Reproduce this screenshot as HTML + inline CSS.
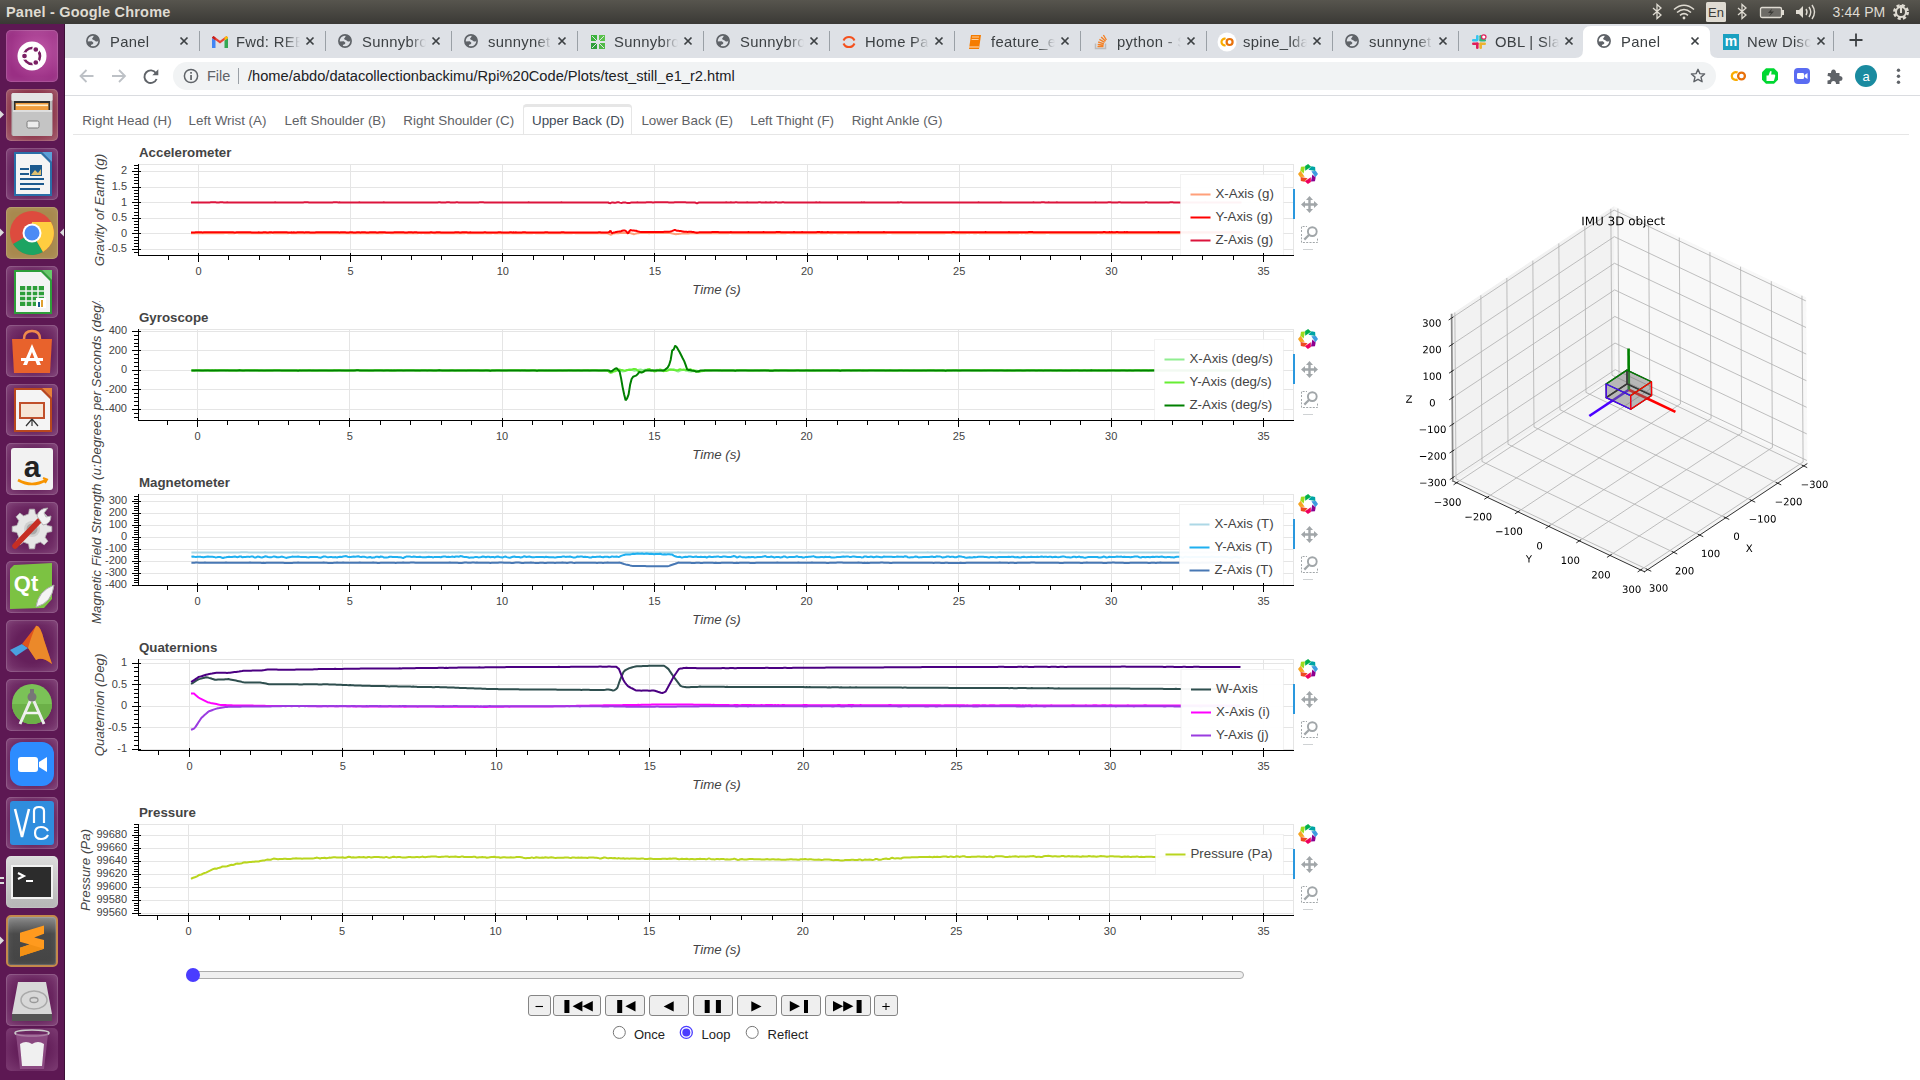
<!DOCTYPE html>
<html><head><meta charset="utf-8"><title>Panel</title>
<style>
html,body{margin:0;padding:0;width:1920px;height:1080px;overflow:hidden;background:#fff;font-family:"Liberation Sans",sans-serif}
svg text{font-family:"Liberation Sans",sans-serif}
</style></head><body>
<div style="position:absolute;left:65px;top:96px;width:1855px;height:984px;background:#fff"></div>
<div style="position:absolute;left:0;top:0;width:1920px;height:24px;background:linear-gradient(#57554e,#3a3935)"></div>
<div style="position:absolute;left:6px;top:3px;font:bold 14.5px/18px 'Liberation Sans',sans-serif;color:#dfdbd2;letter-spacing:0.2px">Panel - Google Chrome</div>
<svg style="position:absolute;left:1648px;top:0" width="272" height="24" viewBox="1648 0 272 24">
<g stroke="#dfdbd2" stroke-width="1.3" fill="none">
<path d="M1653 8 L1661 15 L1657 18.5 L1657 4.5 L1661 8 L1653 15"/>
<path d="M1738 8 L1746 15 L1742 18.5 L1742 4.5 L1746 8 L1738 15"/>
</g>
<path d="M1674 9.5 Q1684 1 1694 9.5" stroke="#dfdbd2" stroke-width="1.6" fill="none"/>
<path d="M1677 12.5 Q1684 6.5 1691 12.5" stroke="#dfdbd2" stroke-width="1.6" fill="none"/>
<path d="M1680 15.3 Q1684 12 1688 15.3" stroke="#dfdbd2" stroke-width="1.6" fill="none"/>
<circle cx="1684" cy="18" r="1.4" fill="#dfdbd2"/>
<rect x="1706" y="2" width="20" height="20" rx="1.5" fill="#dfdbd2"/>
<text x="1716" y="17" text-anchor="middle" font-family="Liberation Sans" font-size="13" fill="#3c3b37">En</text>
<rect x="1760.5" y="7.5" width="21" height="10" rx="1.5" stroke="#dfdbd2" stroke-width="1.3" fill="#6d6b66"/>
<rect x="1782" y="10" width="2" height="5" fill="#dfdbd2"/>
<path d="M1772 8.5 L1768 13 L1771 13 L1769 16.5 L1774 11.5 L1771 11.5Z" fill="#3c3b37"/>
<path d="M1796 10 L1799 10 L1803 6 L1803 18 L1799 14 L1796 14Z" fill="#dfdbd2"/>
<path d="M1806 9 Q1808 12 1806 15 M1809 7 Q1812.5 12 1809 17 M1812 5 Q1817 12 1812 19" stroke="#dfdbd2" stroke-width="1.4" fill="none"/>
<text x="1832.5" y="17" font-family="Liberation Sans" font-size="14" fill="#dfdbd2" letter-spacing="0.1">3:44 PM</text>
<g transform="translate(1901,12)"><circle r="6.5" stroke="#dfdbd2" stroke-width="3" fill="none" stroke-dasharray="3 2.1"/><circle r="5" stroke="#dfdbd2" stroke-width="2" fill="none"/><path d="M0 -7 L0 1" stroke="#dfdbd2" stroke-width="2"/></g>
</svg>
<div style="position:absolute;left:0;top:24px;width:64px;height:1056px;background:#5d1853"></div>
<div style="position:absolute;left:64px;top:24px;width:1px;height:1056px;background:#3c1036"></div>
<div style="position:absolute;left:6px;top:30px;width:52px;height:52px;border-radius:5px;box-shadow:inset 0 0 0 1px rgba(255,255,255,0.13),inset 0 0 7px rgba(255,255,255,0.12);background:radial-gradient(circle at 60% 40%,#c05aa8,#9a2f84 70%);overflow:hidden"><svg width="52" height="52" viewBox="0 0 52 52"><circle cx="26" cy="26" r="14.5" fill="#fff"/>
<circle cx="26" cy="26" r="8" stroke="#7a1f63" stroke-width="2.6" fill="none"/>
<circle cx="18.5" cy="26" r="3" fill="#7a1f63" stroke="#fff" stroke-width="1.3"/><circle cx="29.8" cy="19.5" r="3" fill="#7a1f63" stroke="#fff" stroke-width="1.3"/><circle cx="29.8" cy="32.5" r="3" fill="#7a1f63" stroke="#fff" stroke-width="1.3"/></svg></div>
<div style="position:absolute;left:6px;top:89px;width:52px;height:52px;border-radius:5px;box-shadow:inset 0 0 0 1px rgba(255,255,255,0.13),inset 0 0 7px rgba(255,255,255,0.12);background:radial-gradient(ellipse at 50% 45%,#8a3348 50%,#a2596a 100%);overflow:hidden"><svg width="52" height="52" viewBox="0 0 52 52"><rect x="5.5" y="4" width="41" height="43" rx="2" fill="#b8b8b8"/><rect x="5.5" y="4" width="41" height="8" rx="1.5" fill="#e4e4e4"/>
<rect x="8" y="12" width="36" height="9" fill="#2e2e2e"/><rect x="9.5" y="14" width="33" height="7" fill="#ef9d3e"/><rect x="10" y="15.5" width="32" height="1.6" fill="#fff0d0"/>
<rect x="7" y="21" width="39" height="26" fill="#c4c4c4"/><rect x="7" y="21" width="39" height="2" fill="#dedede"/><rect x="21" y="32" width="12" height="7" rx="1.5" fill="#ececec" stroke="#7a7a7a" stroke-width="1"/></svg></div>
<div style="position:absolute;left:6px;top:148px;width:52px;height:52px;border-radius:5px;box-shadow:inset 0 0 0 1px rgba(255,255,255,0.13),inset 0 0 7px rgba(255,255,255,0.12);background:radial-gradient(ellipse at 50% 50%,#65205b 45%,#7d3c73 100%);overflow:hidden"><svg width="52" height="52" viewBox="0 0 52 52"><path d="M8 4 L36 4 L46 14 L46 48 L8 48Z" fill="#2a6fa8"/><path d="M10 6 L35 6 L44 15 L44 46 L10 46Z" fill="#f4f4f4"/><path d="M36 4 L46 4 L46 14Z" fill="#5aa0d8"/>
<rect x="14" y="20" width="9" height="2" fill="#1d5a8e"/><rect x="14" y="25" width="9" height="2" fill="#1d5a8e"/><rect x="24" y="17" width="12" height="11" fill="#1d5a8e"/><path d="M25 27 L29 22 L32 25 L35 21 L35 27Z" fill="#e0c070"/>
<rect x="14" y="30" width="24" height="2" fill="#1d5a8e"/><rect x="14" y="35" width="24" height="2" fill="#1d5a8e"/><rect x="14" y="40" width="20" height="2" fill="#1d5a8e"/></svg></div>
<div style="position:absolute;left:6px;top:207px;width:52px;height:52px;border-radius:5px;box-shadow:inset 0 0 0 1px rgba(255,255,255,0.13),inset 0 0 7px rgba(255,255,255,0.12);background:#a8894e;overflow:hidden"><svg width="52" height="52" viewBox="0 0 52 52"><circle cx="26" cy="26" r="22" fill="#dd4b3e"/>
<path d="M26 26 L7 37 A22 22 0 0 0 37 45Z" fill="#1da462"/><path d="M26 26 L37 45 A22 22 0 0 0 45 15 L26 15Z" fill="#ffcd40"/>
<circle cx="26" cy="26" r="9.5" fill="#fff"/><circle cx="26" cy="26" r="7.5" fill="#4c8bf5"/></svg></div>
<div style="position:absolute;left:6px;top:266px;width:52px;height:52px;border-radius:5px;box-shadow:inset 0 0 0 1px rgba(255,255,255,0.13),inset 0 0 7px rgba(255,255,255,0.12);background:radial-gradient(ellipse at 50% 50%,#65205b 45%,#7d3c73 100%);overflow:hidden"><svg width="52" height="52" viewBox="0 0 52 52"><path d="M8 4 L36 4 L46 14 L46 48 L8 48Z" fill="#2e9e3a"/><path d="M10 6 L35 6 L44 15 L44 46 L10 46Z" fill="#f4f4f4"/><path d="M36 4 L46 4 L46 14Z" fill="#66c96a"/>
<g fill="#2e9e3a"><rect x="14" y="20" width="24" height="20"/></g><g stroke="#f4f4f4" stroke-width="1.5"><path d="M14 25 H38 M14 30 H38 M14 35 H38 M20 20 V40 M26 20 V40 M32 20 V40"/></g><rect x="30" y="32" width="10" height="10" fill="#fff"/><rect x="32" y="36" width="2" height="5" fill="#1d5a8e"/><rect x="35" y="34" width="2" height="7" fill="#e0a030"/></svg></div>
<div style="position:absolute;left:6px;top:325px;width:52px;height:52px;border-radius:5px;box-shadow:inset 0 0 0 1px rgba(255,255,255,0.13),inset 0 0 7px rgba(255,255,255,0.12);background:radial-gradient(ellipse at 50% 50%,#65205b 45%,#7d3c73 100%);overflow:hidden"><svg width="52" height="52" viewBox="0 0 52 52"><path d="M18 14 Q18 6 26 6 Q34 6 34 14" stroke="#f08a4b" stroke-width="2.5" fill="none"/><path d="M6 14 L46 14 L44 48 L8 48Z" fill="#e8622c"/>
<path d="M26 19 L35 40 L31 40 L26 27 L21 40 L17 40Z" fill="#fff"/><rect x="15" y="33" width="22" height="3" fill="#fff"/></svg></div>
<div style="position:absolute;left:6px;top:384px;width:52px;height:52px;border-radius:5px;box-shadow:inset 0 0 0 1px rgba(255,255,255,0.13),inset 0 0 7px rgba(255,255,255,0.12);background:radial-gradient(ellipse at 50% 50%,#65205b 45%,#7d3c73 100%);overflow:hidden"><svg width="52" height="52" viewBox="0 0 52 52"><path d="M8 4 L36 4 L46 14 L46 48 L8 48Z" fill="#b8471e"/><path d="M10 6 L35 6 L44 15 L44 46 L10 46Z" fill="#f4f4f4"/><path d="M36 4 L46 4 L46 14Z" fill="#e6803a"/>
<rect x="13" y="18" width="26" height="17" fill="#c0502a"/><rect x="15" y="20" width="22" height="13" fill="#f6e6d6"/><path d="M26 35 L20 42 M26 35 L32 42 M26 35 L26 42" stroke="#333" stroke-width="1.2"/></svg></div>
<div style="position:absolute;left:6px;top:443px;width:52px;height:52px;border-radius:5px;box-shadow:inset 0 0 0 1px rgba(255,255,255,0.13),inset 0 0 7px rgba(255,255,255,0.12);background:radial-gradient(ellipse at 50% 50%,#65205b 45%,#7d3c73 100%);overflow:hidden"><svg width="52" height="52" viewBox="0 0 52 52"><rect x="5" y="5" width="42" height="42" rx="3" fill="#f2f2f2"/>
<text x="26" y="34" text-anchor="middle" font-family="Liberation Sans" font-weight="bold" font-size="30" fill="#222">a</text><path d="M12 37 Q26 45 40 37" stroke="#f79400" stroke-width="2.6" fill="none"/><path d="M37 35 L41 36.5 L39 40" stroke="#f79400" stroke-width="2" fill="none"/></svg></div>
<div style="position:absolute;left:6px;top:502px;width:52px;height:52px;border-radius:5px;box-shadow:inset 0 0 0 1px rgba(255,255,255,0.13),inset 0 0 7px rgba(255,255,255,0.12);background:radial-gradient(ellipse at 50% 50%,#65205b 45%,#7d3c73 100%);overflow:hidden"><svg width="52" height="52" viewBox="0 0 52 52"><path d="M41.1 23.6 L45.8 24.4 L45.8 29.6 L41.1 30.4 L39.1 35.3 L41.9 39.2 L38.2 42.9 L34.3 40.1 L29.4 42.1 L28.6 46.8 L23.4 46.8 L22.6 42.1 L17.7 40.1 L13.8 42.9 L10.1 39.2 L12.9 35.3 L10.9 30.4 L6.2 29.6 L6.2 24.4 L10.9 23.6 L12.9 18.7 L10.1 14.8 L13.8 11.1 L17.7 13.9 L22.6 11.9 L23.4 7.2 L28.6 7.2 L29.4 11.9 L34.3 13.9 L38.2 11.1 L41.9 14.8 L39.1 18.7Z" fill="#e6e6e6" stroke="#b8b8b8" stroke-width="0.8"/><circle cx="26" cy="27" r="8" fill="#cfcfcf"/><circle cx="26" cy="27" r="5.5" fill="#a8a8a8"/><path d="M9 44 L33 19" stroke="#c62e24" stroke-width="5.5" stroke-linecap="round"/><path d="M31 14 Q33 6 42 6 L38 11 L40 15 L45 14 Q45 22 37 23 Z" fill="#f2f2f2" stroke="#aaa" stroke-width="0.8"/></svg></div>
<div style="position:absolute;left:6px;top:561px;width:52px;height:52px;border-radius:5px;box-shadow:inset 0 0 0 1px rgba(255,255,255,0.13),inset 0 0 7px rgba(255,255,255,0.12);background:radial-gradient(ellipse at 50% 50%,#65205b 45%,#7d3c73 100%);overflow:hidden"><svg width="52" height="52" viewBox="0 0 52 52"><path d="M8 4 L46 2 L46 38 L38 47 L4 48 L4 8Z" fill="#7cc242"/>
<text x="20" y="30" text-anchor="middle" font-family="Liberation Sans" font-weight="bold" font-size="22" fill="#fff">Qt</text><path d="M30 46 Q32 30 48 24 Q46 42 30 46Z" fill="#f4f4f4" stroke="#aaa" stroke-width="1"/></svg></div>
<div style="position:absolute;left:6px;top:620px;width:52px;height:52px;border-radius:5px;box-shadow:inset 0 0 0 1px rgba(255,255,255,0.13),inset 0 0 7px rgba(255,255,255,0.12);background:radial-gradient(ellipse at 50% 50%,#65205b 45%,#7d3c73 100%);overflow:hidden"><svg width="52" height="52" viewBox="0 0 52 52"><path d="M4 30 L16 24 L22 28 L10 36Z" fill="#4aa0e0"/><path d="M16 24 L30 6 Q34 4 38 20 L46 44 Q36 36 30 40 L22 28Z" fill="#e0541c"/><path d="M30 6 Q26 14 22 28 L30 40 Q36 36 46 44 L38 20Q34 4 30 6Z" fill="#f0a030" opacity="0.7"/></svg></div>
<div style="position:absolute;left:6px;top:679px;width:52px;height:52px;border-radius:5px;box-shadow:inset 0 0 0 1px rgba(255,255,255,0.13),inset 0 0 7px rgba(255,255,255,0.12);background:radial-gradient(ellipse at 50% 50%,#65205b 45%,#7d3c73 100%);overflow:hidden"><svg width="52" height="52" viewBox="0 0 52 52"><circle cx="26" cy="25" r="20" fill="#7bc257"/><path d="M6 25 A20 20 0 0 0 46 25Z" fill="#6cb048"/>
<path d="M14 45 L26 18 L38 45" stroke="#ececec" stroke-width="3" fill="none"/><circle cx="26" cy="18" r="4.5" fill="#777"/><rect x="24" y="10" width="4" height="4" fill="#777"/><path d="M18 34 H34" stroke="#f4f4f4" stroke-width="2.5"/></svg></div>
<div style="position:absolute;left:6px;top:738px;width:52px;height:52px;border-radius:5px;box-shadow:inset 0 0 0 1px rgba(255,255,255,0.13),inset 0 0 7px rgba(255,255,255,0.12);background:radial-gradient(ellipse at 50% 50%,#65205b 45%,#7d3c73 100%);overflow:hidden"><svg width="52" height="52" viewBox="0 0 52 52"><rect x="4" y="4" width="44" height="44" rx="12" fill="#2d8cff"/><rect x="12" y="19" width="20" height="15" rx="3" fill="#fff"/><path d="M33 24 L41 19 L41 34 L33 29Z" fill="#fff"/></svg></div>
<div style="position:absolute;left:6px;top:797px;width:52px;height:52px;border-radius:5px;box-shadow:inset 0 0 0 1px rgba(255,255,255,0.13),inset 0 0 7px rgba(255,255,255,0.12);background:radial-gradient(ellipse at 50% 50%,#65205b 45%,#7d3c73 100%);overflow:hidden"><svg width="52" height="52" viewBox="0 0 52 52"><rect x="4" y="4" width="44" height="44" rx="3" fill="#2f8dde"/><path d="M9 12 L16 40 L23 12" stroke="#fff" stroke-width="2.5" fill="none"/><path d="M28 26 L28 14 Q28 10 33 10 Q38 10 38 14 L38 26" stroke="#fff" stroke-width="2.2" fill="none"/><path d="M42 34 Q40 30 35 30 Q29 30 29 36 Q29 42 35 42 Q40 42 42 38" stroke="#fff" stroke-width="2.2" fill="none"/></svg></div>
<div style="position:absolute;left:6px;top:856px;width:52px;height:52px;border-radius:5px;box-shadow:inset 0 0 0 1px rgba(255,255,255,0.13),inset 0 0 7px rgba(255,255,255,0.12);background:linear-gradient(#dcdcdc,#b5b5b5);overflow:hidden"><svg width="52" height="52" viewBox="0 0 52 52"><rect x="5" y="9" width="42" height="34" fill="#f2f2f2"/><rect x="7" y="11" width="38" height="30" fill="#2c2c2c"/><path d="M12 17 L18 20 L12 23" stroke="#fff" stroke-width="2" fill="none"/><rect x="20" y="24" width="7" height="2" fill="#fff"/></svg></div>
<div style="position:absolute;left:6px;top:915px;width:52px;height:52px;border-radius:5px;box-shadow:inset 0 0 0 1px rgba(255,255,255,0.13),inset 0 0 7px rgba(255,255,255,0.12);background:linear-gradient(#8a8a8a,#4a4a4a 35%,#444 100%);border:2px solid #c4894c;box-sizing:border-box;overflow:hidden"><svg width="48" height="48" viewBox="2 2 48 48"><path d="M14 17.8 L38 10.4 L38 18.8 L28.2 22.4 L38 25 L38 33.7 L14 41.4 L14 32.7 L23.6 29.4 L14 26.7Z" fill="#ff9a1e"/><path d="M23.6 29.4 L38 33.7 L14 41.4 L14 32.7Z" fill="#f39014"/></svg></div>
<div style="position:absolute;left:6px;top:974px;width:52px;height:52px;border-radius:5px;box-shadow:inset 0 0 0 1px rgba(255,255,255,0.13),inset 0 0 7px rgba(255,255,255,0.12);background:radial-gradient(ellipse at 50% 50%,#65205b 45%,#7d3c73 100%);overflow:hidden"><svg width="52" height="52" viewBox="0 0 52 52"><path d="M12 8 L40 8 L46 40 L6 40Z" fill="#d8d8d8"/><rect x="6" y="40" width="40" height="7" fill="#555"/><ellipse cx="28" cy="26" rx="13" ry="9" fill="none" stroke="#aaa" stroke-width="1.5"/><ellipse cx="28" cy="26" rx="4" ry="2.5" fill="none" stroke="#999" stroke-width="1.3"/></svg></div>
<div style="position:absolute;left:6px;top:1028px;width:52px;height:43px;border-radius:5px;background:radial-gradient(ellipse at 50% 50%,#65205b 45%,#7d3c73 100%);overflow:hidden"><svg width="52" height="43" viewBox="0 0 52 43"><ellipse cx="26" cy="5" rx="17" ry="3" fill="none" stroke="#ccc" stroke-width="1.5"/><path d="M10 6 L14 41 L38 41 L42 6Z" fill="#9a5a90" opacity="0.7"/><path d="M14 16 Q20 12 26 16 Q32 12 38 16 L36 38 L16 38Z" fill="#f0f0f0"/></svg></div>
<svg style="position:absolute;left:0;top:24px" width="65" height="1056" viewBox="0 24 65 1056">
<path d="M0 110.5 L4 114.5 L0 118.5Z" fill="#dcdcdc"/>
<path d="M0 228.5 L4 232.5 L0 236.5Z" fill="#dcdcdc"/><path d="M64 228.5 L60 232.5 L64 236.5Z" fill="#dcdcdc"/>
<path d="M0 877 L4 877 L4 879 L0 879Z M0 882 L4 882 L4 884 L0 884Z" fill="#dcdcdc"/>
<path d="M0 936.5 L4 940.5 L0 944.5Z" fill="#dcdcdc"/>
</svg>
<div style="position:absolute;left:65px;top:24px;width:1855px;height:34px;background:#dee1e6"></div>
<svg style="position:absolute;left:86px;top:34px" width="16" height="16" viewBox="0 0 16 16">
<circle cx="7" cy="7" r="6.1" stroke="#5f6368" stroke-width="1.7" fill="none"/>
<path d="M6 4.8 L7.4 2.7 L8 0.9 L11.5 2.1 L13.3 5.6 L11.5 7.4 L9.9 7.4 L8.2 6.2 L6.6 5.4Z" fill="#5f6368"/>
<path d="M1.1 7.4 L5.8 7.2 L7.4 8.7 L7 10.1 L5.2 10.7 L4.6 12.3 L2.1 10.7Z" fill="#5f6368"/>
</svg>
<div style="position:absolute;left:110px;top:32px;width:64px;height:20px;overflow:hidden;white-space:nowrap;font:14.8px/20px 'Liberation Sans',sans-serif;letter-spacing:0.3px;color:#3c4043;-webkit-mask-image:linear-gradient(90deg,#000 48px,transparent 64px)">Panel</div>
<svg style="position:absolute;left:179px;top:36px" width="10" height="10" viewBox="0 0 10 10"><path d="M1.5 1.5L8.5 8.5M8.5 1.5L1.5 8.5" stroke="#3c4043" stroke-width="1.7"/></svg>
<div style="position:absolute;left:199px;top:31px;width:1px;height:20px;background:#9aa0a6"></div>
<svg style="position:absolute;left:212px;top:36px" width="16" height="12" viewBox="0 0 16 12">
<path d="M0 2 L0 12 L3.5 12 L3.5 4.5 Z" fill="#4285f4"/><path d="M12.5 4.5 L12.5 12 L16 12 L16 2 Z" fill="#34a853"/>
<path d="M0 1.5 L8 7.5 L16 1.5 L14.5 0 L8 4.8 L1.5 0Z" fill="#ea4335"/><path d="M12.5 4.5 L16 2 L16 1.5 L14.5 0 L12.5 1.5Z" fill="#fbbc04"/><path d="M0 1.5 L1.5 0 L3.5 1.5 L3.5 4.5 L0 2Z" fill="#c5221f"/></svg>
<div style="position:absolute;left:236px;top:32px;width:64px;height:20px;overflow:hidden;white-space:nowrap;font:14.8px/20px 'Liberation Sans',sans-serif;letter-spacing:0.3px;color:#3c4043;-webkit-mask-image:linear-gradient(90deg,#000 48px,transparent 64px)">Fwd: REBO</div>
<svg style="position:absolute;left:305px;top:36px" width="10" height="10" viewBox="0 0 10 10"><path d="M1.5 1.5L8.5 8.5M8.5 1.5L1.5 8.5" stroke="#3c4043" stroke-width="1.7"/></svg>
<div style="position:absolute;left:325px;top:31px;width:1px;height:20px;background:#9aa0a6"></div>
<svg style="position:absolute;left:338px;top:34px" width="16" height="16" viewBox="0 0 16 16">
<circle cx="7" cy="7" r="6.1" stroke="#5f6368" stroke-width="1.7" fill="none"/>
<path d="M6 4.8 L7.4 2.7 L8 0.9 L11.5 2.1 L13.3 5.6 L11.5 7.4 L9.9 7.4 L8.2 6.2 L6.6 5.4Z" fill="#5f6368"/>
<path d="M1.1 7.4 L5.8 7.2 L7.4 8.7 L7 10.1 L5.2 10.7 L4.6 12.3 L2.1 10.7Z" fill="#5f6368"/>
</svg>
<div style="position:absolute;left:362px;top:32px;width:64px;height:20px;overflow:hidden;white-space:nowrap;font:14.8px/20px 'Liberation Sans',sans-serif;letter-spacing:0.3px;color:#3c4043;-webkit-mask-image:linear-gradient(90deg,#000 48px,transparent 64px)">Sunnybrook</div>
<svg style="position:absolute;left:431px;top:36px" width="10" height="10" viewBox="0 0 10 10"><path d="M1.5 1.5L8.5 8.5M8.5 1.5L1.5 8.5" stroke="#3c4043" stroke-width="1.7"/></svg>
<div style="position:absolute;left:451px;top:31px;width:1px;height:20px;background:#9aa0a6"></div>
<svg style="position:absolute;left:464px;top:34px" width="16" height="16" viewBox="0 0 16 16">
<circle cx="7" cy="7" r="6.1" stroke="#5f6368" stroke-width="1.7" fill="none"/>
<path d="M6 4.8 L7.4 2.7 L8 0.9 L11.5 2.1 L13.3 5.6 L11.5 7.4 L9.9 7.4 L8.2 6.2 L6.6 5.4Z" fill="#5f6368"/>
<path d="M1.1 7.4 L5.8 7.2 L7.4 8.7 L7 10.1 L5.2 10.7 L4.6 12.3 L2.1 10.7Z" fill="#5f6368"/>
</svg>
<div style="position:absolute;left:488px;top:32px;width:64px;height:20px;overflow:hidden;white-space:nowrap;font:14.8px/20px 'Liberation Sans',sans-serif;letter-spacing:0.3px;color:#3c4043;-webkit-mask-image:linear-gradient(90deg,#000 48px,transparent 64px)">sunnynet</div>
<svg style="position:absolute;left:557px;top:36px" width="10" height="10" viewBox="0 0 10 10"><path d="M1.5 1.5L8.5 8.5M8.5 1.5L1.5 8.5" stroke="#3c4043" stroke-width="1.7"/></svg>
<div style="position:absolute;left:577px;top:31px;width:1px;height:20px;background:#9aa0a6"></div>
<svg style="position:absolute;left:590px;top:34px" width="16" height="16" viewBox="0 0 16 16">
<path d="M1 1 L7 1 L7 7 Z M1 1 L1 7 L7 7Z" fill="#3cb33c"/><path d="M15 1 L9 1 L9 7Z M15 1 L15 7 L9 7Z" fill="#59c24a"/>
<path d="M1 15 L7 15 L7 9Z M1 15 L1 9 L7 9Z" fill="#2e9e3a"/><path d="M15 15 L9 15 L9 9Z M15 15 L15 9 L9 9Z" fill="#4fba45"/>
<path d="M2 2 L7 7 M14 2 L9 7 M2 14 L7 9 M14 14 L9 9" stroke="#dee1e6" stroke-width="1"/></svg>
<div style="position:absolute;left:614px;top:32px;width:64px;height:20px;overflow:hidden;white-space:nowrap;font:14.8px/20px 'Liberation Sans',sans-serif;letter-spacing:0.3px;color:#3c4043;-webkit-mask-image:linear-gradient(90deg,#000 48px,transparent 64px)">Sunnybrook</div>
<svg style="position:absolute;left:683px;top:36px" width="10" height="10" viewBox="0 0 10 10"><path d="M1.5 1.5L8.5 8.5M8.5 1.5L1.5 8.5" stroke="#3c4043" stroke-width="1.7"/></svg>
<div style="position:absolute;left:703px;top:31px;width:1px;height:20px;background:#9aa0a6"></div>
<svg style="position:absolute;left:716px;top:34px" width="16" height="16" viewBox="0 0 16 16">
<circle cx="7" cy="7" r="6.1" stroke="#5f6368" stroke-width="1.7" fill="none"/>
<path d="M6 4.8 L7.4 2.7 L8 0.9 L11.5 2.1 L13.3 5.6 L11.5 7.4 L9.9 7.4 L8.2 6.2 L6.6 5.4Z" fill="#5f6368"/>
<path d="M1.1 7.4 L5.8 7.2 L7.4 8.7 L7 10.1 L5.2 10.7 L4.6 12.3 L2.1 10.7Z" fill="#5f6368"/>
</svg>
<div style="position:absolute;left:740px;top:32px;width:64px;height:20px;overflow:hidden;white-space:nowrap;font:14.8px/20px 'Liberation Sans',sans-serif;letter-spacing:0.3px;color:#3c4043;-webkit-mask-image:linear-gradient(90deg,#000 48px,transparent 64px)">Sunnybrook</div>
<svg style="position:absolute;left:809px;top:36px" width="10" height="10" viewBox="0 0 10 10"><path d="M1.5 1.5L8.5 8.5M8.5 1.5L1.5 8.5" stroke="#3c4043" stroke-width="1.7"/></svg>
<div style="position:absolute;left:829px;top:31px;width:1px;height:20px;background:#9aa0a6"></div>
<svg style="position:absolute;left:841px;top:34px" width="16" height="16" viewBox="0 0 16 16">
<path d="M2.5 6.5 A6 6 0 0 1 13.5 6.5" stroke="#f4511e" stroke-width="2" fill="none"/><path d="M2.5 9.5 A6 6 0 0 0 13.5 9.5" stroke="#f4511e" stroke-width="2" fill="none"/></svg>
<div style="position:absolute;left:865px;top:32px;width:64px;height:20px;overflow:hidden;white-space:nowrap;font:14.8px/20px 'Liberation Sans',sans-serif;letter-spacing:0.3px;color:#3c4043;-webkit-mask-image:linear-gradient(90deg,#000 48px,transparent 64px)">Home Page</div>
<svg style="position:absolute;left:934px;top:36px" width="10" height="10" viewBox="0 0 10 10"><path d="M1.5 1.5L8.5 8.5M8.5 1.5L1.5 8.5" stroke="#3c4043" stroke-width="1.7"/></svg>
<div style="position:absolute;left:954px;top:31px;width:1px;height:20px;background:#9aa0a6"></div>
<svg style="position:absolute;left:967px;top:34px" width="16" height="16" viewBox="0 0 16 16">
<path d="M4 1 L14 1 L12 15 L2 15 Z" fill="#f57c00"/><path d="M5 3 L12 3 M4.6 5.5 L11.6 5.5" stroke="#ffd0a0" stroke-width="1"/><path d="M2 13 L12 13" stroke="#ffe0c0" stroke-width="1"/></svg>
<div style="position:absolute;left:991px;top:32px;width:64px;height:20px;overflow:hidden;white-space:nowrap;font:14.8px/20px 'Liberation Sans',sans-serif;letter-spacing:0.3px;color:#3c4043;-webkit-mask-image:linear-gradient(90deg,#000 48px,transparent 64px)">feature_e</div>
<svg style="position:absolute;left:1060px;top:36px" width="10" height="10" viewBox="0 0 10 10"><path d="M1.5 1.5L8.5 8.5M8.5 1.5L1.5 8.5" stroke="#3c4043" stroke-width="1.7"/></svg>
<div style="position:absolute;left:1080px;top:31px;width:1px;height:20px;background:#9aa0a6"></div>
<svg style="position:absolute;left:1093px;top:34px" width="16" height="16" viewBox="0 0 16 16">
<path d="M2.5 9.5 L2.5 14.5 L12.5 14.5 L12.5 9.5" stroke="#bcbbbb" stroke-width="1.5" fill="none"/>
<path d="M4.5 12.5 L10.5 12.5 M4.7 10.4 L10.6 11.2 M5.2 8 L10.9 9.8 M6.4 5.4 L11.6 8.4 M8.2 3 L12.6 7.2 M10.4 1 L13.4 6" stroke="#f48024" stroke-width="1.4"/></svg>
<div style="position:absolute;left:1117px;top:32px;width:64px;height:20px;overflow:hidden;white-space:nowrap;font:14.8px/20px 'Liberation Sans',sans-serif;letter-spacing:0.3px;color:#3c4043;-webkit-mask-image:linear-gradient(90deg,#000 48px,transparent 64px)">python - S</div>
<svg style="position:absolute;left:1186px;top:36px" width="10" height="10" viewBox="0 0 10 10"><path d="M1.5 1.5L8.5 8.5M8.5 1.5L1.5 8.5" stroke="#3c4043" stroke-width="1.7"/></svg>
<div style="position:absolute;left:1206px;top:31px;width:1px;height:20px;background:#9aa0a6"></div>
<svg style="position:absolute;left:1217px;top:32px" width="20" height="20" viewBox="0 0 20 20">
<circle cx="10" cy="10" r="9.5" fill="#fff"/>
<path d="M8.6 6.8 A3.3 3.3 0 1 0 8.6 13.2" stroke="#f9ab00" stroke-width="2.2" fill="none"/>
<circle cx="12.6" cy="10" r="3" stroke="#e8710a" stroke-width="2.2" fill="none"/></svg>
<div style="position:absolute;left:1243px;top:32px;width:64px;height:20px;overflow:hidden;white-space:nowrap;font:14.8px/20px 'Liberation Sans',sans-serif;letter-spacing:0.3px;color:#3c4043;-webkit-mask-image:linear-gradient(90deg,#000 48px,transparent 64px)">spine_lda</div>
<svg style="position:absolute;left:1312px;top:36px" width="10" height="10" viewBox="0 0 10 10"><path d="M1.5 1.5L8.5 8.5M8.5 1.5L1.5 8.5" stroke="#3c4043" stroke-width="1.7"/></svg>
<div style="position:absolute;left:1332px;top:31px;width:1px;height:20px;background:#9aa0a6"></div>
<svg style="position:absolute;left:1345px;top:34px" width="16" height="16" viewBox="0 0 16 16">
<circle cx="7" cy="7" r="6.1" stroke="#5f6368" stroke-width="1.7" fill="none"/>
<path d="M6 4.8 L7.4 2.7 L8 0.9 L11.5 2.1 L13.3 5.6 L11.5 7.4 L9.9 7.4 L8.2 6.2 L6.6 5.4Z" fill="#5f6368"/>
<path d="M1.1 7.4 L5.8 7.2 L7.4 8.7 L7 10.1 L5.2 10.7 L4.6 12.3 L2.1 10.7Z" fill="#5f6368"/>
</svg>
<div style="position:absolute;left:1369px;top:32px;width:64px;height:20px;overflow:hidden;white-space:nowrap;font:14.8px/20px 'Liberation Sans',sans-serif;letter-spacing:0.3px;color:#3c4043;-webkit-mask-image:linear-gradient(90deg,#000 48px,transparent 64px)">sunnynet</div>
<svg style="position:absolute;left:1438px;top:36px" width="10" height="10" viewBox="0 0 10 10"><path d="M1.5 1.5L8.5 8.5M8.5 1.5L1.5 8.5" stroke="#3c4043" stroke-width="1.7"/></svg>
<div style="position:absolute;left:1458px;top:31px;width:1px;height:20px;background:#9aa0a6"></div>
<svg style="position:absolute;left:1471px;top:34px" width="16" height="16" viewBox="0 0 16 16">
<rect x="5" y="1" width="2.6" height="6" rx="1.3" fill="#36c5f0"/><rect x="1" y="5" width="6" height="2.6" rx="1.3" fill="#36c5f0"/>
<rect x="8.4" y="5" width="6.6" height="2.6" rx="1.3" fill="#2eb67d"/><rect x="8.4" y="1" width="2.6" height="6" rx="1.3" fill="#2eb67d"/>
<rect x="8.4" y="8.4" width="2.6" height="6.6" rx="1.3" fill="#ecb22e"/><rect x="8.4" y="8.4" width="6.6" height="2.6" rx="1.3" fill="#ecb22e"/>
<rect x="1" y="8.4" width="6.6" height="2.6" rx="1.3" fill="#e01e5a"/><rect x="5" y="8.4" width="2.6" height="6.6" rx="1.3" fill="#e01e5a"/>
<circle cx="12.8" cy="3" r="2.2" fill="#fff" stroke="#e01e5a" stroke-width="1.2"/></svg>
<div style="position:absolute;left:1495px;top:32px;width:64px;height:20px;overflow:hidden;white-space:nowrap;font:14.8px/20px 'Liberation Sans',sans-serif;letter-spacing:0.3px;color:#3c4043;-webkit-mask-image:linear-gradient(90deg,#000 48px,transparent 64px)">OBL | Slack</div>
<svg style="position:absolute;left:1564px;top:36px" width="10" height="10" viewBox="0 0 10 10"><path d="M1.5 1.5L8.5 8.5M8.5 1.5L1.5 8.5" stroke="#3c4043" stroke-width="1.7"/></svg>
<svg style="position:absolute;left:1575px;top:26px" width="143" height="32" viewBox="0 0 143 32">
<path d="M0 32 Q8 32 8 24 L8 8 Q8 0 16 0 L127 0 Q135 0 135 8 L135 24 Q135 32 143 32Z" fill="#ffffff"/></svg>
<svg style="position:absolute;left:1597px;top:34px" width="16" height="16" viewBox="0 0 16 16">
<circle cx="7" cy="7" r="6.1" stroke="#5f6368" stroke-width="1.7" fill="none"/>
<path d="M6 4.8 L7.4 2.7 L8 0.9 L11.5 2.1 L13.3 5.6 L11.5 7.4 L9.9 7.4 L8.2 6.2 L6.6 5.4Z" fill="#5f6368"/>
<path d="M1.1 7.4 L5.8 7.2 L7.4 8.7 L7 10.1 L5.2 10.7 L4.6 12.3 L2.1 10.7Z" fill="#5f6368"/>
</svg>
<div style="position:absolute;left:1621px;top:32px;width:64px;height:20px;overflow:hidden;white-space:nowrap;font:14.8px/20px 'Liberation Sans',sans-serif;letter-spacing:0.3px;color:#3c4043;-webkit-mask-image:linear-gradient(90deg,#000 48px,transparent 64px)">Panel</div>
<svg style="position:absolute;left:1690px;top:36px" width="10" height="10" viewBox="0 0 10 10"><path d="M1.5 1.5L8.5 8.5M8.5 1.5L1.5 8.5" stroke="#3c4043" stroke-width="1.7"/></svg>
<div style="position:absolute;left:1723px;top:34px;width:16px;height:16px;background:#1aa0c0;color:#fff;font:bold 14px/15px 'Liberation Sans',sans-serif;text-align:center">m</div>
<div style="position:absolute;left:1747px;top:32px;width:64px;height:20px;overflow:hidden;white-space:nowrap;font:14.8px/20px 'Liberation Sans',sans-serif;letter-spacing:0.3px;color:#3c4043;-webkit-mask-image:linear-gradient(90deg,#000 48px,transparent 64px)">New Discussion</div>
<svg style="position:absolute;left:1816px;top:36px" width="10" height="10" viewBox="0 0 10 10"><path d="M1.5 1.5L8.5 8.5M8.5 1.5L1.5 8.5" stroke="#3c4043" stroke-width="1.7"/></svg>
<div style="position:absolute;left:1833px;top:31px;width:1px;height:20px;background:#9aa0a6"></div>
<svg style="position:absolute;left:1849px;top:33px" width="14" height="14" viewBox="0 0 14 14"><path d="M7 0.5V13.5M0.5 7H13.5" stroke="#3c4043" stroke-width="1.8"/></svg>
<div style="position:absolute;left:65px;top:58px;width:1855px;height:37px;background:#ffffff"></div>
<div style="position:absolute;left:65px;top:95px;width:1855px;height:1px;background:#dadce0"></div>
<svg style="position:absolute;left:65px;top:58px" width="130" height="37" viewBox="65 58 130 37">
<path d="M93.5 76 L80.5 76 M86.5 70 L80.5 76 L86.5 82" stroke="#bdc1c6" stroke-width="1.8" fill="none"/>
<path d="M112 76 L125 76 M119 70 L125 76 L119 82" stroke="#bdc1c6" stroke-width="1.8" fill="none"/>
<path d="M156 73.2 A6.3 6.3 0 1 0 156.6 79" stroke="#5f6368" stroke-width="1.9" fill="none"/>
<path d="M158.3 69.2 L158.3 75.2 L152.3 75.2Z" fill="#5f6368"/>
</svg>
<div style="position:absolute;left:173px;top:62px;width:1543px;height:28px;border-radius:14px;background:#f1f3f4"></div>
<svg style="position:absolute;left:183px;top:68px" width="16" height="16" viewBox="0 0 16 16"><circle cx="8" cy="8" r="6.6" stroke="#5f6368" stroke-width="1.5" fill="none"/><rect x="7.2" y="7" width="1.7" height="5" fill="#5f6368"/><rect x="7.2" y="4" width="1.7" height="1.7" fill="#5f6368"/></svg>
<div style="position:absolute;left:207px;top:66px;font:14.5px/20px 'Liberation Sans',sans-serif;color:#5f6368">File</div>
<div style="position:absolute;left:238px;top:68px;width:1px;height:16px;background:#9aa0a6"></div>
<div id="url" style="position:absolute;left:248px;top:66px;font:14.65px/20px 'Liberation Sans',sans-serif;color:#202124;white-space:nowrap">/home/abdo/datacollectionbackimu/Rpi%20Code/Plots/test_still_e1_r2.html</div>
<svg style="position:absolute;left:1690px;top:68px" width="16" height="16" viewBox="0 0 16 16"><path d="M8 1.3 L9.9 5.6 L14.6 6 L11 9.1 L12.1 13.7 L8 11.3 L3.9 13.7 L5 9.1 L1.4 6 L6.1 5.6Z" stroke="#5f6368" stroke-width="1.4" fill="none" stroke-linejoin="round"/></svg>
<svg style="position:absolute;left:1725px;top:62px" width="195" height="30" viewBox="1725 62 195 30">
<path d="M1737.6 72.6 A3.9 3.9 0 1 0 1737.6 79.4" stroke="#f9ab00" stroke-width="2.3" fill="none"/>
<circle cx="1741.5" cy="76" r="3.4" stroke="#e8710a" stroke-width="2.3" fill="none"/>
<path d="M1766 68.2 L1774 68.2 L1778 72.2 L1778 79.8 L1774 83.8 L1766 83.8 L1762 79.8 L1762 72.2Z" fill="#00d731"/>
<path d="M1766.5 75.5 L1768.5 75.5 L1770 71.5 Q1771 70.3 1771.6 71.6 L1771.2 74.5 L1774.5 74.5 Q1775.6 75 1775.2 76.2 L1774 80.4 Q1773.6 81 1772.8 81 L1766.5 81Z" fill="#fff"/>
<rect x="1794" y="68" width="16" height="16" rx="4" fill="#5a6cf2"/>
<rect x="1797" y="73" width="7" height="6" rx="1.2" fill="#fff"/><path d="M1804.5 75 L1807.5 73 L1807.5 79 L1804.5 77Z" fill="#fff"/>
<path d="M1828 73 L1831 73 Q1831 69.5 1833.5 69.5 Q1836 69.5 1836 73 L1839.5 73 L1839.5 76 Q1842.5 76 1842.5 78.5 Q1842.5 81 1839.5 81 L1839.5 84 L1836 84 Q1836 81 1833.5 81 Q1831 81 1831 84 L1827.5 84 L1827.5 80.5 Q1830.5 80.5 1830.5 78.3 Q1830.5 76 1827.5 76Z" fill="#5f6368"/>
<circle cx="1866" cy="76" r="11" fill="#1a8ba0"/>
<text x="1866" y="80.5" text-anchor="middle" font-family="Liberation Sans" font-size="13" fill="#fff">a</text>
<circle cx="1898.5" cy="70.3" r="1.7" fill="#5f6368"/><circle cx="1898.5" cy="76.3" r="1.7" fill="#5f6368"/><circle cx="1898.5" cy="82.3" r="1.7" fill="#5f6368"/>
</svg>
<div style="position:absolute;left:73px;top:134px;width:1836px;height:1px;background:#e6e6e6"></div>
<div style="position:absolute;left:82.3px;top:112px;font:13.4px/18px 'Liberation Sans', sans-serif;color:#606266;white-space:nowrap">Right Head (H)</div>
<div style="position:absolute;left:188.6px;top:112px;font:13.4px/18px 'Liberation Sans', sans-serif;color:#606266;white-space:nowrap">Left Wrist (A)</div>
<div style="position:absolute;left:284.5px;top:112px;font:13.4px/18px 'Liberation Sans', sans-serif;color:#606266;white-space:nowrap">Left Shoulder (B)</div>
<div style="position:absolute;left:403.3px;top:112px;font:13.4px/18px 'Liberation Sans', sans-serif;color:#606266;white-space:nowrap">Right Shoulder (C)</div>
<div style="position:absolute;left:523px;top:104px;width:109px;height:30px;border:1px solid #e6e6e6;border-top:3px solid #e6e6e6;border-bottom:none;border-radius:4px 4px 0 0;background:#fff;box-sizing:border-box"></div>
<div style="position:absolute;left:532px;top:112px;font:13.4px/18px 'Liberation Sans', sans-serif;color:#3f4b57;white-space:nowrap">Upper Back (D)</div>
<div style="position:absolute;left:641.4px;top:112px;font:13.4px/18px 'Liberation Sans', sans-serif;color:#606266;white-space:nowrap">Lower Back (E)</div>
<div style="position:absolute;left:750.2px;top:112px;font:13.4px/18px 'Liberation Sans', sans-serif;color:#606266;white-space:nowrap">Left Thight (F)</div>
<div style="position:absolute;left:851.7px;top:112px;font:13.4px/18px 'Liberation Sans', sans-serif;color:#606266;white-space:nowrap">Right Ankle (G)</div>
<svg style="position:absolute;left:0;top:0" width="1920" height="1080" viewBox="0 0 1920 1080">
<clipPath id="clip0"><rect x="138.5" y="164.5" width="1155.0" height="91.0"/></clipPath>
<path d="M198.5 164.5V255.5M350.5 164.5V255.5M502.5 164.5V255.5M654.5 164.5V255.5M807.5 164.5V255.5M959.5 164.5V255.5M1111.5 164.5V255.5M1263.5 164.5V255.5M138.5 171.5H1293.5M138.5 187.5H1293.5M138.5 202.5H1293.5M138.5 218.5H1293.5M138.5 233.5H1293.5M138.5 249.5H1293.5" stroke="#e5e5e5" stroke-width="1" fill="none"/>
<rect x="138.5" y="164.5" width="1155.0" height="91.0" fill="none" stroke="#e5e5e5" stroke-width="1"/>
<g clip-path="url(#clip0)">
<path d="M191.0 233.2 L192.2 233.2 L193.3 233.2 L194.5 233.2 L195.7 233.2 L196.8 233.2 L198.0 233.2 L199.2 233.2 L200.3 233.3 L201.5 233.2 L202.7 233.2 L203.9 233.2 L205.0 233.2 L206.2 233.2 L207.4 233.2 L208.5 233.3 L209.7 233.3 L210.9 233.3 L212.0 233.2 L213.2 233.2 L214.4 233.2 L215.5 233.2 L216.7 233.2 L217.9 233.2 L219.0 233.2 L220.2 233.2 L221.4 233.2 L222.6 233.2 L223.7 233.2 L224.9 233.1 L226.1 233.1 L227.2 233.1 L228.4 233.2 L229.6 233.2 L230.7 233.2 L231.9 233.2 L233.1 233.2 L234.2 233.2 L235.4 233.1 L236.6 233.1 L237.7 233.1 L238.9 233.2 L240.1 233.2 L241.2 233.2 L242.4 233.3 L243.6 233.3 L244.8 233.3 L245.9 233.2 L247.1 233.2 L248.3 233.2 L249.4 233.3 L250.6 233.2 L251.8 233.3 L252.9 233.3 L254.1 233.3 L255.3 233.3 L256.4 233.2 L257.6 233.2 L258.8 233.2 L259.9 233.2 L261.1 233.2 L262.3 233.3 L263.4 233.2 L264.6 233.3 L265.8 233.2 L267.0 233.2 L268.1 233.2 L269.3 233.2 L270.5 233.2 L271.6 233.1 L272.8 233.1 L274.0 233.2 L275.1 233.3 L276.3 233.3 L277.5 233.2 L278.6 233.2 L279.8 233.2 L281.0 233.3 L282.1 233.2 L283.3 233.2 L284.5 233.2 L285.7 233.2 L286.8 233.2 L288.0 233.2 L289.2 233.1 L290.3 233.1 L291.5 233.2 L292.7 233.2 L293.8 233.2 L295.0 233.2 L296.2 233.2 L297.3 233.3 L298.5 233.3 L299.7 233.3 L300.8 233.2 L302.0 233.2 L303.2 233.2 L304.3 233.2 L305.5 233.2 L306.7 233.2 L307.9 233.2 L309.0 233.2 L310.2 233.2 L311.4 233.2 L312.5 233.2 L313.7 233.2 L314.9 233.2 L316.0 233.2 L317.2 233.2 L318.4 233.2 L319.5 233.2 L320.7 233.3 L321.9 233.3 L323.0 233.2 L324.2 233.3 L325.4 233.3 L326.5 233.3 L327.7 233.2 L328.9 233.2 L330.1 233.3 L331.2 233.2 L332.4 233.3 L333.6 233.2 L334.7 233.3 L335.9 233.2 L337.1 233.2 L338.2 233.2 L339.4 233.2 L340.6 233.2 L341.7 233.3 L342.9 233.2 L344.1 233.2 L345.2 233.1 L346.4 233.2 L347.6 233.2 L348.8 233.2 L349.9 233.2 L351.1 233.2 L352.3 233.2 L353.4 233.2 L354.6 233.2 L355.8 233.2 L356.9 233.2 L358.1 233.1 L359.3 233.2 L360.4 233.2 L361.6 233.2 L362.8 233.1 L363.9 233.2 L365.1 233.2 L366.3 233.2 L367.4 233.2 L368.6 233.2 L369.8 233.2 L371.0 233.2 L372.1 233.2 L373.3 233.2 L374.5 233.2 L375.6 233.3 L376.8 233.2 L378.0 233.2 L379.1 233.2 L380.3 233.3 L381.5 233.3 L382.6 233.2 L383.8 233.1 L385.0 233.1 L386.1 233.1 L387.3 233.1 L388.5 233.1 L389.6 233.1 L390.8 233.2 L392.0 233.2 L393.2 233.2 L394.3 233.2 L395.5 233.2 L396.7 233.2 L397.8 233.2 L399.0 233.2 L400.2 233.2 L401.3 233.2 L402.5 233.2 L403.7 233.2 L404.8 233.2 L406.0 233.2 L407.2 233.3 L408.3 233.3 L409.5 233.3 L410.7 233.2 L411.9 233.1 L413.0 233.2 L414.2 233.2 L415.4 233.3 L416.5 233.3 L417.7 233.2 L418.9 233.1 L420.0 233.1 L421.2 233.2 L422.4 233.1 L423.5 233.1 L424.7 233.2 L425.9 233.2 L427.0 233.2 L428.2 233.2 L429.4 233.2 L430.5 233.2 L431.7 233.1 L432.9 233.1 L434.1 233.2 L435.2 233.2 L436.4 233.2 L437.6 233.2 L438.7 233.2 L439.9 233.2 L441.1 233.2 L442.2 233.2 L443.4 233.2 L444.6 233.3 L445.7 233.2 L446.9 233.1 L448.1 233.2 L449.2 233.2 L450.4 233.3 L451.6 233.3 L452.7 233.2 L453.9 233.2 L455.1 233.2 L456.3 233.2 L457.4 233.2 L458.6 233.2 L459.8 233.2 L460.9 233.2 L462.1 233.2 L463.3 233.1 L464.4 233.2 L465.6 233.1 L466.8 233.1 L467.9 233.2 L469.1 233.2 L470.3 233.2 L471.4 233.2 L472.6 233.2 L473.8 233.2 L475.0 233.2 L476.1 233.2 L477.3 233.2 L478.5 233.2 L479.6 233.2 L480.8 233.2 L482.0 233.3 L483.1 233.3 L484.3 233.3 L485.5 233.2 L486.6 233.3 L487.8 233.3 L489.0 233.3 L490.1 233.2 L491.3 233.2 L492.5 233.1 L493.6 233.1 L494.8 233.2 L496.0 233.2 L497.2 233.2 L498.3 233.2 L499.5 233.2 L500.7 233.2 L501.8 233.1 L503.0 233.2 L504.2 233.1 L505.3 233.2 L506.5 233.2 L507.7 233.2 L508.8 233.2 L510.0 233.1 L511.2 233.2 L512.3 233.2 L513.5 233.3 L514.7 233.2 L515.8 233.2 L517.0 233.2 L518.2 233.2 L519.4 233.2 L520.5 233.2 L521.7 233.2 L522.9 233.2 L524.0 233.2 L525.2 233.3 L526.4 233.2 L527.5 233.3 L528.7 233.2 L529.9 233.2 L531.0 233.2 L532.2 233.2 L533.4 233.1 L534.5 233.1 L535.7 233.2 L536.9 233.2 L538.1 233.2 L539.2 233.2 L540.4 233.3 L541.6 233.3 L542.7 233.3 L543.9 233.2 L545.1 233.2 L546.2 233.2 L547.4 233.2 L548.6 233.2 L549.7 233.2 L550.9 233.2 L552.1 233.2 L553.2 233.2 L554.4 233.3 L555.6 233.2 L556.7 233.2 L557.9 233.2 L559.1 233.2 L560.3 233.2 L561.4 233.3 L562.6 233.2 L563.8 233.2 L564.9 233.1 L566.1 233.2 L567.3 233.2 L568.4 233.2 L569.6 233.2 L570.8 233.2 L571.9 233.2 L573.1 233.1 L574.3 233.1 L575.4 233.2 L576.6 233.3 L577.8 233.3 L578.9 233.3 L580.1 233.2 L581.3 233.2 L582.5 233.2 L583.6 233.3 L584.8 233.2 L586.0 233.2 L587.1 233.2 L588.3 233.2 L589.5 233.2 L590.6 233.3 L591.8 233.2 L593.0 233.2 L594.1 233.1 L595.3 233.2 L596.5 233.2 L597.6 233.2 L598.8 233.2 L600.0 233.2 L601.2 233.2 L602.3 233.2 L603.5 233.3 L604.7 233.3 L605.8 233.3 L607.0 233.3 L608.2 233.4 L609.3 234.0 L610.5 234.7 L611.7 234.5 L612.8 233.6 L614.0 233.4 L615.2 233.3 L616.3 233.2 L617.5 233.2 L618.7 233.2 L619.8 233.1 L621.0 233.1 L622.2 233.0 L623.4 233.0 L624.5 233.0 L625.7 233.0 L626.9 232.9 L628.0 232.9 L629.2 233.0 L630.4 233.1 L631.5 233.5 L632.7 233.8 L633.9 234.2 L635.0 233.9 L636.2 233.5 L637.4 233.3 L638.5 233.2 L639.7 233.1 L640.9 233.1 L642.0 233.0 L643.2 233.1 L644.4 233.1 L645.6 233.1 L646.7 233.1 L647.9 233.1 L649.1 233.2 L650.2 233.1 L651.4 233.1 L652.6 233.1 L653.7 233.1 L654.9 233.1 L656.1 233.1 L657.2 233.0 L658.4 233.0 L659.6 233.0 L660.7 233.1 L661.9 233.1 L663.1 233.1 L664.3 233.0 L665.4 233.0 L666.6 233.0 L667.8 233.0 L668.9 233.0 L670.1 233.0 L671.3 233.2 L672.4 233.5 L673.6 233.7 L674.8 234.0 L675.9 234.3 L677.1 234.1 L678.3 234.0 L679.4 233.8 L680.6 233.7 L681.8 233.6 L682.9 233.5 L684.1 233.5 L685.3 233.6 L686.5 233.6 L687.6 233.4 L688.8 233.4 L690.0 233.3 L691.1 233.3 L692.3 233.3 L693.5 233.3 L694.6 233.3 L695.8 233.2 L697.0 233.2 L698.1 233.2 L699.3 233.2 L700.5 233.2 L701.6 233.2 L702.8 233.2 L704.0 233.2 L705.1 233.1 L706.3 233.2 L707.5 233.3 L708.7 233.3 L709.8 233.2 L711.0 233.2 L712.2 233.2 L713.3 233.2 L714.5 233.2 L715.7 233.3 L716.8 233.3 L718.0 233.3 L719.2 233.2 L720.3 233.3 L721.5 233.2 L722.7 233.2 L723.8 233.2 L725.0 233.2 L726.2 233.2 L727.4 233.2 L728.5 233.2 L729.7 233.1 L730.9 233.1 L732.0 233.2 L733.2 233.3 L734.4 233.3 L735.5 233.3 L736.7 233.2 L737.9 233.2 L739.0 233.2 L740.2 233.2 L741.4 233.2 L742.5 233.1 L743.7 233.2 L744.9 233.2 L746.0 233.2 L747.2 233.2 L748.4 233.2 L749.6 233.2 L750.7 233.2 L751.9 233.2 L753.1 233.2 L754.2 233.2 L755.4 233.2 L756.6 233.2 L757.7 233.2 L758.9 233.3 L760.1 233.2 L761.2 233.2 L762.4 233.1 L763.6 233.2 L764.7 233.2 L765.9 233.2 L767.1 233.2 L768.2 233.2 L769.4 233.2 L770.6 233.2 L771.8 233.2 L772.9 233.2 L774.1 233.2 L775.3 233.2 L776.4 233.2 L777.6 233.2 L778.8 233.2 L779.9 233.2 L781.1 233.1 L782.3 233.2 L783.4 233.2 L784.6 233.2 L785.8 233.2 L786.9 233.1 L788.1 233.1 L789.3 233.1 L790.5 233.2 L791.6 233.2 L792.8 233.2 L794.0 233.2 L795.1 233.2 L796.3 233.2 L797.5 233.2 L798.6 233.2 L799.8 233.1 L801.0 233.2 L802.1 233.2 L803.3 233.3 L804.5 233.2 L805.6 233.2 L806.8 233.2 L808.0 233.2 L809.1 233.2 L810.3 233.2 L811.5 233.2 L812.7 233.2 L813.8 233.2 L815.0 233.2 L816.2 233.2 L817.3 233.2 L818.5 233.3 L819.7 233.3 L820.8 233.2 L822.0 233.3 L823.2 233.3 L824.3 233.3 L825.5 233.2 L826.7 233.2 L827.8 233.1 L829.0 233.1 L830.2 233.2 L831.3 233.2 L832.5 233.2 L833.7 233.1 L834.9 233.1 L836.0 233.1 L837.2 233.2 L838.4 233.2 L839.5 233.3 L840.7 233.3 L841.9 233.3 L843.0 233.2 L844.2 233.1 L845.4 233.1 L846.5 233.1 L847.7 233.2 L848.9 233.2 L850.0 233.3 L851.2 233.2 L852.4 233.2 L853.6 233.3 L854.7 233.2 L855.9 233.2 L857.1 233.1 L858.2 233.2 L859.4 233.2 L860.6 233.3 L861.7 233.2 L862.9 233.2 L864.1 233.2 L865.2 233.2 L866.4 233.2 L867.6 233.2 L868.7 233.2 L869.9 233.2 L871.1 233.2 L872.2 233.2 L873.4 233.2 L874.6 233.2 L875.8 233.2 L876.9 233.2 L878.1 233.2 L879.3 233.2 L880.4 233.2 L881.6 233.2 L882.8 233.2 L883.9 233.2 L885.1 233.2 L886.3 233.2 L887.4 233.1 L888.6 233.1 L889.8 233.1 L890.9 233.1 L892.1 233.2 L893.3 233.2 L894.4 233.2 L895.6 233.2 L896.8 233.2 L898.0 233.2 L899.1 233.2 L900.3 233.2 L901.5 233.2 L902.6 233.2 L903.8 233.2 L905.0 233.2 L906.1 233.2 L907.3 233.2 L908.5 233.2 L909.6 233.2 L910.8 233.3 L912.0 233.3 L913.1 233.3 L914.3 233.2 L915.5 233.2 L916.7 233.1 L917.8 233.1 L919.0 233.2 L920.2 233.2 L921.3 233.2 L922.5 233.2 L923.7 233.2 L924.8 233.2 L926.0 233.2 L927.2 233.1 L928.3 233.2 L929.5 233.2 L930.7 233.3 L931.8 233.3 L933.0 233.3 L934.2 233.3 L935.3 233.3 L936.5 233.3 L937.7 233.3 L938.9 233.3 L940.0 233.2 L941.2 233.2 L942.4 233.2 L943.5 233.2 L944.7 233.2 L945.9 233.1 L947.0 233.1 L948.2 233.1 L949.4 233.1 L950.5 233.1 L951.7 233.2 L952.9 233.2 L954.0 233.2 L955.2 233.2 L956.4 233.3 L957.5 233.3 L958.7 233.3 L959.9 233.2 L961.1 233.2 L962.2 233.3 L963.4 233.2 L964.6 233.2 L965.7 233.2 L966.9 233.1 L968.1 233.1 L969.2 233.2 L970.4 233.1 L971.6 233.1 L972.7 233.1 L973.9 233.2 L975.1 233.2 L976.2 233.2 L977.4 233.1 L978.6 233.1 L979.8 233.2 L980.9 233.2 L982.1 233.2 L983.3 233.2 L984.4 233.2 L985.6 233.2 L986.8 233.2 L987.9 233.2 L989.1 233.2 L990.3 233.2 L991.4 233.2 L992.6 233.2 L993.8 233.2 L994.9 233.2 L996.1 233.3 L997.3 233.3 L998.4 233.3 L999.6 233.2 L1000.8 233.3 L1002.0 233.2 L1003.1 233.2 L1004.3 233.2 L1005.5 233.2 L1006.6 233.2 L1007.8 233.2 L1009.0 233.1 L1010.1 233.2 L1011.3 233.2 L1012.5 233.2 L1013.6 233.2 L1014.8 233.2 L1016.0 233.3 L1017.1 233.2 L1018.3 233.2 L1019.5 233.1 L1020.6 233.1 L1021.8 233.2 L1023.0 233.1 L1024.2 233.1 L1025.3 233.2 L1026.5 233.2 L1027.7 233.2 L1028.8 233.2 L1030.0 233.3 L1031.2 233.3 L1032.3 233.3 L1033.5 233.2 L1034.7 233.2 L1035.8 233.2 L1037.0 233.2 L1038.2 233.2 L1039.3 233.2 L1040.5 233.2 L1041.7 233.2 L1042.9 233.2 L1044.0 233.2 L1045.2 233.2 L1046.4 233.1 L1047.5 233.1 L1048.7 233.1 L1049.9 233.2 L1051.0 233.2 L1052.2 233.2 L1053.4 233.2 L1054.5 233.2 L1055.7 233.2 L1056.9 233.2 L1058.0 233.2 L1059.2 233.2 L1060.4 233.2 L1061.5 233.2 L1062.7 233.2 L1063.9 233.2 L1065.1 233.1 L1066.2 233.2 L1067.4 233.2 L1068.6 233.2 L1069.7 233.2 L1070.9 233.2 L1072.1 233.2 L1073.2 233.2 L1074.4 233.2 L1075.6 233.2 L1076.7 233.2 L1077.9 233.2 L1079.1 233.2 L1080.2 233.2 L1081.4 233.2 L1082.6 233.3 L1083.7 233.3 L1084.9 233.3 L1086.1 233.2 L1087.3 233.3 L1088.4 233.2 L1089.6 233.2 L1090.8 233.3 L1091.9 233.3 L1093.1 233.2 L1094.3 233.2 L1095.4 233.2 L1096.6 233.2 L1097.8 233.1 L1098.9 233.1 L1100.1 233.2 L1101.3 233.3 L1102.4 233.3 L1103.6 233.3 L1104.8 233.3 L1106.0 233.3 L1107.1 233.2 L1108.3 233.2 L1109.5 233.2 L1110.6 233.2 L1111.8 233.2 L1113.0 233.2 L1114.1 233.2 L1115.3 233.2 L1116.5 233.2 L1117.6 233.2 L1118.8 233.2 L1120.0 233.1 L1121.1 233.2 L1122.3 233.2 L1123.5 233.2 L1124.6 233.2 L1125.8 233.2 L1127.0 233.2 L1128.2 233.2 L1129.3 233.2 L1130.5 233.2 L1131.7 233.2 L1132.8 233.2 L1134.0 233.2 L1135.2 233.2 L1136.3 233.3 L1137.5 233.2 L1138.7 233.2 L1139.8 233.2 L1141.0 233.2 L1142.2 233.2 L1143.3 233.2 L1144.5 233.2 L1145.7 233.2 L1146.8 233.2 L1148.0 233.2 L1149.2 233.2 L1150.4 233.2 L1151.5 233.2 L1152.7 233.2 L1153.9 233.2 L1155.0 233.2 L1156.2 233.2 L1157.4 233.2 L1158.5 233.2 L1159.7 233.1 L1160.9 233.2 L1162.0 233.3 L1163.2 233.3 L1164.4 233.2 L1165.5 233.2 L1166.7 233.2 L1167.9 233.2 L1169.1 233.2 L1170.2 233.2 L1171.4 233.3 L1172.6 233.2 L1173.7 233.3 L1174.9 233.3 L1176.1 233.3 L1177.2 233.2 L1178.4 233.2 L1179.6 233.2 L1180.7 233.2 L1181.9 233.3 L1183.1 233.3 L1184.2 233.2 L1185.4 233.2 L1186.6 233.2 L1187.7 233.2 L1188.9 233.3 L1190.1 233.2 L1191.3 233.3 L1192.4 233.3 L1193.6 233.3 L1194.8 233.2 L1195.9 233.2 L1197.1 233.2 L1198.3 233.3 L1199.4 233.2 L1200.6 233.2 L1201.8 233.2 L1202.9 233.3 L1204.1 233.2 L1205.3 233.2 L1206.4 233.1 L1207.6 233.2 L1208.8 233.2 L1209.9 233.2 L1211.1 233.2 L1212.3 233.3 L1213.5 233.3 L1214.6 233.3 L1215.8 233.2 L1217.0 233.2 L1218.1 233.1 L1219.3 233.1 L1220.5 233.1 L1221.6 233.1 L1222.8 233.1 L1224.0 233.2 L1225.1 233.1 L1226.3 233.1 L1227.5 233.1 L1228.6 233.2 L1229.8 233.2 L1231.0 233.3 L1232.2 233.2 L1233.3 233.2 L1234.5 233.2 L1235.7 233.2 L1236.8 233.3 L1238.0 233.3 L1239.2 233.2 L1240.3 233.2 L1241.5 233.2" stroke="#ffa07a" stroke-width="2" fill="none" stroke-linejoin="bevel"/>
<path d="M191.0 232.4 L192.2 232.4 L193.3 232.4 L194.5 232.4 L195.7 232.3 L196.8 232.3 L198.0 232.3 L199.2 232.3 L200.3 232.3 L201.5 232.3 L202.7 232.4 L203.9 232.3 L205.0 232.3 L206.2 232.3 L207.4 232.3 L208.5 232.3 L209.7 232.3 L210.9 232.3 L212.0 232.3 L213.2 232.3 L214.4 232.3 L215.5 232.3 L216.7 232.3 L217.9 232.3 L219.0 232.3 L220.2 232.3 L221.4 232.3 L222.6 232.3 L223.7 232.3 L224.9 232.3 L226.1 232.3 L227.2 232.3 L228.4 232.3 L229.6 232.3 L230.7 232.3 L231.9 232.3 L233.1 232.3 L234.2 232.4 L235.4 232.4 L236.6 232.3 L237.7 232.3 L238.9 232.3 L240.1 232.3 L241.2 232.3 L242.4 232.3 L243.6 232.3 L244.8 232.3 L245.9 232.3 L247.1 232.3 L248.3 232.3 L249.4 232.3 L250.6 232.3 L251.8 232.4 L252.9 232.4 L254.1 232.4 L255.3 232.4 L256.4 232.4 L257.6 232.4 L258.8 232.3 L259.9 232.4 L261.1 232.4 L262.3 232.4 L263.4 232.3 L264.6 232.3 L265.8 232.3 L267.0 232.4 L268.1 232.4 L269.3 232.3 L270.5 232.3 L271.6 232.3 L272.8 232.4 L274.0 232.3 L275.1 232.3 L276.3 232.3 L277.5 232.3 L278.6 232.3 L279.8 232.3 L281.0 232.3 L282.1 232.3 L283.3 232.3 L284.5 232.3 L285.7 232.3 L286.8 232.3 L288.0 232.4 L289.2 232.4 L290.3 232.4 L291.5 232.3 L292.7 232.4 L293.8 232.3 L295.0 232.4 L296.2 232.4 L297.3 232.3 L298.5 232.3 L299.7 232.3 L300.8 232.3 L302.0 232.3 L303.2 232.3 L304.3 232.4 L305.5 232.3 L306.7 232.3 L307.9 232.3 L309.0 232.3 L310.2 232.4 L311.4 232.4 L312.5 232.4 L313.7 232.4 L314.9 232.4 L316.0 232.3 L317.2 232.3 L318.4 232.3 L319.5 232.3 L320.7 232.3 L321.9 232.3 L323.0 232.3 L324.2 232.3 L325.4 232.3 L326.5 232.3 L327.7 232.3 L328.9 232.3 L330.1 232.3 L331.2 232.3 L332.4 232.3 L333.6 232.3 L334.7 232.2 L335.9 232.3 L337.1 232.3 L338.2 232.3 L339.4 232.4 L340.6 232.3 L341.7 232.3 L342.9 232.3 L344.1 232.3 L345.2 232.3 L346.4 232.4 L347.6 232.4 L348.8 232.4 L349.9 232.3 L351.1 232.3 L352.3 232.3 L353.4 232.4 L354.6 232.4 L355.8 232.4 L356.9 232.3 L358.1 232.3 L359.3 232.3 L360.4 232.4 L361.6 232.3 L362.8 232.3 L363.9 232.3 L365.1 232.3 L366.3 232.4 L367.4 232.4 L368.6 232.4 L369.8 232.3 L371.0 232.3 L372.1 232.3 L373.3 232.3 L374.5 232.3 L375.6 232.3 L376.8 232.4 L378.0 232.4 L379.1 232.3 L380.3 232.3 L381.5 232.3 L382.6 232.3 L383.8 232.3 L385.0 232.3 L386.1 232.4 L387.3 232.4 L388.5 232.4 L389.6 232.4 L390.8 232.4 L392.0 232.4 L393.2 232.4 L394.3 232.3 L395.5 232.3 L396.7 232.3 L397.8 232.3 L399.0 232.3 L400.2 232.3 L401.3 232.3 L402.5 232.3 L403.7 232.3 L404.8 232.4 L406.0 232.4 L407.2 232.4 L408.3 232.3 L409.5 232.3 L410.7 232.3 L411.9 232.3 L413.0 232.4 L414.2 232.3 L415.4 232.3 L416.5 232.3 L417.7 232.4 L418.9 232.4 L420.0 232.4 L421.2 232.4 L422.4 232.4 L423.5 232.4 L424.7 232.4 L425.9 232.4 L427.0 232.4 L428.2 232.4 L429.4 232.4 L430.5 232.3 L431.7 232.3 L432.9 232.4 L434.1 232.4 L435.2 232.4 L436.4 232.3 L437.6 232.3 L438.7 232.3 L439.9 232.3 L441.1 232.4 L442.2 232.4 L443.4 232.4 L444.6 232.4 L445.7 232.4 L446.9 232.4 L448.1 232.4 L449.2 232.4 L450.4 232.4 L451.6 232.4 L452.7 232.4 L453.9 232.4 L455.1 232.3 L456.3 232.3 L457.4 232.3 L458.6 232.3 L459.8 232.4 L460.9 232.4 L462.1 232.3 L463.3 232.3 L464.4 232.3 L465.6 232.3 L466.8 232.3 L467.9 232.4 L469.1 232.4 L470.3 232.3 L471.4 232.4 L472.6 232.4 L473.8 232.4 L475.0 232.4 L476.1 232.4 L477.3 232.5 L478.5 232.4 L479.6 232.4 L480.8 232.4 L482.0 232.4 L483.1 232.4 L484.3 232.3 L485.5 232.3 L486.6 232.4 L487.8 232.4 L489.0 232.4 L490.1 232.4 L491.3 232.4 L492.5 232.4 L493.6 232.4 L494.8 232.4 L496.0 232.4 L497.2 232.4 L498.3 232.3 L499.5 232.3 L500.7 232.3 L501.8 232.4 L503.0 232.4 L504.2 232.4 L505.3 232.4 L506.5 232.4 L507.7 232.4 L508.8 232.4 L510.0 232.3 L511.2 232.3 L512.3 232.4 L513.5 232.3 L514.7 232.4 L515.8 232.3 L517.0 232.4 L518.2 232.4 L519.4 232.4 L520.5 232.4 L521.7 232.4 L522.9 232.3 L524.0 232.3 L525.2 232.3 L526.4 232.4 L527.5 232.4 L528.7 232.4 L529.9 232.4 L531.0 232.4 L532.2 232.4 L533.4 232.4 L534.5 232.4 L535.7 232.5 L536.9 232.4 L538.1 232.4 L539.2 232.4 L540.4 232.4 L541.6 232.4 L542.7 232.4 L543.9 232.4 L545.1 232.3 L546.2 232.3 L547.4 232.3 L548.6 232.4 L549.7 232.4 L550.9 232.4 L552.1 232.4 L553.2 232.4 L554.4 232.4 L555.6 232.4 L556.7 232.4 L557.9 232.4 L559.1 232.4 L560.3 232.4 L561.4 232.3 L562.6 232.3 L563.8 232.3 L564.9 232.4 L566.1 232.4 L567.3 232.4 L568.4 232.4 L569.6 232.4 L570.8 232.4 L571.9 232.4 L573.1 232.4 L574.3 232.4 L575.4 232.4 L576.6 232.4 L577.8 232.5 L578.9 232.5 L580.1 232.5 L581.3 232.5 L582.5 232.4 L583.6 232.4 L584.8 232.4 L586.0 232.4 L587.1 232.4 L588.3 232.4 L589.5 232.4 L590.6 232.4 L591.8 232.4 L593.0 232.4 L594.1 232.4 L595.3 232.4 L596.5 232.4 L597.6 232.4 L598.8 232.3 L600.0 232.3 L601.2 232.4 L602.3 232.4 L603.5 232.4 L604.7 232.4 L605.8 232.4 L607.0 232.4 L608.2 232.4 L609.3 232.0 L610.5 230.6 L611.7 233.1 L612.8 232.9 L614.0 232.4 L615.2 232.2 L616.3 231.9 L617.5 231.7 L618.7 231.6 L619.8 231.5 L621.0 231.2 L622.2 230.8 L623.4 230.5 L624.5 230.4 L625.7 230.9 L626.9 232.1 L628.0 233.6 L629.2 231.5 L630.4 230.1 L631.5 230.3 L632.7 230.5 L633.9 230.6 L635.0 230.7 L636.2 230.8 L637.4 231.2 L638.5 231.5 L639.7 231.8 L640.9 231.9 L642.0 231.9 L643.2 231.9 L644.4 231.9 L645.6 231.9 L646.7 231.9 L647.9 231.9 L649.1 232.0 L650.2 232.0 L651.4 232.0 L652.6 232.0 L653.7 232.0 L654.9 232.0 L656.1 231.9 L657.2 231.9 L658.4 231.9 L659.6 231.9 L660.7 231.9 L661.9 231.9 L663.1 231.9 L664.3 231.8 L665.4 231.8 L666.6 231.8 L667.8 231.8 L668.9 231.7 L670.1 231.5 L671.3 231.2 L672.4 230.9 L673.6 230.4 L674.8 229.9 L675.9 230.3 L677.1 230.8 L678.3 230.8 L679.4 230.9 L680.6 231.0 L681.8 231.2 L682.9 231.6 L684.1 231.8 L685.3 231.8 L686.5 231.8 L687.6 231.9 L688.8 231.8 L690.0 231.8 L691.1 231.8 L692.3 232.0 L693.5 232.1 L694.6 232.3 L695.8 232.5 L697.0 232.8 L698.1 232.6 L699.3 232.3 L700.5 232.2 L701.6 232.2 L702.8 232.2 L704.0 232.2 L705.1 232.2 L706.3 232.2 L707.5 232.2 L708.7 232.2 L709.8 232.2 L711.0 232.2 L712.2 232.1 L713.3 232.1 L714.5 232.1 L715.7 232.1 L716.8 232.1 L718.0 232.1 L719.2 232.2 L720.3 232.3 L721.5 232.2 L722.7 232.2 L723.8 232.2 L725.0 232.2 L726.2 232.2 L727.4 232.2 L728.5 232.2 L729.7 232.2 L730.9 232.1 L732.0 232.2 L733.2 232.2 L734.4 232.2 L735.5 232.2 L736.7 232.2 L737.9 232.2 L739.0 232.2 L740.2 232.2 L741.4 232.2 L742.5 232.2 L743.7 232.2 L744.9 232.2 L746.0 232.2 L747.2 232.2 L748.4 232.1 L749.6 232.2 L750.7 232.2 L751.9 232.2 L753.1 232.2 L754.2 232.2 L755.4 232.2 L756.6 232.2 L757.7 232.3 L758.9 232.2 L760.1 232.2 L761.2 232.2 L762.4 232.2 L763.6 232.1 L764.7 232.2 L765.9 232.2 L767.1 232.3 L768.2 232.2 L769.4 232.2 L770.6 232.2 L771.8 232.3 L772.9 232.3 L774.1 232.2 L775.3 232.2 L776.4 232.1 L777.6 232.1 L778.8 232.1 L779.9 232.1 L781.1 232.2 L782.3 232.2 L783.4 232.2 L784.6 232.3 L785.8 232.3 L786.9 232.2 L788.1 232.2 L789.3 232.2 L790.5 232.2 L791.6 232.2 L792.8 232.2 L794.0 232.1 L795.1 232.2 L796.3 232.2 L797.5 232.2 L798.6 232.2 L799.8 232.2 L801.0 232.2 L802.1 232.1 L803.3 232.2 L804.5 232.3 L805.6 232.3 L806.8 232.2 L808.0 232.2 L809.1 232.2 L810.3 232.2 L811.5 232.2 L812.7 232.2 L813.8 232.2 L815.0 232.2 L816.2 232.2 L817.3 232.1 L818.5 232.1 L819.7 232.1 L820.8 232.2 L822.0 232.1 L823.2 232.2 L824.3 232.2 L825.5 232.2 L826.7 232.2 L827.8 232.1 L829.0 232.2 L830.2 232.2 L831.3 232.3 L832.5 232.2 L833.7 232.2 L834.9 232.2 L836.0 232.2 L837.2 232.2 L838.4 232.2 L839.5 232.2 L840.7 232.2 L841.9 232.3 L843.0 232.2 L844.2 232.2 L845.4 232.2 L846.5 232.2 L847.7 232.2 L848.9 232.2 L850.0 232.2 L851.2 232.2 L852.4 232.2 L853.6 232.3 L854.7 232.2 L855.9 232.2 L857.1 232.2 L858.2 232.1 L859.4 232.2 L860.6 232.2 L861.7 232.2 L862.9 232.2 L864.1 232.2 L865.2 232.2 L866.4 232.2 L867.6 232.2 L868.7 232.2 L869.9 232.2 L871.1 232.2 L872.2 232.2 L873.4 232.2 L874.6 232.2 L875.8 232.2 L876.9 232.3 L878.1 232.3 L879.3 232.3 L880.4 232.2 L881.6 232.2 L882.8 232.2 L883.9 232.1 L885.1 232.2 L886.3 232.2 L887.4 232.2 L888.6 232.2 L889.8 232.2 L890.9 232.2 L892.1 232.2 L893.3 232.2 L894.4 232.3 L895.6 232.3 L896.8 232.3 L898.0 232.2 L899.1 232.2 L900.3 232.3 L901.5 232.2 L902.6 232.3 L903.8 232.2 L905.0 232.3 L906.1 232.3 L907.3 232.2 L908.5 232.2 L909.6 232.2 L910.8 232.2 L912.0 232.2 L913.1 232.2 L914.3 232.2 L915.5 232.2 L916.7 232.2 L917.8 232.2 L919.0 232.2 L920.2 232.2 L921.3 232.3 L922.5 232.2 L923.7 232.2 L924.8 232.2 L926.0 232.2 L927.2 232.2 L928.3 232.2 L929.5 232.2 L930.7 232.2 L931.8 232.2 L933.0 232.2 L934.2 232.2 L935.3 232.2 L936.5 232.2 L937.7 232.2 L938.9 232.2 L940.0 232.2 L941.2 232.2 L942.4 232.2 L943.5 232.2 L944.7 232.2 L945.9 232.2 L947.0 232.2 L948.2 232.2 L949.4 232.2 L950.5 232.2 L951.7 232.2 L952.9 232.1 L954.0 232.1 L955.2 232.2 L956.4 232.2 L957.5 232.2 L958.7 232.2 L959.9 232.2 L961.1 232.2 L962.2 232.3 L963.4 232.2 L964.6 232.2 L965.7 232.2 L966.9 232.2 L968.1 232.2 L969.2 232.2 L970.4 232.2 L971.6 232.2 L972.7 232.2 L973.9 232.2 L975.1 232.2 L976.2 232.2 L977.4 232.2 L978.6 232.2 L979.8 232.2 L980.9 232.2 L982.1 232.2 L983.3 232.2 L984.4 232.2 L985.6 232.1 L986.8 232.2 L987.9 232.2 L989.1 232.2 L990.3 232.2 L991.4 232.2 L992.6 232.2 L993.8 232.3 L994.9 232.3 L996.1 232.3 L997.3 232.2 L998.4 232.2 L999.6 232.2 L1000.8 232.2 L1002.0 232.2 L1003.1 232.2 L1004.3 232.2 L1005.5 232.2 L1006.6 232.2 L1007.8 232.2 L1009.0 232.1 L1010.1 232.2 L1011.3 232.2 L1012.5 232.2 L1013.6 232.2 L1014.8 232.2 L1016.0 232.2 L1017.1 232.2 L1018.3 232.2 L1019.5 232.2 L1020.6 232.2 L1021.8 232.2 L1023.0 232.2 L1024.2 232.2 L1025.3 232.2 L1026.5 232.2 L1027.7 232.2 L1028.8 232.1 L1030.0 232.1 L1031.2 232.1 L1032.3 232.1 L1033.5 232.2 L1034.7 232.2 L1035.8 232.2 L1037.0 232.2 L1038.2 232.2 L1039.3 232.2 L1040.5 232.2 L1041.7 232.2 L1042.9 232.2 L1044.0 232.2 L1045.2 232.2 L1046.4 232.2 L1047.5 232.2 L1048.7 232.2 L1049.9 232.2 L1051.0 232.2 L1052.2 232.2 L1053.4 232.2 L1054.5 232.2 L1055.7 232.2 L1056.9 232.2 L1058.0 232.2 L1059.2 232.2 L1060.4 232.2 L1061.5 232.2 L1062.7 232.2 L1063.9 232.2 L1065.1 232.2 L1066.2 232.3 L1067.4 232.2 L1068.6 232.3 L1069.7 232.2 L1070.9 232.2 L1072.1 232.2 L1073.2 232.2 L1074.4 232.2 L1075.6 232.2 L1076.7 232.2 L1077.9 232.2 L1079.1 232.2 L1080.2 232.2 L1081.4 232.2 L1082.6 232.2 L1083.7 232.2 L1084.9 232.2 L1086.1 232.2 L1087.3 232.2 L1088.4 232.2 L1089.6 232.2 L1090.8 232.2 L1091.9 232.2 L1093.1 232.2 L1094.3 232.2 L1095.4 232.2 L1096.6 232.2 L1097.8 232.2 L1098.9 232.2 L1100.1 232.2 L1101.3 232.2 L1102.4 232.2 L1103.6 232.1 L1104.8 232.1 L1106.0 232.2 L1107.1 232.2 L1108.3 232.2 L1109.5 232.1 L1110.6 232.2 L1111.8 232.1 L1113.0 232.2 L1114.1 232.2 L1115.3 232.2 L1116.5 232.1 L1117.6 232.1 L1118.8 232.2 L1120.0 232.2 L1121.1 232.2 L1122.3 232.2 L1123.5 232.2 L1124.6 232.1 L1125.8 232.2 L1127.0 232.1 L1128.2 232.2 L1129.3 232.2 L1130.5 232.2 L1131.7 232.2 L1132.8 232.2 L1134.0 232.2 L1135.2 232.2 L1136.3 232.2 L1137.5 232.2 L1138.7 232.3 L1139.8 232.2 L1141.0 232.3 L1142.2 232.2 L1143.3 232.2 L1144.5 232.2 L1145.7 232.2 L1146.8 232.2 L1148.0 232.2 L1149.2 232.2 L1150.4 232.2 L1151.5 232.2 L1152.7 232.2 L1153.9 232.2 L1155.0 232.2 L1156.2 232.2 L1157.4 232.2 L1158.5 232.1 L1159.7 232.2 L1160.9 232.2 L1162.0 232.2 L1163.2 232.2 L1164.4 232.2 L1165.5 232.2 L1166.7 232.2 L1167.9 232.2 L1169.1 232.2 L1170.2 232.2 L1171.4 232.2 L1172.6 232.2 L1173.7 232.2 L1174.9 232.2 L1176.1 232.2 L1177.2 232.2 L1178.4 232.2 L1179.6 232.2 L1180.7 232.2 L1181.9 232.2 L1183.1 232.3 L1184.2 232.3 L1185.4 232.2 L1186.6 232.2 L1187.7 232.2 L1188.9 232.1 L1190.1 232.2 L1191.3 232.2 L1192.4 232.3 L1193.6 232.2 L1194.8 232.2 L1195.9 232.2 L1197.1 232.2 L1198.3 232.3 L1199.4 232.2 L1200.6 232.2 L1201.8 232.2 L1202.9 232.2 L1204.1 232.2 L1205.3 232.2 L1206.4 232.2 L1207.6 232.2 L1208.8 232.2 L1209.9 232.2 L1211.1 232.2 L1212.3 232.2 L1213.5 232.2 L1214.6 232.2 L1215.8 232.2 L1217.0 232.2 L1218.1 232.2 L1219.3 232.2 L1220.5 232.2 L1221.6 232.2 L1222.8 232.2 L1224.0 232.2 L1225.1 232.2 L1226.3 232.2 L1227.5 232.2 L1228.6 232.2 L1229.8 232.2 L1231.0 232.2 L1232.2 232.1 L1233.3 232.1 L1234.5 232.1 L1235.7 232.2 L1236.8 232.2 L1238.0 232.2 L1239.2 232.1 L1240.3 232.2 L1241.5 232.2" stroke="#ff0000" stroke-width="2" fill="none" stroke-linejoin="bevel"/>
<path d="M191.0 202.4 L192.2 202.4 L193.3 202.4 L194.5 202.4 L195.7 202.4 L196.8 202.4 L198.0 202.4 L199.2 202.4 L200.3 202.4 L201.5 202.4 L202.7 202.4 L203.9 202.4 L205.0 202.4 L206.2 202.4 L207.4 202.4 L208.5 202.4 L209.7 202.4 L210.9 202.3 L212.0 202.3 L213.2 202.3 L214.4 202.3 L215.5 202.3 L216.7 202.4 L217.9 202.4 L219.0 202.4 L220.2 202.3 L221.4 202.3 L222.6 202.3 L223.7 202.4 L224.9 202.4 L226.1 202.4 L227.2 202.3 L228.4 202.4 L229.6 202.4 L230.7 202.4 L231.9 202.4 L233.1 202.4 L234.2 202.4 L235.4 202.4 L236.6 202.4 L237.7 202.4 L238.9 202.4 L240.1 202.4 L241.2 202.4 L242.4 202.4 L243.6 202.4 L244.8 202.4 L245.9 202.4 L247.1 202.4 L248.3 202.4 L249.4 202.4 L250.6 202.4 L251.8 202.4 L252.9 202.4 L254.1 202.4 L255.3 202.4 L256.4 202.4 L257.6 202.4 L258.8 202.4 L259.9 202.4 L261.1 202.4 L262.3 202.4 L263.4 202.4 L264.6 202.4 L265.8 202.4 L267.0 202.4 L268.1 202.4 L269.3 202.4 L270.5 202.4 L271.6 202.4 L272.8 202.4 L274.0 202.4 L275.1 202.3 L276.3 202.4 L277.5 202.4 L278.6 202.4 L279.8 202.4 L281.0 202.4 L282.1 202.4 L283.3 202.4 L284.5 202.4 L285.7 202.4 L286.8 202.4 L288.0 202.4 L289.2 202.4 L290.3 202.4 L291.5 202.4 L292.7 202.4 L293.8 202.4 L295.0 202.4 L296.2 202.4 L297.3 202.4 L298.5 202.4 L299.7 202.4 L300.8 202.4 L302.0 202.4 L303.2 202.4 L304.3 202.3 L305.5 202.3 L306.7 202.3 L307.9 202.3 L309.0 202.4 L310.2 202.4 L311.4 202.4 L312.5 202.4 L313.7 202.4 L314.9 202.4 L316.0 202.4 L317.2 202.4 L318.4 202.4 L319.5 202.4 L320.7 202.4 L321.9 202.4 L323.0 202.4 L324.2 202.4 L325.4 202.4 L326.5 202.4 L327.7 202.4 L328.9 202.4 L330.1 202.4 L331.2 202.4 L332.4 202.4 L333.6 202.3 L334.7 202.3 L335.9 202.3 L337.1 202.3 L338.2 202.4 L339.4 202.3 L340.6 202.4 L341.7 202.4 L342.9 202.4 L344.1 202.4 L345.2 202.4 L346.4 202.4 L347.6 202.4 L348.8 202.5 L349.9 202.4 L351.1 202.4 L352.3 202.4 L353.4 202.4 L354.6 202.4 L355.8 202.4 L356.9 202.4 L358.1 202.4 L359.3 202.3 L360.4 202.4 L361.6 202.4 L362.8 202.4 L363.9 202.4 L365.1 202.4 L366.3 202.4 L367.4 202.4 L368.6 202.4 L369.8 202.4 L371.0 202.4 L372.1 202.4 L373.3 202.4 L374.5 202.4 L375.6 202.4 L376.8 202.4 L378.0 202.4 L379.1 202.4 L380.3 202.4 L381.5 202.4 L382.6 202.4 L383.8 202.3 L385.0 202.4 L386.1 202.4 L387.3 202.4 L388.5 202.4 L389.6 202.4 L390.8 202.4 L392.0 202.4 L393.2 202.4 L394.3 202.4 L395.5 202.4 L396.7 202.4 L397.8 202.4 L399.0 202.4 L400.2 202.4 L401.3 202.4 L402.5 202.4 L403.7 202.4 L404.8 202.4 L406.0 202.4 L407.2 202.4 L408.3 202.4 L409.5 202.4 L410.7 202.4 L411.9 202.4 L413.0 202.4 L414.2 202.4 L415.4 202.4 L416.5 202.4 L417.7 202.4 L418.9 202.4 L420.0 202.5 L421.2 202.4 L422.4 202.4 L423.5 202.4 L424.7 202.4 L425.9 202.4 L427.0 202.4 L428.2 202.5 L429.4 202.5 L430.5 202.4 L431.7 202.4 L432.9 202.4 L434.1 202.4 L435.2 202.4 L436.4 202.4 L437.6 202.4 L438.7 202.3 L439.9 202.3 L441.1 202.4 L442.2 202.4 L443.4 202.4 L444.6 202.4 L445.7 202.4 L446.9 202.3 L448.1 202.3 L449.2 202.3 L450.4 202.4 L451.6 202.4 L452.7 202.4 L453.9 202.4 L455.1 202.4 L456.3 202.3 L457.4 202.3 L458.6 202.4 L459.8 202.4 L460.9 202.4 L462.1 202.4 L463.3 202.5 L464.4 202.4 L465.6 202.4 L466.8 202.4 L467.9 202.4 L469.1 202.4 L470.3 202.4 L471.4 202.4 L472.6 202.4 L473.8 202.4 L475.0 202.4 L476.1 202.4 L477.3 202.4 L478.5 202.4 L479.6 202.3 L480.8 202.3 L482.0 202.3 L483.1 202.3 L484.3 202.4 L485.5 202.4 L486.6 202.4 L487.8 202.4 L489.0 202.4 L490.1 202.4 L491.3 202.4 L492.5 202.4 L493.6 202.4 L494.8 202.4 L496.0 202.4 L497.2 202.4 L498.3 202.4 L499.5 202.4 L500.7 202.4 L501.8 202.4 L503.0 202.4 L504.2 202.4 L505.3 202.4 L506.5 202.4 L507.7 202.4 L508.8 202.4 L510.0 202.5 L511.2 202.4 L512.3 202.4 L513.5 202.4 L514.7 202.4 L515.8 202.4 L517.0 202.4 L518.2 202.4 L519.4 202.4 L520.5 202.4 L521.7 202.4 L522.9 202.4 L524.0 202.4 L525.2 202.4 L526.4 202.4 L527.5 202.4 L528.7 202.3 L529.9 202.4 L531.0 202.4 L532.2 202.5 L533.4 202.5 L534.5 202.4 L535.7 202.4 L536.9 202.4 L538.1 202.4 L539.2 202.4 L540.4 202.4 L541.6 202.4 L542.7 202.4 L543.9 202.4 L545.1 202.4 L546.2 202.4 L547.4 202.4 L548.6 202.4 L549.7 202.4 L550.9 202.4 L552.1 202.4 L553.2 202.4 L554.4 202.4 L555.6 202.4 L556.7 202.4 L557.9 202.4 L559.1 202.4 L560.3 202.4 L561.4 202.3 L562.6 202.4 L563.8 202.4 L564.9 202.4 L566.1 202.4 L567.3 202.4 L568.4 202.4 L569.6 202.4 L570.8 202.4 L571.9 202.4 L573.1 202.4 L574.3 202.4 L575.4 202.4 L576.6 202.4 L577.8 202.4 L578.9 202.4 L580.1 202.4 L581.3 202.4 L582.5 202.4 L583.6 202.4 L584.8 202.4 L586.0 202.4 L587.1 202.5 L588.3 202.4 L589.5 202.5 L590.6 202.4 L591.8 202.4 L593.0 202.4 L594.1 202.4 L595.3 202.4 L596.5 202.4 L597.6 202.4 L598.8 202.4 L600.0 202.4 L601.2 202.4 L602.3 202.4 L603.5 202.4 L604.7 202.4 L605.8 202.4 L607.0 202.4 L608.2 202.5 L609.3 203.1 L610.5 203.2 L611.7 202.5 L612.8 202.4 L614.0 202.7 L615.2 202.7 L616.3 202.5 L617.5 202.2 L618.7 202.3 L619.8 202.6 L621.0 202.9 L622.2 202.7 L623.4 202.4 L624.5 202.4 L625.7 202.6 L626.9 202.9 L628.0 203.1 L629.2 203.0 L630.4 202.7 L631.5 202.4 L632.7 202.4 L633.9 202.4 L635.0 202.4 L636.2 202.4 L637.4 202.3 L638.5 202.4 L639.7 202.4 L640.9 202.4 L642.0 202.4 L643.2 202.4 L644.4 202.4 L645.6 202.4 L646.7 202.3 L647.9 202.3 L649.1 202.3 L650.2 202.3 L651.4 202.3 L652.6 202.4 L653.7 202.4 L654.9 202.3 L656.1 202.3 L657.2 202.3 L658.4 202.3 L659.6 202.3 L660.7 202.3 L661.9 202.3 L663.1 202.3 L664.3 202.3 L665.4 202.3 L666.6 202.3 L667.8 202.3 L668.9 202.4 L670.1 202.5 L671.3 202.6 L672.4 202.6 L673.6 202.5 L674.8 202.3 L675.9 202.2 L677.1 202.2 L678.3 202.3 L679.4 202.3 L680.6 202.3 L681.8 202.2 L682.9 202.3 L684.1 202.3 L685.3 202.3 L686.5 202.4 L687.6 202.4 L688.8 202.4 L690.0 202.4 L691.1 202.4 L692.3 202.4 L693.5 202.5 L694.6 202.5 L695.8 202.8 L697.0 203.3 L698.1 202.8 L699.3 202.4 L700.5 202.4 L701.6 202.4 L702.8 202.4 L704.0 202.4 L705.1 202.4 L706.3 202.4 L707.5 202.4 L708.7 202.4 L709.8 202.4 L711.0 202.4 L712.2 202.4 L713.3 202.4 L714.5 202.4 L715.7 202.4 L716.8 202.4 L718.0 202.4 L719.2 202.4 L720.3 202.4 L721.5 202.4 L722.7 202.4 L723.8 202.4 L725.0 202.4 L726.2 202.3 L727.4 202.4 L728.5 202.4 L729.7 202.4 L730.9 202.3 L732.0 202.4 L733.2 202.4 L734.4 202.4 L735.5 202.3 L736.7 202.3 L737.9 202.4 L739.0 202.4 L740.2 202.4 L741.4 202.4 L742.5 202.4 L743.7 202.4 L744.9 202.4 L746.0 202.4 L747.2 202.3 L748.4 202.4 L749.6 202.4 L750.7 202.4 L751.9 202.4 L753.1 202.4 L754.2 202.4 L755.4 202.4 L756.6 202.4 L757.7 202.4 L758.9 202.3 L760.1 202.3 L761.2 202.4 L762.4 202.4 L763.6 202.4 L764.7 202.4 L765.9 202.3 L767.1 202.4 L768.2 202.4 L769.4 202.4 L770.6 202.3 L771.8 202.4 L772.9 202.4 L774.1 202.4 L775.3 202.3 L776.4 202.3 L777.6 202.4 L778.8 202.4 L779.9 202.4 L781.1 202.4 L782.3 202.3 L783.4 202.3 L784.6 202.4 L785.8 202.4 L786.9 202.4 L788.1 202.4 L789.3 202.4 L790.5 202.4 L791.6 202.4 L792.8 202.5 L794.0 202.5 L795.1 202.4 L796.3 202.4 L797.5 202.4 L798.6 202.4 L799.8 202.4 L801.0 202.4 L802.1 202.4 L803.3 202.4 L804.5 202.4 L805.6 202.4 L806.8 202.4 L808.0 202.4 L809.1 202.4 L810.3 202.4 L811.5 202.4 L812.7 202.4 L813.8 202.4 L815.0 202.4 L816.2 202.3 L817.3 202.4 L818.5 202.4 L819.7 202.3 L820.8 202.4 L822.0 202.4 L823.2 202.4 L824.3 202.4 L825.5 202.4 L826.7 202.4 L827.8 202.4 L829.0 202.4 L830.2 202.4 L831.3 202.4 L832.5 202.4 L833.7 202.4 L834.9 202.4 L836.0 202.4 L837.2 202.4 L838.4 202.4 L839.5 202.4 L840.7 202.4 L841.9 202.4 L843.0 202.4 L844.2 202.4 L845.4 202.4 L846.5 202.4 L847.7 202.4 L848.9 202.4 L850.0 202.4 L851.2 202.4 L852.4 202.4 L853.6 202.5 L854.7 202.4 L855.9 202.4 L857.1 202.4 L858.2 202.4 L859.4 202.4 L860.6 202.4 L861.7 202.3 L862.9 202.4 L864.1 202.3 L865.2 202.4 L866.4 202.4 L867.6 202.4 L868.7 202.4 L869.9 202.5 L871.1 202.5 L872.2 202.4 L873.4 202.4 L874.6 202.4 L875.8 202.4 L876.9 202.4 L878.1 202.4 L879.3 202.4 L880.4 202.4 L881.6 202.4 L882.8 202.4 L883.9 202.4 L885.1 202.4 L886.3 202.4 L887.4 202.4 L888.6 202.4 L889.8 202.4 L890.9 202.4 L892.1 202.4 L893.3 202.4 L894.4 202.4 L895.6 202.4 L896.8 202.4 L898.0 202.3 L899.1 202.4 L900.3 202.3 L901.5 202.3 L902.6 202.4 L903.8 202.4 L905.0 202.4 L906.1 202.4 L907.3 202.4 L908.5 202.4 L909.6 202.4 L910.8 202.4 L912.0 202.4 L913.1 202.5 L914.3 202.5 L915.5 202.5 L916.7 202.4 L917.8 202.4 L919.0 202.4 L920.2 202.4 L921.3 202.4 L922.5 202.5 L923.7 202.5 L924.8 202.4 L926.0 202.4 L927.2 202.4 L928.3 202.4 L929.5 202.5 L930.7 202.4 L931.8 202.4 L933.0 202.4 L934.2 202.4 L935.3 202.4 L936.5 202.4 L937.7 202.4 L938.9 202.4 L940.0 202.4 L941.2 202.4 L942.4 202.4 L943.5 202.4 L944.7 202.4 L945.9 202.4 L947.0 202.4 L948.2 202.4 L949.4 202.4 L950.5 202.4 L951.7 202.4 L952.9 202.4 L954.0 202.4 L955.2 202.4 L956.4 202.4 L957.5 202.4 L958.7 202.4 L959.9 202.4 L961.1 202.4 L962.2 202.4 L963.4 202.4 L964.6 202.4 L965.7 202.5 L966.9 202.5 L968.1 202.5 L969.2 202.4 L970.4 202.4 L971.6 202.4 L972.7 202.4 L973.9 202.4 L975.1 202.4 L976.2 202.4 L977.4 202.4 L978.6 202.3 L979.8 202.4 L980.9 202.4 L982.1 202.4 L983.3 202.4 L984.4 202.4 L985.6 202.4 L986.8 202.4 L987.9 202.4 L989.1 202.4 L990.3 202.4 L991.4 202.4 L992.6 202.4 L993.8 202.4 L994.9 202.4 L996.1 202.4 L997.3 202.4 L998.4 202.4 L999.6 202.4 L1000.8 202.3 L1002.0 202.4 L1003.1 202.5 L1004.3 202.5 L1005.5 202.4 L1006.6 202.5 L1007.8 202.5 L1009.0 202.4 L1010.1 202.4 L1011.3 202.4 L1012.5 202.4 L1013.6 202.4 L1014.8 202.4 L1016.0 202.5 L1017.1 202.5 L1018.3 202.5 L1019.5 202.4 L1020.6 202.4 L1021.8 202.4 L1023.0 202.4 L1024.2 202.4 L1025.3 202.4 L1026.5 202.4 L1027.7 202.4 L1028.8 202.4 L1030.0 202.4 L1031.2 202.4 L1032.3 202.4 L1033.5 202.3 L1034.7 202.4 L1035.8 202.4 L1037.0 202.5 L1038.2 202.5 L1039.3 202.5 L1040.5 202.4 L1041.7 202.3 L1042.9 202.3 L1044.0 202.3 L1045.2 202.4 L1046.4 202.4 L1047.5 202.4 L1048.7 202.3 L1049.9 202.4 L1051.0 202.4 L1052.2 202.4 L1053.4 202.4 L1054.5 202.4 L1055.7 202.4 L1056.9 202.3 L1058.0 202.4 L1059.2 202.4 L1060.4 202.5 L1061.5 202.5 L1062.7 202.5 L1063.9 202.4 L1065.1 202.4 L1066.2 202.4 L1067.4 202.4 L1068.6 202.4 L1069.7 202.4 L1070.9 202.4 L1072.1 202.4 L1073.2 202.4 L1074.4 202.4 L1075.6 202.4 L1076.7 202.4 L1077.9 202.4 L1079.1 202.4 L1080.2 202.4 L1081.4 202.4 L1082.6 202.4 L1083.7 202.4 L1084.9 202.4 L1086.1 202.4 L1087.3 202.4 L1088.4 202.4 L1089.6 202.4 L1090.8 202.4 L1091.9 202.4 L1093.1 202.4 L1094.3 202.4 L1095.4 202.3 L1096.6 202.4 L1097.8 202.4 L1098.9 202.5 L1100.1 202.4 L1101.3 202.4 L1102.4 202.4 L1103.6 202.4 L1104.8 202.4 L1106.0 202.4 L1107.1 202.4 L1108.3 202.3 L1109.5 202.3 L1110.6 202.3 L1111.8 202.4 L1113.0 202.4 L1114.1 202.4 L1115.3 202.4 L1116.5 202.4 L1117.6 202.4 L1118.8 202.3 L1120.0 202.3 L1121.1 202.4 L1122.3 202.4 L1123.5 202.4 L1124.6 202.4 L1125.8 202.4 L1127.0 202.4 L1128.2 202.4 L1129.3 202.4 L1130.5 202.4 L1131.7 202.4 L1132.8 202.4 L1134.0 202.4 L1135.2 202.4 L1136.3 202.4 L1137.5 202.4 L1138.7 202.4 L1139.8 202.4 L1141.0 202.4 L1142.2 202.4 L1143.3 202.4 L1144.5 202.4 L1145.7 202.3 L1146.8 202.3 L1148.0 202.4 L1149.2 202.4 L1150.4 202.4 L1151.5 202.4 L1152.7 202.4 L1153.9 202.4 L1155.0 202.4 L1156.2 202.4 L1157.4 202.5 L1158.5 202.5 L1159.7 202.4 L1160.9 202.4 L1162.0 202.4 L1163.2 202.4 L1164.4 202.4 L1165.5 202.4 L1166.7 202.4 L1167.9 202.4 L1169.1 202.4 L1170.2 202.3 L1171.4 202.3 L1172.6 202.3 L1173.7 202.4 L1174.9 202.4 L1176.1 202.4 L1177.2 202.4 L1178.4 202.4 L1179.6 202.4 L1180.7 202.4 L1181.9 202.4 L1183.1 202.4 L1184.2 202.4 L1185.4 202.4 L1186.6 202.3 L1187.7 202.4 L1188.9 202.4 L1190.1 202.5 L1191.3 202.4 L1192.4 202.4 L1193.6 202.4 L1194.8 202.4 L1195.9 202.4 L1197.1 202.5 L1198.3 202.5 L1199.4 202.4 L1200.6 202.4 L1201.8 202.4 L1202.9 202.4 L1204.1 202.4 L1205.3 202.3 L1206.4 202.4 L1207.6 202.4 L1208.8 202.4 L1209.9 202.4 L1211.1 202.4 L1212.3 202.4 L1213.5 202.4 L1214.6 202.4 L1215.8 202.5 L1217.0 202.5 L1218.1 202.4 L1219.3 202.4 L1220.5 202.4 L1221.6 202.4 L1222.8 202.4 L1224.0 202.4 L1225.1 202.4 L1226.3 202.4 L1227.5 202.4 L1228.6 202.4 L1229.8 202.4 L1231.0 202.4 L1232.2 202.4 L1233.3 202.4 L1234.5 202.4 L1235.7 202.4 L1236.8 202.4 L1238.0 202.4 L1239.2 202.4 L1240.3 202.4 L1241.5 202.4" stroke="#dc143c" stroke-width="2" fill="none" stroke-linejoin="bevel"/>
<rect x="1180.5" y="174.5" width="103.0" height="86" fill="#fff" fill-opacity="0.95" stroke="#e5e5e5" stroke-opacity="0.5" stroke-width="1"/>
<path d="M1190.5 194.5H1210.5" stroke="#ffa07a" stroke-width="2"/>
<text x="1215.5" y="198.1" font-size="13.3" fill="#444">X-Axis (g)</text>
<path d="M1190.5 217.5H1210.5" stroke="#ff0000" stroke-width="2"/>
<text x="1215.5" y="221.1" font-size="13.3" fill="#444">Y-Axis (g)</text>
<path d="M1190.5 240.5H1210.5" stroke="#dc143c" stroke-width="2"/>
<text x="1215.5" y="244.1" font-size="13.3" fill="#444">Z-Axis (g)</text>
</g>
<path d="M138.5 164.0V256.0M138.0 255.5H1294.0M168.5 255.5V260.0M198.5 253.0V262.0M228.5 255.5V260.0M259.5 255.5V260.0M289.5 255.5V260.0M320.5 255.5V260.0M350.5 253.0V262.0M381.5 255.5V260.0M411.5 255.5V260.0M441.5 255.5V260.0M472.5 255.5V260.0M502.5 253.0V262.0M533.5 255.5V260.0M563.5 255.5V260.0M594.5 255.5V260.0M624.5 255.5V260.0M654.5 253.0V262.0M685.5 255.5V260.0M715.5 255.5V260.0M746.5 255.5V260.0M776.5 255.5V260.0M807.5 253.0V262.0M837.5 255.5V260.0M867.5 255.5V260.0M898.5 255.5V260.0M928.5 255.5V260.0M959.5 253.0V262.0M989.5 255.5V260.0M1020.5 255.5V260.0M1050.5 255.5V260.0M1080.5 255.5V260.0M1111.5 253.0V262.0M1141.5 255.5V260.0M1172.5 255.5V260.0M1202.5 255.5V260.0M1233.5 255.5V260.0M1263.5 253.0V262.0M134.0 252.5H138.5M132.0 249.5H141.0M134.0 246.5H138.5M134.0 243.5H138.5M134.0 240.5H138.5M134.0 237.5H138.5M132.0 233.5H141.0M134.0 230.5H138.5M134.0 227.5H138.5M134.0 224.5H138.5M134.0 221.5H138.5M132.0 218.5H141.0M134.0 215.5H138.5M134.0 212.5H138.5M134.0 208.5H138.5M134.0 205.5H138.5M132.0 202.5H141.0M134.0 199.5H138.5M134.0 196.5H138.5M134.0 193.5H138.5M134.0 190.5H138.5M132.0 187.5H141.0M134.0 183.5H138.5M134.0 180.5H138.5M134.0 177.5H138.5M134.0 174.5H138.5M132.0 171.5H141.0M134.0 168.5H138.5M134.0 165.5H138.5" stroke="#000" stroke-width="1" fill="none"/>
<text x="198.5" y="275" font-size="11" fill="#444" text-anchor="middle">0</text>
<text x="350.6" y="275" font-size="11" fill="#444" text-anchor="middle">5</text>
<text x="502.8" y="275" font-size="11" fill="#444" text-anchor="middle">10</text>
<text x="654.9" y="275" font-size="11" fill="#444" text-anchor="middle">15</text>
<text x="807.1" y="275" font-size="11" fill="#444" text-anchor="middle">20</text>
<text x="959.2" y="275" font-size="11" fill="#444" text-anchor="middle">25</text>
<text x="1111.4" y="275" font-size="11" fill="#444" text-anchor="middle">30</text>
<text x="1263.5" y="275" font-size="11" fill="#444" text-anchor="middle">35</text>
<text x="127" y="174.3" font-size="11" fill="#444" text-anchor="end">2</text>
<text x="127" y="189.9" font-size="11" fill="#444" text-anchor="end">1.5</text>
<text x="127" y="205.5" font-size="11" fill="#444" text-anchor="end">1</text>
<text x="127" y="221.1" font-size="11" fill="#444" text-anchor="end">0.5</text>
<text x="127" y="236.7" font-size="11" fill="#444" text-anchor="end">0</text>
<text x="127" y="252.3" font-size="11" fill="#444" text-anchor="end">-0.5</text>
<text x="139" y="157" font-size="13.3" font-weight="bold" fill="#444">Accelerometer</text>
<text x="716.5" y="293.7" font-size="13.3" font-style="italic" fill="#444" text-anchor="middle">Time (s)</text>
<text transform="translate(103.6,210.0) rotate(-90)" x="0" y="0" font-size="13.3" font-style="italic" fill="#444" text-anchor="middle">Gravity of Earth (g)</text>
<g transform="translate(1308,174)"><path d="M-2.9 -7.95 L0.12 -10 L3.13 -7.35 L-2.77 -3.37Z" fill="#00b04f" transform="rotate(0)"/><path d="M-2.9 -7.95 L0.12 -10 L3.13 -7.35 L-2.77 -3.37Z" fill="#00a5a5" transform="rotate(45)"/><path d="M-2.9 -7.95 L0.12 -10 L3.13 -7.35 L-2.77 -3.37Z" fill="#3d9ce0" transform="rotate(90)"/><path d="M-2.9 -7.95 L0.12 -10 L3.13 -7.35 L-2.77 -3.37Z" fill="#8c0090" transform="rotate(135)"/><path d="M-2.9 -7.95 L0.12 -10 L3.13 -7.35 L-2.77 -3.37Z" fill="#ee0060" transform="rotate(180)"/><path d="M-2.9 -7.95 L0.12 -10 L3.13 -7.35 L-2.77 -3.37Z" fill="#ee4a22" transform="rotate(225)"/><path d="M-2.9 -7.95 L0.12 -10 L3.13 -7.35 L-2.77 -3.37Z" fill="#f6a423" transform="rotate(270)"/><path d="M-2.9 -7.95 L0.12 -10 L3.13 -7.35 L-2.77 -3.37Z" fill="#9ddc1e" transform="rotate(315)"/></g>
<rect x="1293" y="189" width="2" height="30" fill="#2a98de"/>
<g transform="translate(1301,196)" fill="#a1a6a9"><path d="M8.5 0 L12 4 L9.7 4 L9.7 7.3 L13 7.3 L13 5 L17 8.5 L13 12 L13 9.7 L9.7 9.7 L9.7 13 L12 13 L8.5 17 L5 13 L7.3 13 L7.3 9.7 L4 9.7 L4 12 L0 8.5 L4 5 L4 7.3 L7.3 7.3 L7.3 4 L5 4Z"/></g>
<g transform="translate(1301,226)"><path d="M0.5 8 V16.5 H16.5 V12 M0.5 6 V0.5 H6" fill="none" stroke="#a1a6a9" stroke-width="1" stroke-dasharray="2 1.3"/>
<circle cx="11.3" cy="5.6" r="4.4" fill="#fff" stroke="#a1a6a9" stroke-width="1.9"/><path d="M8.2 8.7 L3.3 13.6" stroke="#a1a6a9" stroke-width="2.2"/></g>
<path d="M1303 249.5H1313" stroke="#cfd2d4" stroke-width="1"/>
<clipPath id="clip1"><rect x="138.5" y="329.5" width="1155.0" height="91.0"/></clipPath>
<path d="M197.5 329.5V420.5M349.5 329.5V420.5M502.5 329.5V420.5M654.5 329.5V420.5M806.5 329.5V420.5M958.5 329.5V420.5M1111.5 329.5V420.5M1263.5 329.5V420.5M138.5 331.5H1293.5M138.5 350.5H1293.5M138.5 370.5H1293.5M138.5 389.5H1293.5M138.5 409.5H1293.5" stroke="#e5e5e5" stroke-width="1" fill="none"/>
<rect x="138.5" y="329.5" width="1155.0" height="91.0" fill="none" stroke="#e5e5e5" stroke-width="1"/>
<g clip-path="url(#clip1)">
<path d="M191.4 370.3 L192.9 370.3 L194.4 370.4 L195.9 370.3 L197.4 370.3 L198.9 370.3 L200.4 370.3 L201.9 370.4 L203.4 370.4 L204.9 370.4 L206.4 370.4 L207.9 370.3 L209.4 370.3 L210.9 370.4 L212.4 370.4 L213.9 370.4 L215.4 370.3 L216.9 370.3 L218.5 370.4 L220.0 370.3 L221.5 370.3 L223.0 370.3 L224.5 370.3 L226.0 370.4 L227.5 370.3 L229.0 370.3 L230.5 370.3 L232.0 370.3 L233.5 370.3 L235.0 370.3 L236.5 370.4 L238.0 370.4 L239.5 370.3 L241.0 370.3 L242.5 370.4 L244.0 370.4 L245.5 370.3 L247.0 370.3 L248.5 370.3 L250.0 370.4 L251.5 370.4 L253.0 370.4 L254.5 370.3 L256.0 370.4 L257.5 370.4 L259.0 370.4 L260.5 370.3 L262.0 370.3 L263.5 370.4 L265.0 370.4 L266.5 370.3 L268.0 370.3 L269.5 370.3 L271.0 370.3 L272.5 370.3 L274.0 370.3 L275.5 370.3 L277.0 370.3 L278.5 370.3 L280.0 370.3 L281.6 370.4 L283.1 370.4 L284.6 370.4 L286.1 370.4 L287.6 370.4 L289.1 370.4 L290.6 370.4 L292.1 370.5 L293.6 370.5 L295.1 370.5 L296.6 370.4 L298.1 370.4 L299.6 370.4 L301.1 370.4 L302.6 370.3 L304.1 370.2 L305.6 370.3 L307.1 370.3 L308.6 370.4 L310.1 370.4 L311.6 370.4 L313.1 370.3 L314.6 370.4 L316.1 370.4 L317.6 370.4 L319.1 370.3 L320.6 370.2 L322.1 370.2 L323.6 370.2 L325.1 370.3 L326.6 370.3 L328.1 370.4 L329.6 370.4 L331.1 370.4 L332.6 370.4 L334.1 370.3 L335.6 370.4 L337.1 370.4 L338.6 370.3 L340.1 370.3 L341.6 370.3 L343.1 370.3 L344.7 370.4 L346.2 370.4 L347.7 370.4 L349.2 370.4 L350.7 370.3 L352.2 370.3 L353.7 370.3 L355.2 370.3 L356.7 370.3 L358.2 370.3 L359.7 370.4 L361.2 370.3 L362.7 370.3 L364.2 370.3 L365.7 370.3 L367.2 370.3 L368.7 370.4 L370.2 370.4 L371.7 370.4 L373.2 370.4 L374.7 370.3 L376.2 370.3 L377.7 370.3 L379.2 370.3 L380.7 370.3 L382.2 370.4 L383.7 370.4 L385.2 370.4 L386.7 370.3 L388.2 370.2 L389.7 370.3 L391.2 370.4 L392.7 370.4 L394.2 370.4 L395.7 370.3 L397.2 370.3 L398.7 370.3 L400.2 370.3 L401.7 370.3 L403.2 370.3 L404.7 370.4 L406.2 370.3 L407.8 370.3 L409.3 370.2 L410.8 370.3 L412.3 370.3 L413.8 370.3 L415.3 370.3 L416.8 370.3 L418.3 370.3 L419.8 370.4 L421.3 370.3 L422.8 370.3 L424.3 370.3 L425.8 370.3 L427.3 370.3 L428.8 370.3 L430.3 370.3 L431.8 370.4 L433.3 370.4 L434.8 370.4 L436.3 370.4 L437.8 370.3 L439.3 370.3 L440.8 370.3 L442.3 370.4 L443.8 370.4 L445.3 370.4 L446.8 370.4 L448.3 370.4 L449.8 370.3 L451.3 370.4 L452.8 370.4 L454.3 370.4 L455.8 370.4 L457.3 370.3 L458.8 370.3 L460.3 370.3 L461.8 370.3 L463.3 370.3 L464.8 370.3 L466.3 370.4 L467.8 370.4 L469.3 370.4 L470.8 370.3 L472.4 370.4 L473.9 370.4 L475.4 370.4 L476.9 370.4 L478.4 370.4 L479.9 370.4 L481.4 370.4 L482.9 370.4 L484.4 370.3 L485.9 370.3 L487.4 370.4 L488.9 370.4 L490.4 370.4 L491.9 370.3 L493.4 370.3 L494.9 370.3 L496.4 370.3 L497.9 370.3 L499.4 370.3 L500.9 370.3 L502.4 370.3 L503.9 370.3 L505.4 370.3 L506.9 370.3 L508.4 370.3 L509.9 370.3 L511.4 370.3 L512.9 370.3 L514.4 370.3 L515.9 370.3 L517.4 370.2 L518.9 370.3 L520.4 370.3 L521.9 370.3 L523.4 370.4 L524.9 370.3 L526.4 370.4 L527.9 370.4 L529.4 370.5 L530.9 370.4 L532.4 370.3 L533.9 370.3 L535.5 370.3 L537.0 370.4 L538.5 370.3 L540.0 370.3 L541.5 370.3 L543.0 370.3 L544.5 370.4 L546.0 370.3 L547.5 370.4 L549.0 370.3 L550.5 370.4 L552.0 370.4 L553.5 370.4 L555.0 370.4 L556.5 370.4 L558.0 370.3 L559.5 370.3 L561.0 370.3 L562.5 370.4 L564.0 370.3 L565.5 370.3 L567.0 370.3 L568.5 370.3 L570.0 370.4 L571.5 370.4 L573.0 370.3 L574.5 370.3 L576.0 370.3 L577.5 370.4 L579.0 370.4 L580.5 370.4 L582.0 370.4 L583.5 370.4 L585.0 370.4 L586.5 370.4 L588.0 370.3 L589.5 370.4 L591.0 370.4 L592.5 370.3 L594.0 370.3 L595.5 370.3 L597.0 370.5 L598.6 370.5 L600.1 370.5 L601.6 370.4 L603.1 370.3 L604.6 370.3 L606.1 370.3 L607.6 370.3 L609.1 371.5 L610.6 371.6 L612.1 371.0 L613.6 371.3 L615.1 370.7 L616.6 370.2 L618.1 370.9 L619.6 370.7 L621.1 371.0 L622.6 371.5 L624.1 371.3 L625.6 370.5 L627.1 370.4 L628.6 369.5 L630.1 369.2 L631.6 369.6 L633.1 370.2 L634.6 370.8 L636.1 370.4 L637.6 370.6 L639.1 369.7 L640.6 369.5 L642.1 370.0 L643.6 370.1 L645.1 369.8 L646.6 369.7 L648.1 369.7 L649.6 369.8 L651.1 371.0 L652.6 370.6 L654.1 370.6 L655.6 370.2 L657.1 369.7 L658.6 370.4 L660.1 370.6 L661.7 370.7 L663.2 370.7 L664.7 370.0 L666.2 369.2 L667.7 369.6 L669.2 369.5 L670.7 369.3 L672.2 369.4 L673.7 369.3 L675.2 369.9 L676.7 371.0 L678.2 371.6 L679.7 370.9 L681.2 370.2 L682.7 370.0 L684.2 369.8 L685.7 370.7 L687.2 370.6 L688.7 371.2 L690.2 371.6 L691.7 371.4 L693.2 371.0 L694.7 371.2 L696.2 370.4 L697.7 370.9 L699.2 372.1 L700.7 370.9 L702.2 371.2 L703.7 370.6 L705.2 370.3 L706.7 370.4 L708.2 370.4 L709.7 370.4 L711.2 370.4 L712.7 370.3 L714.2 370.3 L715.7 370.2 L717.2 370.3 L718.7 370.4 L720.2 370.4 L721.7 370.4 L723.2 370.3 L724.8 370.2 L726.3 370.2 L727.8 370.2 L729.3 370.3 L730.8 370.3 L732.3 370.3 L733.8 370.4 L735.3 370.4 L736.8 370.5 L738.3 370.4 L739.8 370.3 L741.3 370.3 L742.8 370.3 L744.3 370.3 L745.8 370.3 L747.3 370.3 L748.8 370.4 L750.3 370.4 L751.8 370.4 L753.3 370.4 L754.8 370.3 L756.3 370.2 L757.8 370.2 L759.3 370.4 L760.8 370.4 L762.3 370.4 L763.8 370.3 L765.3 370.3 L766.8 370.3 L768.3 370.3 L769.8 370.3 L771.3 370.3 L772.8 370.3 L774.3 370.3 L775.8 370.3 L777.3 370.3 L778.8 370.4 L780.3 370.4 L781.8 370.4 L783.3 370.4 L784.8 370.4 L786.3 370.4 L787.8 370.3 L789.4 370.4 L790.9 370.4 L792.4 370.5 L793.9 370.4 L795.4 370.3 L796.9 370.3 L798.4 370.3 L799.9 370.4 L801.4 370.4 L802.9 370.4 L804.4 370.4 L805.9 370.3 L807.4 370.4 L808.9 370.3 L810.4 370.4 L811.9 370.4 L813.4 370.4 L814.9 370.4 L816.4 370.3 L817.9 370.3 L819.4 370.3 L820.9 370.4 L822.4 370.3 L823.9 370.3 L825.4 370.2 L826.9 370.3 L828.4 370.3 L829.9 370.4 L831.4 370.4 L832.9 370.4 L834.4 370.4 L835.9 370.4 L837.4 370.3 L838.9 370.4 L840.4 370.4 L841.9 370.5 L843.4 370.4 L844.9 370.4 L846.4 370.3 L847.9 370.3 L849.4 370.3 L850.9 370.5 L852.5 370.5 L854.0 370.5 L855.5 370.4 L857.0 370.4 L858.5 370.3 L860.0 370.3 L861.5 370.3 L863.0 370.4 L864.5 370.3 L866.0 370.3 L867.5 370.2 L869.0 370.2 L870.5 370.2 L872.0 370.3 L873.5 370.3 L875.0 370.4 L876.5 370.4 L878.0 370.4 L879.5 370.4 L881.0 370.4 L882.5 370.4 L884.0 370.4 L885.5 370.4 L887.0 370.3 L888.5 370.3 L890.0 370.3 L891.5 370.3 L893.0 370.4 L894.5 370.4 L896.0 370.4 L897.5 370.4 L899.0 370.5 L900.5 370.5 L902.0 370.4 L903.5 370.4 L905.0 370.3 L906.5 370.3 L908.0 370.3 L909.5 370.4 L911.0 370.4 L912.5 370.4 L914.0 370.3 L915.6 370.4 L917.1 370.4 L918.6 370.5 L920.1 370.4 L921.6 370.4 L923.1 370.3 L924.6 370.3 L926.1 370.4 L927.6 370.4 L929.1 370.4 L930.6 370.3 L932.1 370.4 L933.6 370.3 L935.1 370.4 L936.6 370.4 L938.1 370.3 L939.6 370.3 L941.1 370.3 L942.6 370.4 L944.1 370.4 L945.6 370.4 L947.1 370.3 L948.6 370.3 L950.1 370.3 L951.6 370.3 L953.1 370.3 L954.6 370.4 L956.1 370.3 L957.6 370.3 L959.1 370.4 L960.6 370.3 L962.1 370.3 L963.6 370.3 L965.1 370.3 L966.6 370.3 L968.1 370.3 L969.6 370.3 L971.1 370.4 L972.6 370.3 L974.1 370.4 L975.6 370.4 L977.1 370.4 L978.7 370.4 L980.2 370.3 L981.7 370.3 L983.2 370.4 L984.7 370.3 L986.2 370.4 L987.7 370.3 L989.2 370.3 L990.7 370.2 L992.2 370.3 L993.7 370.4 L995.2 370.4 L996.7 370.3 L998.2 370.4 L999.7 370.3 L1001.2 370.3 L1002.7 370.4 L1004.2 370.4 L1005.7 370.4 L1007.2 370.4 L1008.7 370.3 L1010.2 370.3 L1011.7 370.4 L1013.2 370.4 L1014.7 370.4 L1016.2 370.4 L1017.7 370.4 L1019.2 370.4 L1020.7 370.4 L1022.2 370.4 L1023.7 370.4 L1025.2 370.3 L1026.7 370.3 L1028.2 370.3 L1029.7 370.4 L1031.2 370.3 L1032.7 370.2 L1034.2 370.3 L1035.7 370.3 L1037.2 370.3 L1038.7 370.3 L1040.2 370.4 L1041.8 370.4 L1043.3 370.4 L1044.8 370.3 L1046.3 370.4 L1047.8 370.4 L1049.3 370.4 L1050.8 370.3 L1052.3 370.3 L1053.8 370.3 L1055.3 370.3 L1056.8 370.4 L1058.3 370.4 L1059.8 370.4 L1061.3 370.4 L1062.8 370.4 L1064.3 370.4 L1065.8 370.3 L1067.3 370.4 L1068.8 370.4 L1070.3 370.4 L1071.8 370.3 L1073.3 370.4 L1074.8 370.4 L1076.3 370.3 L1077.8 370.3 L1079.3 370.4 L1080.8 370.4 L1082.3 370.4 L1083.8 370.4 L1085.3 370.4 L1086.8 370.4 L1088.3 370.3 L1089.8 370.3 L1091.3 370.4 L1092.8 370.4 L1094.3 370.4 L1095.8 370.4 L1097.3 370.3 L1098.8 370.3 L1100.3 370.3 L1101.8 370.3 L1103.3 370.3 L1104.9 370.3 L1106.4 370.4 L1107.9 370.4 L1109.4 370.4 L1110.9 370.4 L1112.4 370.3 L1113.9 370.3 L1115.4 370.3 L1116.9 370.3 L1118.4 370.3 L1119.9 370.3 L1121.4 370.3 L1122.9 370.2 L1124.4 370.2 L1125.9 370.3 L1127.4 370.4 L1128.9 370.4 L1130.4 370.4 L1131.9 370.4 L1133.4 370.4 L1134.9 370.3 L1136.4 370.3 L1137.9 370.3 L1139.4 370.3 L1140.9 370.4 L1142.4 370.4 L1143.9 370.4 L1145.4 370.4 L1146.9 370.4 L1148.4 370.4 L1149.9 370.4 L1151.4 370.4 L1152.9 370.3 L1154.4 370.3 L1155.9 370.3 L1157.4 370.4 L1158.9 370.3 L1160.4 370.4 L1161.9 370.4 L1163.4 370.4 L1164.9 370.3 L1166.4 370.3 L1167.9 370.3 L1169.5 370.4 L1171.0 370.4 L1172.5 370.5 L1174.0 370.4 L1175.5 370.4 L1177.0 370.4 L1178.5 370.4 L1180.0 370.4 L1181.5 370.3 L1183.0 370.4 L1184.5 370.4 L1186.0 370.4 L1187.5 370.3 L1189.0 370.3 L1190.5 370.4 L1192.0 370.5 L1193.5 370.5 L1195.0 370.4 L1196.5 370.3 L1198.0 370.3 L1199.5 370.4 L1201.0 370.3 L1202.5 370.4 L1204.0 370.4 L1205.5 370.4 L1207.0 370.3 L1208.5 370.3 L1210.0 370.3 L1211.5 370.3 L1213.0 370.3 L1214.5 370.4 L1216.0 370.3 L1217.5 370.4 L1219.0 370.4 L1220.5 370.5 L1222.0 370.5 L1223.5 370.4 L1225.0 370.3 L1226.5 370.3 L1228.0 370.3 L1229.5 370.4 L1231.0 370.5 L1232.6 370.5 L1234.1 370.5 L1235.6 370.4 L1237.1 370.4 L1238.6 370.3 L1240.1 370.3 L1241.6 370.3" stroke="#90ee90" stroke-width="2" fill="none" stroke-linejoin="bevel"/>
<path d="M191.4 370.4 L192.9 370.4 L194.4 370.4 L195.9 370.3 L197.4 370.3 L198.9 370.3 L200.4 370.4 L201.9 370.4 L203.4 370.4 L204.9 370.3 L206.4 370.2 L207.9 370.3 L209.4 370.4 L210.9 370.4 L212.4 370.3 L213.9 370.4 L215.4 370.3 L216.9 370.4 L218.5 370.3 L220.0 370.3 L221.5 370.3 L223.0 370.3 L224.5 370.3 L226.0 370.2 L227.5 370.3 L229.0 370.4 L230.5 370.4 L232.0 370.4 L233.5 370.4 L235.0 370.4 L236.5 370.4 L238.0 370.3 L239.5 370.3 L241.0 370.3 L242.5 370.4 L244.0 370.4 L245.5 370.3 L247.0 370.3 L248.5 370.3 L250.0 370.3 L251.5 370.3 L253.0 370.3 L254.5 370.3 L256.0 370.3 L257.5 370.3 L259.0 370.4 L260.5 370.4 L262.0 370.5 L263.5 370.4 L265.0 370.4 L266.5 370.4 L268.0 370.4 L269.5 370.5 L271.0 370.5 L272.5 370.4 L274.0 370.3 L275.5 370.2 L277.0 370.2 L278.5 370.2 L280.0 370.3 L281.6 370.4 L283.1 370.4 L284.6 370.4 L286.1 370.4 L287.6 370.4 L289.1 370.4 L290.6 370.5 L292.1 370.4 L293.6 370.4 L295.1 370.4 L296.6 370.4 L298.1 370.3 L299.6 370.3 L301.1 370.4 L302.6 370.4 L304.1 370.5 L305.6 370.4 L307.1 370.4 L308.6 370.3 L310.1 370.3 L311.6 370.4 L313.1 370.5 L314.6 370.4 L316.1 370.4 L317.6 370.4 L319.1 370.4 L320.6 370.4 L322.1 370.4 L323.6 370.4 L325.1 370.4 L326.6 370.4 L328.1 370.4 L329.6 370.4 L331.1 370.4 L332.6 370.4 L334.1 370.3 L335.6 370.2 L337.1 370.2 L338.6 370.3 L340.1 370.3 L341.6 370.4 L343.1 370.4 L344.7 370.4 L346.2 370.4 L347.7 370.4 L349.2 370.4 L350.7 370.4 L352.2 370.4 L353.7 370.4 L355.2 370.3 L356.7 370.3 L358.2 370.3 L359.7 370.3 L361.2 370.4 L362.7 370.4 L364.2 370.4 L365.7 370.4 L367.2 370.4 L368.7 370.4 L370.2 370.4 L371.7 370.4 L373.2 370.4 L374.7 370.3 L376.2 370.3 L377.7 370.3 L379.2 370.3 L380.7 370.3 L382.2 370.3 L383.7 370.4 L385.2 370.3 L386.7 370.3 L388.2 370.3 L389.7 370.4 L391.2 370.3 L392.7 370.4 L394.2 370.3 L395.7 370.4 L397.2 370.3 L398.7 370.3 L400.2 370.3 L401.7 370.3 L403.2 370.4 L404.7 370.3 L406.2 370.3 L407.8 370.3 L409.3 370.2 L410.8 370.3 L412.3 370.2 L413.8 370.3 L415.3 370.4 L416.8 370.4 L418.3 370.4 L419.8 370.4 L421.3 370.3 L422.8 370.2 L424.3 370.3 L425.8 370.3 L427.3 370.4 L428.8 370.3 L430.3 370.3 L431.8 370.3 L433.3 370.4 L434.8 370.5 L436.3 370.4 L437.8 370.3 L439.3 370.3 L440.8 370.3 L442.3 370.4 L443.8 370.4 L445.3 370.4 L446.8 370.4 L448.3 370.4 L449.8 370.4 L451.3 370.3 L452.8 370.3 L454.3 370.4 L455.8 370.4 L457.3 370.4 L458.8 370.4 L460.3 370.4 L461.8 370.4 L463.3 370.4 L464.8 370.4 L466.3 370.4 L467.8 370.3 L469.3 370.3 L470.8 370.3 L472.4 370.3 L473.9 370.3 L475.4 370.3 L476.9 370.3 L478.4 370.3 L479.9 370.4 L481.4 370.4 L482.9 370.4 L484.4 370.4 L485.9 370.3 L487.4 370.3 L488.9 370.4 L490.4 370.4 L491.9 370.4 L493.4 370.4 L494.9 370.4 L496.4 370.3 L497.9 370.3 L499.4 370.3 L500.9 370.4 L502.4 370.4 L503.9 370.4 L505.4 370.4 L506.9 370.4 L508.4 370.3 L509.9 370.3 L511.4 370.2 L512.9 370.3 L514.4 370.3 L515.9 370.3 L517.4 370.3 L518.9 370.3 L520.4 370.4 L521.9 370.3 L523.4 370.3 L524.9 370.3 L526.4 370.4 L527.9 370.4 L529.4 370.4 L530.9 370.3 L532.4 370.3 L533.9 370.3 L535.5 370.4 L537.0 370.4 L538.5 370.4 L540.0 370.4 L541.5 370.4 L543.0 370.4 L544.5 370.4 L546.0 370.5 L547.5 370.4 L549.0 370.4 L550.5 370.4 L552.0 370.4 L553.5 370.4 L555.0 370.4 L556.5 370.4 L558.0 370.4 L559.5 370.4 L561.0 370.4 L562.5 370.4 L564.0 370.4 L565.5 370.5 L567.0 370.4 L568.5 370.3 L570.0 370.3 L571.5 370.3 L573.0 370.4 L574.5 370.4 L576.0 370.4 L577.5 370.3 L579.0 370.3 L580.5 370.4 L582.0 370.4 L583.5 370.3 L585.0 370.3 L586.5 370.3 L588.0 370.3 L589.5 370.4 L591.0 370.3 L592.5 370.3 L594.0 370.3 L595.5 370.3 L597.0 370.3 L598.6 370.4 L600.1 370.4 L601.6 370.5 L603.1 370.4 L604.6 370.3 L606.1 370.4 L607.6 370.4 L609.1 371.8 L610.6 372.8 L612.1 372.5 L613.6 371.5 L615.1 371.3 L616.6 370.3 L618.1 369.6 L619.6 369.4 L621.1 370.1 L622.6 370.1 L624.1 370.5 L625.6 370.7 L627.1 369.9 L628.6 370.1 L630.1 369.9 L631.6 369.7 L633.1 369.1 L634.6 369.0 L636.1 369.3 L637.6 370.5 L639.1 371.3 L640.6 372.2 L642.1 372.2 L643.6 371.5 L645.1 370.7 L646.6 370.1 L648.1 369.2 L649.6 369.1 L651.1 370.2 L652.6 370.3 L654.1 371.4 L655.6 371.3 L657.1 370.3 L658.6 370.0 L660.1 369.5 L661.7 370.0 L663.2 371.2 L664.7 371.1 L666.2 371.1 L667.7 370.6 L669.2 369.8 L670.7 369.7 L672.2 369.7 L673.7 370.0 L675.2 370.2 L676.7 370.2 L678.2 370.0 L679.7 369.3 L681.2 369.6 L682.7 369.7 L684.2 369.6 L685.7 370.0 L687.2 369.6 L688.7 369.6 L690.2 369.2 L691.7 369.9 L693.2 370.2 L694.7 370.5 L696.2 371.9 L697.7 371.3 L699.2 371.4 L700.7 371.2 L702.2 370.8 L703.7 371.1 L705.2 370.2 L706.7 370.2 L708.2 370.2 L709.7 370.3 L711.2 370.3 L712.7 370.3 L714.2 370.3 L715.7 370.3 L717.2 370.3 L718.7 370.3 L720.2 370.3 L721.7 370.4 L723.2 370.4 L724.8 370.4 L726.3 370.4 L727.8 370.5 L729.3 370.5 L730.8 370.4 L732.3 370.4 L733.8 370.4 L735.3 370.4 L736.8 370.3 L738.3 370.3 L739.8 370.3 L741.3 370.3 L742.8 370.3 L744.3 370.2 L745.8 370.3 L747.3 370.4 L748.8 370.5 L750.3 370.5 L751.8 370.4 L753.3 370.4 L754.8 370.5 L756.3 370.5 L757.8 370.4 L759.3 370.4 L760.8 370.3 L762.3 370.3 L763.8 370.3 L765.3 370.3 L766.8 370.4 L768.3 370.4 L769.8 370.4 L771.3 370.4 L772.8 370.4 L774.3 370.4 L775.8 370.3 L777.3 370.4 L778.8 370.4 L780.3 370.3 L781.8 370.3 L783.3 370.3 L784.8 370.3 L786.3 370.3 L787.8 370.4 L789.4 370.4 L790.9 370.4 L792.4 370.4 L793.9 370.4 L795.4 370.4 L796.9 370.3 L798.4 370.3 L799.9 370.4 L801.4 370.4 L802.9 370.5 L804.4 370.4 L805.9 370.3 L807.4 370.3 L808.9 370.4 L810.4 370.4 L811.9 370.4 L813.4 370.3 L814.9 370.4 L816.4 370.4 L817.9 370.4 L819.4 370.4 L820.9 370.4 L822.4 370.4 L823.9 370.5 L825.4 370.4 L826.9 370.4 L828.4 370.4 L829.9 370.4 L831.4 370.3 L832.9 370.3 L834.4 370.3 L835.9 370.3 L837.4 370.3 L838.9 370.4 L840.4 370.4 L841.9 370.3 L843.4 370.3 L844.9 370.2 L846.4 370.3 L847.9 370.3 L849.4 370.3 L850.9 370.4 L852.5 370.3 L854.0 370.3 L855.5 370.3 L857.0 370.3 L858.5 370.3 L860.0 370.3 L861.5 370.4 L863.0 370.3 L864.5 370.4 L866.0 370.4 L867.5 370.4 L869.0 370.2 L870.5 370.2 L872.0 370.3 L873.5 370.3 L875.0 370.3 L876.5 370.3 L878.0 370.3 L879.5 370.3 L881.0 370.3 L882.5 370.3 L884.0 370.3 L885.5 370.4 L887.0 370.4 L888.5 370.4 L890.0 370.3 L891.5 370.4 L893.0 370.4 L894.5 370.4 L896.0 370.4 L897.5 370.4 L899.0 370.3 L900.5 370.3 L902.0 370.3 L903.5 370.4 L905.0 370.4 L906.5 370.4 L908.0 370.4 L909.5 370.4 L911.0 370.4 L912.5 370.4 L914.0 370.4 L915.6 370.4 L917.1 370.4 L918.6 370.4 L920.1 370.4 L921.6 370.4 L923.1 370.4 L924.6 370.4 L926.1 370.4 L927.6 370.3 L929.1 370.3 L930.6 370.3 L932.1 370.3 L933.6 370.3 L935.1 370.4 L936.6 370.5 L938.1 370.5 L939.6 370.4 L941.1 370.4 L942.6 370.3 L944.1 370.4 L945.6 370.4 L947.1 370.4 L948.6 370.4 L950.1 370.4 L951.6 370.4 L953.1 370.3 L954.6 370.3 L956.1 370.3 L957.6 370.4 L959.1 370.4 L960.6 370.4 L962.1 370.3 L963.6 370.3 L965.1 370.3 L966.6 370.3 L968.1 370.3 L969.6 370.3 L971.1 370.3 L972.6 370.3 L974.1 370.3 L975.6 370.3 L977.1 370.3 L978.7 370.3 L980.2 370.4 L981.7 370.4 L983.2 370.3 L984.7 370.3 L986.2 370.3 L987.7 370.3 L989.2 370.3 L990.7 370.3 L992.2 370.3 L993.7 370.2 L995.2 370.2 L996.7 370.3 L998.2 370.3 L999.7 370.3 L1001.2 370.3 L1002.7 370.3 L1004.2 370.4 L1005.7 370.4 L1007.2 370.3 L1008.7 370.4 L1010.2 370.4 L1011.7 370.4 L1013.2 370.4 L1014.7 370.4 L1016.2 370.3 L1017.7 370.3 L1019.2 370.3 L1020.7 370.3 L1022.2 370.4 L1023.7 370.4 L1025.2 370.4 L1026.7 370.3 L1028.2 370.3 L1029.7 370.3 L1031.2 370.3 L1032.7 370.3 L1034.2 370.3 L1035.7 370.4 L1037.2 370.4 L1038.7 370.3 L1040.2 370.3 L1041.8 370.3 L1043.3 370.4 L1044.8 370.3 L1046.3 370.3 L1047.8 370.2 L1049.3 370.3 L1050.8 370.3 L1052.3 370.4 L1053.8 370.4 L1055.3 370.4 L1056.8 370.4 L1058.3 370.3 L1059.8 370.3 L1061.3 370.3 L1062.8 370.4 L1064.3 370.4 L1065.8 370.4 L1067.3 370.4 L1068.8 370.4 L1070.3 370.4 L1071.8 370.3 L1073.3 370.2 L1074.8 370.2 L1076.3 370.2 L1077.8 370.3 L1079.3 370.5 L1080.8 370.4 L1082.3 370.4 L1083.8 370.3 L1085.3 370.3 L1086.8 370.4 L1088.3 370.4 L1089.8 370.4 L1091.3 370.4 L1092.8 370.3 L1094.3 370.3 L1095.8 370.3 L1097.3 370.4 L1098.8 370.3 L1100.3 370.4 L1101.8 370.4 L1103.3 370.5 L1104.9 370.4 L1106.4 370.4 L1107.9 370.3 L1109.4 370.3 L1110.9 370.3 L1112.4 370.2 L1113.9 370.3 L1115.4 370.4 L1116.9 370.5 L1118.4 370.4 L1119.9 370.4 L1121.4 370.3 L1122.9 370.3 L1124.4 370.3 L1125.9 370.4 L1127.4 370.4 L1128.9 370.3 L1130.4 370.3 L1131.9 370.4 L1133.4 370.4 L1134.9 370.3 L1136.4 370.3 L1137.9 370.3 L1139.4 370.2 L1140.9 370.4 L1142.4 370.3 L1143.9 370.3 L1145.4 370.2 L1146.9 370.3 L1148.4 370.4 L1149.9 370.3 L1151.4 370.3 L1152.9 370.3 L1154.4 370.3 L1155.9 370.3 L1157.4 370.3 L1158.9 370.3 L1160.4 370.3 L1161.9 370.4 L1163.4 370.4 L1164.9 370.3 L1166.4 370.3 L1167.9 370.2 L1169.5 370.3 L1171.0 370.3 L1172.5 370.3 L1174.0 370.3 L1175.5 370.3 L1177.0 370.4 L1178.5 370.3 L1180.0 370.3 L1181.5 370.3 L1183.0 370.4 L1184.5 370.3 L1186.0 370.4 L1187.5 370.4 L1189.0 370.4 L1190.5 370.3 L1192.0 370.3 L1193.5 370.3 L1195.0 370.3 L1196.5 370.3 L1198.0 370.3 L1199.5 370.3 L1201.0 370.3 L1202.5 370.3 L1204.0 370.3 L1205.5 370.3 L1207.0 370.3 L1208.5 370.4 L1210.0 370.4 L1211.5 370.4 L1213.0 370.3 L1214.5 370.4 L1216.0 370.4 L1217.5 370.5 L1219.0 370.4 L1220.5 370.4 L1222.0 370.4 L1223.5 370.4 L1225.0 370.4 L1226.5 370.3 L1228.0 370.2 L1229.5 370.3 L1231.0 370.3 L1232.6 370.3 L1234.1 370.3 L1235.6 370.4 L1237.1 370.4 L1238.6 370.4 L1240.1 370.3 L1241.6 370.3" stroke="#66ee33" stroke-width="2" fill="none" stroke-linejoin="bevel"/>
<path d="M191.4 370.4 L192.9 370.4 L194.4 370.5 L195.9 370.5 L197.4 370.5 L198.9 370.5 L200.4 370.5 L201.9 370.4 L203.4 370.5 L204.9 370.5 L206.4 370.4 L207.9 370.6 L209.4 370.5 L210.9 370.6 L212.4 370.5 L213.9 370.6 L215.4 370.4 L216.9 370.4 L218.5 370.4 L220.0 370.5 L221.5 370.5 L223.0 370.5 L224.5 370.5 L226.0 370.5 L227.5 370.5 L229.0 370.5 L230.5 370.5 L232.0 370.5 L233.5 370.5 L235.0 370.6 L236.5 370.5 L238.0 370.4 L239.5 370.3 L241.0 370.4 L242.5 370.5 L244.0 370.5 L245.5 370.4 L247.0 370.5 L248.5 370.5 L250.0 370.5 L251.5 370.5 L253.0 370.5 L254.5 370.6 L256.0 370.5 L257.5 370.4 L259.0 370.4 L260.5 370.4 L262.0 370.4 L263.5 370.5 L265.0 370.5 L266.5 370.5 L268.0 370.5 L269.5 370.5 L271.0 370.4 L272.5 370.4 L274.0 370.4 L275.5 370.4 L277.0 370.4 L278.5 370.4 L280.0 370.4 L281.6 370.4 L283.1 370.5 L284.6 370.5 L286.1 370.5 L287.6 370.5 L289.1 370.5 L290.6 370.5 L292.1 370.5 L293.6 370.5 L295.1 370.6 L296.6 370.6 L298.1 370.7 L299.6 370.6 L301.1 370.6 L302.6 370.6 L304.1 370.6 L305.6 370.5 L307.1 370.5 L308.6 370.5 L310.1 370.5 L311.6 370.5 L313.1 370.5 L314.6 370.5 L316.1 370.5 L317.6 370.5 L319.1 370.6 L320.6 370.5 L322.1 370.5 L323.6 370.5 L325.1 370.6 L326.6 370.5 L328.1 370.5 L329.6 370.4 L331.1 370.4 L332.6 370.4 L334.1 370.5 L335.6 370.5 L337.1 370.5 L338.6 370.5 L340.1 370.5 L341.6 370.6 L343.1 370.5 L344.7 370.5 L346.2 370.5 L347.7 370.5 L349.2 370.5 L350.7 370.5 L352.2 370.6 L353.7 370.5 L355.2 370.4 L356.7 370.3 L358.2 370.3 L359.7 370.4 L361.2 370.5 L362.7 370.5 L364.2 370.5 L365.7 370.5 L367.2 370.4 L368.7 370.5 L370.2 370.4 L371.7 370.6 L373.2 370.6 L374.7 370.6 L376.2 370.5 L377.7 370.4 L379.2 370.4 L380.7 370.4 L382.2 370.4 L383.7 370.5 L385.2 370.5 L386.7 370.5 L388.2 370.4 L389.7 370.4 L391.2 370.4 L392.7 370.4 L394.2 370.5 L395.7 370.5 L397.2 370.6 L398.7 370.5 L400.2 370.6 L401.7 370.4 L403.2 370.4 L404.7 370.4 L406.2 370.5 L407.8 370.6 L409.3 370.6 L410.8 370.5 L412.3 370.5 L413.8 370.4 L415.3 370.5 L416.8 370.5 L418.3 370.5 L419.8 370.5 L421.3 370.5 L422.8 370.5 L424.3 370.5 L425.8 370.5 L427.3 370.5 L428.8 370.6 L430.3 370.6 L431.8 370.6 L433.3 370.6 L434.8 370.6 L436.3 370.5 L437.8 370.5 L439.3 370.3 L440.8 370.4 L442.3 370.4 L443.8 370.5 L445.3 370.4 L446.8 370.5 L448.3 370.4 L449.8 370.5 L451.3 370.5 L452.8 370.6 L454.3 370.6 L455.8 370.6 L457.3 370.5 L458.8 370.5 L460.3 370.5 L461.8 370.5 L463.3 370.5 L464.8 370.5 L466.3 370.5 L467.8 370.5 L469.3 370.5 L470.8 370.5 L472.4 370.5 L473.9 370.4 L475.4 370.4 L476.9 370.5 L478.4 370.4 L479.9 370.4 L481.4 370.4 L482.9 370.4 L484.4 370.6 L485.9 370.4 L487.4 370.6 L488.9 370.5 L490.4 370.7 L491.9 370.6 L493.4 370.5 L494.9 370.5 L496.4 370.5 L497.9 370.5 L499.4 370.5 L500.9 370.5 L502.4 370.5 L503.9 370.5 L505.4 370.4 L506.9 370.4 L508.4 370.5 L509.9 370.5 L511.4 370.5 L512.9 370.5 L514.4 370.4 L515.9 370.4 L517.4 370.4 L518.9 370.4 L520.4 370.5 L521.9 370.5 L523.4 370.5 L524.9 370.5 L526.4 370.6 L527.9 370.5 L529.4 370.5 L530.9 370.4 L532.4 370.5 L533.9 370.5 L535.5 370.6 L537.0 370.7 L538.5 370.6 L540.0 370.6 L541.5 370.5 L543.0 370.5 L544.5 370.6 L546.0 370.6 L547.5 370.6 L549.0 370.5 L550.5 370.5 L552.0 370.5 L553.5 370.6 L555.0 370.6 L556.5 370.5 L558.0 370.5 L559.5 370.5 L561.0 370.4 L562.5 370.4 L564.0 370.4 L565.5 370.5 L567.0 370.4 L568.5 370.5 L570.0 370.5 L571.5 370.5 L573.0 370.4 L574.5 370.4 L576.0 370.4 L577.5 370.4 L579.0 370.5 L580.5 370.5 L582.0 370.6 L583.5 370.6 L585.0 370.6 L586.5 370.6 L588.0 370.5 L589.5 370.5 L591.0 370.6 L592.5 370.5 L594.0 370.5 L595.5 370.5 L597.0 370.6 L598.6 370.6 L600.1 370.5 L601.6 370.4 L603.1 370.5 L604.6 370.5 L606.1 370.5 L607.6 370.5 L609.1 370.5 L610.6 371.6 L612.1 371.0 L613.6 369.8 L615.1 368.7 L616.6 368.2 L618.1 369.9 L619.6 371.5 L621.1 378.4 L622.6 387.1 L624.1 394.3 L625.6 400.3 L627.1 398.4 L628.6 394.4 L630.1 384.8 L631.6 379.0 L633.1 376.7 L634.6 376.1 L636.1 375.6 L637.6 374.3 L639.1 372.1 L640.6 372.2 L642.1 372.5 L643.6 371.6 L645.1 370.5 L646.6 370.5 L648.1 370.5 L649.6 370.5 L651.1 370.4 L652.6 370.4 L654.1 370.5 L655.6 370.5 L657.1 370.6 L658.6 370.6 L660.1 370.5 L661.7 370.6 L663.2 370.5 L664.7 370.0 L666.2 368.7 L667.7 367.4 L669.2 364.7 L670.7 359.7 L672.2 350.3 L673.7 349.5 L675.2 345.6 L676.7 347.1 L678.2 349.7 L679.7 352.3 L681.2 355.2 L682.7 358.2 L684.2 361.1 L685.7 365.1 L687.2 369.6 L688.7 369.9 L690.2 370.1 L691.7 370.5 L693.2 370.8 L694.7 371.1 L696.2 371.4 L697.7 371.5 L699.2 371.0 L700.7 370.4 L702.2 370.4 L703.7 370.5 L705.2 370.4 L706.7 370.5 L708.2 370.5 L709.7 370.5 L711.2 370.5 L712.7 370.5 L714.2 370.5 L715.7 370.5 L717.2 370.5 L718.7 370.5 L720.2 370.5 L721.7 370.5 L723.2 370.6 L724.8 370.5 L726.3 370.5 L727.8 370.4 L729.3 370.5 L730.8 370.4 L732.3 370.5 L733.8 370.5 L735.3 370.7 L736.8 370.6 L738.3 370.6 L739.8 370.5 L741.3 370.5 L742.8 370.6 L744.3 370.6 L745.8 370.6 L747.3 370.5 L748.8 370.6 L750.3 370.6 L751.8 370.5 L753.3 370.5 L754.8 370.4 L756.3 370.5 L757.8 370.5 L759.3 370.4 L760.8 370.4 L762.3 370.5 L763.8 370.5 L765.3 370.6 L766.8 370.6 L768.3 370.6 L769.8 370.7 L771.3 370.7 L772.8 370.7 L774.3 370.5 L775.8 370.4 L777.3 370.4 L778.8 370.4 L780.3 370.6 L781.8 370.5 L783.3 370.6 L784.8 370.5 L786.3 370.6 L787.8 370.4 L789.4 370.4 L790.9 370.4 L792.4 370.5 L793.9 370.5 L795.4 370.5 L796.9 370.5 L798.4 370.5 L799.9 370.6 L801.4 370.6 L802.9 370.6 L804.4 370.6 L805.9 370.5 L807.4 370.4 L808.9 370.4 L810.4 370.5 L811.9 370.6 L813.4 370.5 L814.9 370.5 L816.4 370.5 L817.9 370.5 L819.4 370.5 L820.9 370.5 L822.4 370.6 L823.9 370.6 L825.4 370.4 L826.9 370.4 L828.4 370.4 L829.9 370.5 L831.4 370.6 L832.9 370.5 L834.4 370.5 L835.9 370.4 L837.4 370.5 L838.9 370.5 L840.4 370.7 L841.9 370.6 L843.4 370.6 L844.9 370.5 L846.4 370.5 L847.9 370.5 L849.4 370.4 L850.9 370.4 L852.5 370.5 L854.0 370.5 L855.5 370.6 L857.0 370.6 L858.5 370.6 L860.0 370.6 L861.5 370.5 L863.0 370.5 L864.5 370.5 L866.0 370.6 L867.5 370.6 L869.0 370.5 L870.5 370.4 L872.0 370.4 L873.5 370.4 L875.0 370.5 L876.5 370.6 L878.0 370.6 L879.5 370.6 L881.0 370.6 L882.5 370.6 L884.0 370.6 L885.5 370.5 L887.0 370.5 L888.5 370.5 L890.0 370.5 L891.5 370.5 L893.0 370.5 L894.5 370.6 L896.0 370.5 L897.5 370.6 L899.0 370.5 L900.5 370.5 L902.0 370.5 L903.5 370.5 L905.0 370.6 L906.5 370.6 L908.0 370.6 L909.5 370.5 L911.0 370.5 L912.5 370.4 L914.0 370.4 L915.6 370.5 L917.1 370.5 L918.6 370.6 L920.1 370.6 L921.6 370.6 L923.1 370.6 L924.6 370.6 L926.1 370.5 L927.6 370.6 L929.1 370.5 L930.6 370.5 L932.1 370.6 L933.6 370.6 L935.1 370.6 L936.6 370.5 L938.1 370.4 L939.6 370.5 L941.1 370.5 L942.6 370.6 L944.1 370.6 L945.6 370.7 L947.1 370.6 L948.6 370.6 L950.1 370.5 L951.6 370.6 L953.1 370.6 L954.6 370.5 L956.1 370.6 L957.6 370.6 L959.1 370.6 L960.6 370.6 L962.1 370.6 L963.6 370.6 L965.1 370.6 L966.6 370.6 L968.1 370.6 L969.6 370.6 L971.1 370.5 L972.6 370.4 L974.1 370.4 L975.6 370.4 L977.1 370.5 L978.7 370.4 L980.2 370.4 L981.7 370.4 L983.2 370.5 L984.7 370.5 L986.2 370.5 L987.7 370.5 L989.2 370.5 L990.7 370.4 L992.2 370.4 L993.7 370.5 L995.2 370.6 L996.7 370.6 L998.2 370.5 L999.7 370.4 L1001.2 370.4 L1002.7 370.4 L1004.2 370.4 L1005.7 370.4 L1007.2 370.5 L1008.7 370.5 L1010.2 370.5 L1011.7 370.5 L1013.2 370.4 L1014.7 370.4 L1016.2 370.5 L1017.7 370.6 L1019.2 370.6 L1020.7 370.6 L1022.2 370.5 L1023.7 370.6 L1025.2 370.6 L1026.7 370.6 L1028.2 370.5 L1029.7 370.5 L1031.2 370.5 L1032.7 370.4 L1034.2 370.4 L1035.7 370.5 L1037.2 370.5 L1038.7 370.5 L1040.2 370.5 L1041.8 370.5 L1043.3 370.5 L1044.8 370.5 L1046.3 370.6 L1047.8 370.6 L1049.3 370.5 L1050.8 370.4 L1052.3 370.4 L1053.8 370.5 L1055.3 370.6 L1056.8 370.5 L1058.3 370.5 L1059.8 370.4 L1061.3 370.6 L1062.8 370.5 L1064.3 370.6 L1065.8 370.5 L1067.3 370.5 L1068.8 370.4 L1070.3 370.4 L1071.8 370.4 L1073.3 370.5 L1074.8 370.6 L1076.3 370.6 L1077.8 370.5 L1079.3 370.5 L1080.8 370.4 L1082.3 370.5 L1083.8 370.5 L1085.3 370.6 L1086.8 370.5 L1088.3 370.4 L1089.8 370.4 L1091.3 370.3 L1092.8 370.4 L1094.3 370.5 L1095.8 370.5 L1097.3 370.5 L1098.8 370.5 L1100.3 370.5 L1101.8 370.5 L1103.3 370.4 L1104.9 370.4 L1106.4 370.4 L1107.9 370.5 L1109.4 370.6 L1110.9 370.5 L1112.4 370.5 L1113.9 370.4 L1115.4 370.5 L1116.9 370.5 L1118.4 370.5 L1119.9 370.5 L1121.4 370.5 L1122.9 370.5 L1124.4 370.5 L1125.9 370.5 L1127.4 370.5 L1128.9 370.5 L1130.4 370.5 L1131.9 370.5 L1133.4 370.5 L1134.9 370.5 L1136.4 370.4 L1137.9 370.4 L1139.4 370.4 L1140.9 370.4 L1142.4 370.4 L1143.9 370.4 L1145.4 370.5 L1146.9 370.5 L1148.4 370.5 L1149.9 370.5 L1151.4 370.6 L1152.9 370.5 L1154.4 370.5 L1155.9 370.5 L1157.4 370.6 L1158.9 370.5 L1160.4 370.5 L1161.9 370.5 L1163.4 370.5 L1164.9 370.5 L1166.4 370.5 L1167.9 370.6 L1169.5 370.6 L1171.0 370.6 L1172.5 370.5 L1174.0 370.5 L1175.5 370.5 L1177.0 370.5 L1178.5 370.5 L1180.0 370.5 L1181.5 370.6 L1183.0 370.6 L1184.5 370.6 L1186.0 370.6 L1187.5 370.5 L1189.0 370.5 L1190.5 370.5 L1192.0 370.5 L1193.5 370.5 L1195.0 370.5 L1196.5 370.5 L1198.0 370.6 L1199.5 370.6 L1201.0 370.6 L1202.5 370.5 L1204.0 370.6 L1205.5 370.6 L1207.0 370.6 L1208.5 370.5 L1210.0 370.5 L1211.5 370.5 L1213.0 370.5 L1214.5 370.5 L1216.0 370.5 L1217.5 370.5 L1219.0 370.6 L1220.5 370.5 L1222.0 370.6 L1223.5 370.5 L1225.0 370.5 L1226.5 370.5 L1228.0 370.5 L1229.5 370.5 L1231.0 370.5 L1232.6 370.5 L1234.1 370.5 L1235.6 370.4 L1237.1 370.5 L1238.6 370.4 L1240.1 370.4 L1241.6 370.4" stroke="#008000" stroke-width="2" fill="none" stroke-linejoin="bevel"/>
<rect x="1154.5" y="339.5" width="129.0" height="86" fill="#fff" fill-opacity="0.95" stroke="#e5e5e5" stroke-opacity="0.5" stroke-width="1"/>
<path d="M1164.5 359.5H1184.5" stroke="#90ee90" stroke-width="2"/>
<text x="1189.5" y="363.1" font-size="13.3" fill="#444">X-Axis (deg/s)</text>
<path d="M1164.5 382.5H1184.5" stroke="#66ee33" stroke-width="2"/>
<text x="1189.5" y="386.1" font-size="13.3" fill="#444">Y-Axis (deg/s)</text>
<path d="M1164.5 405.5H1184.5" stroke="#008000" stroke-width="2"/>
<text x="1189.5" y="409.1" font-size="13.3" fill="#444">Z-Axis (deg/s)</text>
</g>
<path d="M138.5 329.0V421.0M138.0 420.5H1294.0M167.5 420.5V425.0M197.5 418.0V427.0M227.5 420.5V425.0M258.5 420.5V425.0M288.5 420.5V425.0M319.5 420.5V425.0M349.5 418.0V427.0M380.5 420.5V425.0M410.5 420.5V425.0M441.5 420.5V425.0M471.5 420.5V425.0M502.5 418.0V427.0M532.5 420.5V425.0M562.5 420.5V425.0M593.5 420.5V425.0M623.5 420.5V425.0M654.5 418.0V427.0M684.5 420.5V425.0M715.5 420.5V425.0M745.5 420.5V425.0M776.5 420.5V425.0M806.5 418.0V427.0M837.5 420.5V425.0M867.5 420.5V425.0M898.5 420.5V425.0M928.5 420.5V425.0M958.5 418.0V427.0M989.5 420.5V425.0M1019.5 420.5V425.0M1050.5 420.5V425.0M1080.5 420.5V425.0M1111.5 418.0V427.0M1141.5 420.5V425.0M1172.5 420.5V425.0M1202.5 420.5V425.0M1233.5 420.5V425.0M1263.5 418.0V427.0M134.0 417.5H138.5M134.0 413.5H138.5M132.0 409.5H141.0M134.0 405.5H138.5M134.0 401.5H138.5M134.0 397.5H138.5M134.0 393.5H138.5M132.0 389.5H141.0M134.0 385.5H138.5M134.0 382.5H138.5M134.0 378.5H138.5M134.0 374.5H138.5M132.0 370.5H141.0M134.0 366.5H138.5M134.0 362.5H138.5M134.0 358.5H138.5M134.0 354.5H138.5M132.0 350.5H141.0M134.0 346.5H138.5M134.0 343.5H138.5M134.0 339.5H138.5M134.0 335.5H138.5M132.0 331.5H141.0" stroke="#000" stroke-width="1" fill="none"/>
<text x="197.5" y="440" font-size="11" fill="#444" text-anchor="middle">0</text>
<text x="349.8" y="440" font-size="11" fill="#444" text-anchor="middle">5</text>
<text x="502.1" y="440" font-size="11" fill="#444" text-anchor="middle">10</text>
<text x="654.4" y="440" font-size="11" fill="#444" text-anchor="middle">15</text>
<text x="806.6" y="440" font-size="11" fill="#444" text-anchor="middle">20</text>
<text x="958.9" y="440" font-size="11" fill="#444" text-anchor="middle">25</text>
<text x="1111.2" y="440" font-size="11" fill="#444" text-anchor="middle">30</text>
<text x="1263.5" y="440" font-size="11" fill="#444" text-anchor="middle">35</text>
<text x="127" y="334.1" font-size="11" fill="#444" text-anchor="end">400</text>
<text x="127" y="353.6" font-size="11" fill="#444" text-anchor="end">200</text>
<text x="127" y="373.2" font-size="11" fill="#444" text-anchor="end">0</text>
<text x="127" y="392.7" font-size="11" fill="#444" text-anchor="end">-200</text>
<text x="127" y="412.2" font-size="11" fill="#444" text-anchor="end">-400</text>
<text x="139" y="322" font-size="13.3" font-weight="bold" fill="#444">Gyroscope</text>
<text x="716.5" y="458.7" font-size="13.3" font-style="italic" fill="#444" text-anchor="middle">Time (s)</text>
<clipPath id="ylc1"><rect x="60" y="301" width="60" height="167"/></clipPath>
<g clip-path="url(#ylc1)">
<text transform="translate(101.2,468) rotate(-90)" x="0" y="0" font-size="13.3" font-style="italic" fill="#444">:Degrees per Seconds (deg/s))</text>
</g>
<g transform="translate(1308,339)"><path d="M-2.9 -7.95 L0.12 -10 L3.13 -7.35 L-2.77 -3.37Z" fill="#00b04f" transform="rotate(0)"/><path d="M-2.9 -7.95 L0.12 -10 L3.13 -7.35 L-2.77 -3.37Z" fill="#00a5a5" transform="rotate(45)"/><path d="M-2.9 -7.95 L0.12 -10 L3.13 -7.35 L-2.77 -3.37Z" fill="#3d9ce0" transform="rotate(90)"/><path d="M-2.9 -7.95 L0.12 -10 L3.13 -7.35 L-2.77 -3.37Z" fill="#8c0090" transform="rotate(135)"/><path d="M-2.9 -7.95 L0.12 -10 L3.13 -7.35 L-2.77 -3.37Z" fill="#ee0060" transform="rotate(180)"/><path d="M-2.9 -7.95 L0.12 -10 L3.13 -7.35 L-2.77 -3.37Z" fill="#ee4a22" transform="rotate(225)"/><path d="M-2.9 -7.95 L0.12 -10 L3.13 -7.35 L-2.77 -3.37Z" fill="#f6a423" transform="rotate(270)"/><path d="M-2.9 -7.95 L0.12 -10 L3.13 -7.35 L-2.77 -3.37Z" fill="#9ddc1e" transform="rotate(315)"/></g>
<rect x="1293" y="354" width="2" height="30" fill="#2a98de"/>
<g transform="translate(1301,361)" fill="#a1a6a9"><path d="M8.5 0 L12 4 L9.7 4 L9.7 7.3 L13 7.3 L13 5 L17 8.5 L13 12 L13 9.7 L9.7 9.7 L9.7 13 L12 13 L8.5 17 L5 13 L7.3 13 L7.3 9.7 L4 9.7 L4 12 L0 8.5 L4 5 L4 7.3 L7.3 7.3 L7.3 4 L5 4Z"/></g>
<g transform="translate(1301,391)"><path d="M0.5 8 V16.5 H16.5 V12 M0.5 6 V0.5 H6" fill="none" stroke="#a1a6a9" stroke-width="1" stroke-dasharray="2 1.3"/>
<circle cx="11.3" cy="5.6" r="4.4" fill="#fff" stroke="#a1a6a9" stroke-width="1.9"/><path d="M8.2 8.7 L3.3 13.6" stroke="#a1a6a9" stroke-width="2.2"/></g>
<path d="M1303 414.5H1313" stroke="#cfd2d4" stroke-width="1"/>
<clipPath id="clip2"><rect x="138.5" y="494.5" width="1155.0" height="91.0"/></clipPath>
<path d="M197.5 494.5V585.5M349.5 494.5V585.5M502.5 494.5V585.5M654.5 494.5V585.5M806.5 494.5V585.5M958.5 494.5V585.5M1111.5 494.5V585.5M1263.5 494.5V585.5M138.5 501.5H1293.5M138.5 513.5H1293.5M138.5 525.5H1293.5M138.5 537.5H1293.5M138.5 549.5H1293.5M138.5 561.5H1293.5M138.5 573.5H1293.5" stroke="#e5e5e5" stroke-width="1" fill="none"/>
<rect x="138.5" y="494.5" width="1155.0" height="91.0" fill="none" stroke="#e5e5e5" stroke-width="1"/>
<g clip-path="url(#clip2)">
<path d="M191.4 552.5 L192.9 552.5 L194.4 552.5 L195.9 552.4 L197.4 552.4 L198.9 552.5 L200.4 552.4 L201.9 552.5 L203.4 552.4 L204.9 552.5 L206.4 552.4 L207.9 552.4 L209.4 552.4 L210.9 552.4 L212.4 552.4 L213.9 552.4 L215.4 552.4 L216.9 552.4 L218.5 552.4 L220.0 552.4 L221.5 552.4 L223.0 552.5 L224.5 552.4 L226.0 552.5 L227.5 552.4 L229.0 552.4 L230.5 552.4 L232.0 552.4 L233.5 552.4 L235.0 552.5 L236.5 552.5 L238.0 552.5 L239.5 552.4 L241.0 552.3 L242.5 552.3 L244.0 552.3 L245.5 552.3 L247.0 552.3 L248.5 552.4 L250.0 552.4 L251.5 552.4 L253.0 552.4 L254.5 552.5 L256.0 552.5 L257.5 552.5 L259.0 552.4 L260.5 552.5 L262.0 552.4 L263.5 552.4 L265.0 552.3 L266.5 552.4 L268.0 552.5 L269.5 552.4 L271.0 552.4 L272.5 552.4 L274.0 552.4 L275.5 552.5 L277.0 552.5 L278.5 552.6 L280.0 552.5 L281.6 552.5 L283.1 552.5 L284.6 552.5 L286.1 552.4 L287.6 552.4 L289.1 552.4 L290.6 552.4 L292.1 552.4 L293.6 552.3 L295.1 552.4 L296.6 552.3 L298.1 552.5 L299.6 552.5 L301.1 552.6 L302.6 552.5 L304.1 552.5 L305.6 552.5 L307.1 552.5 L308.6 552.5 L310.1 552.4 L311.6 552.5 L313.1 552.4 L314.6 552.5 L316.1 552.4 L317.6 552.4 L319.1 552.4 L320.6 552.4 L322.1 552.4 L323.6 552.4 L325.1 552.4 L326.6 552.5 L328.1 552.4 L329.6 552.4 L331.1 552.4 L332.6 552.4 L334.1 552.4 L335.6 552.4 L337.1 552.4 L338.6 552.4 L340.1 552.4 L341.6 552.4 L343.1 552.5 L344.7 552.4 L346.2 552.4 L347.7 552.5 L349.2 552.5 L350.7 552.4 L352.2 552.4 L353.7 552.4 L355.2 552.4 L356.7 552.5 L358.2 552.4 L359.7 552.5 L361.2 552.4 L362.7 552.5 L364.2 552.5 L365.7 552.4 L367.2 552.4 L368.7 552.4 L370.2 552.5 L371.7 552.5 L373.2 552.5 L374.7 552.5 L376.2 552.5 L377.7 552.5 L379.2 552.4 L380.7 552.4 L382.2 552.4 L383.7 552.5 L385.2 552.5 L386.7 552.4 L388.2 552.4 L389.7 552.4 L391.2 552.4 L392.7 552.4 L394.2 552.4 L395.7 552.4 L397.2 552.4 L398.7 552.5 L400.2 552.6 L401.7 552.6 L403.2 552.5 L404.7 552.5 L406.2 552.5 L407.8 552.4 L409.3 552.4 L410.8 552.5 L412.3 552.5 L413.8 552.4 L415.3 552.4 L416.8 552.4 L418.3 552.4 L419.8 552.5 L421.3 552.5 L422.8 552.4 L424.3 552.4 L425.8 552.3 L427.3 552.4 L428.8 552.4 L430.3 552.5 L431.8 552.6 L433.3 552.5 L434.8 552.4 L436.3 552.4 L437.8 552.4 L439.3 552.4 L440.8 552.5 L442.3 552.5 L443.8 552.4 L445.3 552.4 L446.8 552.4 L448.3 552.4 L449.8 552.4 L451.3 552.4 L452.8 552.4 L454.3 552.4 L455.8 552.4 L457.3 552.4 L458.8 552.3 L460.3 552.4 L461.8 552.4 L463.3 552.4 L464.8 552.4 L466.3 552.5 L467.8 552.5 L469.3 552.4 L470.8 552.3 L472.4 552.3 L473.9 552.4 L475.4 552.5 L476.9 552.5 L478.4 552.5 L479.9 552.4 L481.4 552.4 L482.9 552.4 L484.4 552.4 L485.9 552.4 L487.4 552.4 L488.9 552.4 L490.4 552.5 L491.9 552.5 L493.4 552.5 L494.9 552.4 L496.4 552.5 L497.9 552.5 L499.4 552.5 L500.9 552.4 L502.4 552.5 L503.9 552.5 L505.4 552.4 L506.9 552.4 L508.4 552.4 L509.9 552.5 L511.4 552.5 L512.9 552.5 L514.4 552.4 L515.9 552.4 L517.4 552.4 L518.9 552.4 L520.4 552.4 L521.9 552.4 L523.4 552.4 L524.9 552.4 L526.4 552.4 L527.9 552.5 L529.4 552.5 L530.9 552.5 L532.4 552.5 L533.9 552.5 L535.5 552.5 L537.0 552.5 L538.5 552.5 L540.0 552.6 L541.5 552.6 L543.0 552.6 L544.5 552.5 L546.0 552.4 L547.5 552.4 L549.0 552.4 L550.5 552.5 L552.0 552.5 L553.5 552.4 L555.0 552.4 L556.5 552.4 L558.0 552.5 L559.5 552.5 L561.0 552.5 L562.5 552.5 L564.0 552.5 L565.5 552.4 L567.0 552.4 L568.5 552.4 L570.0 552.5 L571.5 552.5 L573.0 552.4 L574.5 552.4 L576.0 552.4 L577.5 552.5 L579.0 552.4 L580.5 552.4 L582.0 552.4 L583.5 552.4 L585.0 552.4 L586.5 552.4 L588.0 552.4 L589.5 552.4 L591.0 552.4 L592.5 552.4 L594.0 552.4 L595.5 552.4 L597.0 552.4 L598.6 552.4 L600.1 552.4 L601.6 552.5 L603.1 552.5 L604.6 552.5 L606.1 552.5 L607.6 552.5 L609.1 552.5 L610.6 552.5 L612.1 552.5 L613.6 552.5 L615.1 552.5 L616.6 552.5 L618.1 552.4 L619.6 552.4 L621.1 552.5 L622.6 552.5 L624.1 552.5 L625.6 552.4 L627.1 552.4 L628.6 552.4 L630.1 552.4 L631.6 552.4 L633.1 552.5 L634.6 552.5 L636.1 552.5 L637.6 552.5 L639.1 552.5 L640.6 552.5 L642.1 552.5 L643.6 552.5 L645.1 552.4 L646.6 552.4 L648.1 552.4 L649.6 552.5 L651.1 552.5 L652.6 552.5 L654.1 552.4 L655.6 552.4 L657.1 552.4 L658.6 552.4 L660.1 552.5 L661.7 552.5 L663.2 552.5 L664.7 552.4 L666.2 552.4 L667.7 552.4 L669.2 552.5 L670.7 552.5 L672.2 552.5 L673.7 552.5 L675.2 552.4 L676.7 552.4 L678.2 552.3 L679.7 552.4 L681.2 552.4 L682.7 552.4 L684.2 552.4 L685.7 552.5 L687.2 552.5 L688.7 552.4 L690.2 552.4 L691.7 552.4 L693.2 552.5 L694.7 552.5 L696.2 552.5 L697.7 552.4 L699.2 552.5 L700.7 552.5 L702.2 552.5 L703.7 552.4 L705.2 552.4 L706.7 552.4 L708.2 552.5 L709.7 552.5 L711.2 552.4 L712.7 552.4 L714.2 552.4 L715.7 552.4 L717.2 552.4 L718.7 552.4 L720.2 552.4 L721.7 552.4 L723.2 552.4 L724.8 552.4 L726.3 552.4 L727.8 552.4 L729.3 552.3 L730.8 552.4 L732.3 552.4 L733.8 552.4 L735.3 552.5 L736.8 552.5 L738.3 552.5 L739.8 552.4 L741.3 552.4 L742.8 552.4 L744.3 552.4 L745.8 552.4 L747.3 552.4 L748.8 552.4 L750.3 552.5 L751.8 552.5 L753.3 552.4 L754.8 552.4 L756.3 552.4 L757.8 552.4 L759.3 552.4 L760.8 552.4 L762.3 552.3 L763.8 552.4 L765.3 552.5 L766.8 552.6 L768.3 552.6 L769.8 552.5 L771.3 552.5 L772.8 552.5 L774.3 552.5 L775.8 552.4 L777.3 552.4 L778.8 552.4 L780.3 552.5 L781.8 552.5 L783.3 552.6 L784.8 552.6 L786.3 552.6 L787.8 552.5 L789.4 552.4 L790.9 552.4 L792.4 552.4 L793.9 552.4 L795.4 552.5 L796.9 552.5 L798.4 552.5 L799.9 552.5 L801.4 552.5 L802.9 552.5 L804.4 552.5 L805.9 552.5 L807.4 552.5 L808.9 552.4 L810.4 552.4 L811.9 552.5 L813.4 552.5 L814.9 552.5 L816.4 552.4 L817.9 552.4 L819.4 552.4 L820.9 552.3 L822.4 552.4 L823.9 552.5 L825.4 552.5 L826.9 552.5 L828.4 552.5 L829.9 552.4 L831.4 552.3 L832.9 552.3 L834.4 552.4 L835.9 552.4 L837.4 552.4 L838.9 552.4 L840.4 552.4 L841.9 552.3 L843.4 552.3 L844.9 552.4 L846.4 552.4 L847.9 552.4 L849.4 552.4 L850.9 552.3 L852.5 552.4 L854.0 552.4 L855.5 552.5 L857.0 552.5 L858.5 552.5 L860.0 552.5 L861.5 552.5 L863.0 552.5 L864.5 552.5 L866.0 552.5 L867.5 552.5 L869.0 552.5 L870.5 552.5 L872.0 552.4 L873.5 552.4 L875.0 552.4 L876.5 552.4 L878.0 552.5 L879.5 552.5 L881.0 552.5 L882.5 552.4 L884.0 552.4 L885.5 552.4 L887.0 552.5 L888.5 552.5 L890.0 552.5 L891.5 552.4 L893.0 552.4 L894.5 552.4 L896.0 552.4 L897.5 552.4 L899.0 552.4 L900.5 552.5 L902.0 552.4 L903.5 552.5 L905.0 552.4 L906.5 552.4 L908.0 552.4 L909.5 552.4 L911.0 552.4 L912.5 552.4 L914.0 552.4 L915.6 552.5 L917.1 552.5 L918.6 552.5 L920.1 552.5 L921.6 552.5 L923.1 552.5 L924.6 552.4 L926.1 552.4 L927.6 552.3 L929.1 552.4 L930.6 552.4 L932.1 552.6 L933.6 552.6 L935.1 552.6 L936.6 552.6 L938.1 552.5 L939.6 552.5 L941.1 552.5 L942.6 552.5 L944.1 552.5 L945.6 552.5 L947.1 552.4 L948.6 552.4 L950.1 552.4 L951.6 552.4 L953.1 552.4 L954.6 552.4 L956.1 552.4 L957.6 552.4 L959.1 552.5 L960.6 552.5 L962.1 552.5 L963.6 552.4 L965.1 552.4 L966.6 552.4 L968.1 552.4 L969.6 552.4 L971.1 552.4 L972.6 552.4 L974.1 552.4 L975.6 552.4 L977.1 552.4 L978.7 552.4 L980.2 552.4 L981.7 552.5 L983.2 552.5 L984.7 552.5 L986.2 552.4 L987.7 552.5 L989.2 552.5 L990.7 552.4 L992.2 552.4 L993.7 552.4 L995.2 552.4 L996.7 552.4 L998.2 552.4 L999.7 552.3 L1001.2 552.4 L1002.7 552.5 L1004.2 552.5 L1005.7 552.5 L1007.2 552.4 L1008.7 552.5 L1010.2 552.4 L1011.7 552.5 L1013.2 552.4 L1014.7 552.4 L1016.2 552.4 L1017.7 552.4 L1019.2 552.4 L1020.7 552.5 L1022.2 552.5 L1023.7 552.5 L1025.2 552.5 L1026.7 552.5 L1028.2 552.4 L1029.7 552.5 L1031.2 552.4 L1032.7 552.5 L1034.2 552.4 L1035.7 552.5 L1037.2 552.5 L1038.7 552.5 L1040.2 552.4 L1041.8 552.4 L1043.3 552.4 L1044.8 552.4 L1046.3 552.4 L1047.8 552.5 L1049.3 552.5 L1050.8 552.5 L1052.3 552.5 L1053.8 552.4 L1055.3 552.4 L1056.8 552.5 L1058.3 552.4 L1059.8 552.4 L1061.3 552.4 L1062.8 552.5 L1064.3 552.4 L1065.8 552.4 L1067.3 552.4 L1068.8 552.4 L1070.3 552.4 L1071.8 552.4 L1073.3 552.4 L1074.8 552.4 L1076.3 552.3 L1077.8 552.4 L1079.3 552.4 L1080.8 552.4 L1082.3 552.4 L1083.8 552.5 L1085.3 552.6 L1086.8 552.5 L1088.3 552.5 L1089.8 552.4 L1091.3 552.5 L1092.8 552.4 L1094.3 552.4 L1095.8 552.5 L1097.3 552.5 L1098.8 552.5 L1100.3 552.4 L1101.8 552.4 L1103.3 552.4 L1104.9 552.5 L1106.4 552.5 L1107.9 552.5 L1109.4 552.4 L1110.9 552.4 L1112.4 552.4 L1113.9 552.4 L1115.4 552.4 L1116.9 552.4 L1118.4 552.4 L1119.9 552.5 L1121.4 552.5 L1122.9 552.5 L1124.4 552.4 L1125.9 552.4 L1127.4 552.4 L1128.9 552.4 L1130.4 552.4 L1131.9 552.4 L1133.4 552.4 L1134.9 552.5 L1136.4 552.5 L1137.9 552.5 L1139.4 552.4 L1140.9 552.4 L1142.4 552.5 L1143.9 552.5 L1145.4 552.4 L1146.9 552.4 L1148.4 552.4 L1149.9 552.4 L1151.4 552.5 L1152.9 552.5 L1154.4 552.5 L1155.9 552.5 L1157.4 552.5 L1158.9 552.4 L1160.4 552.5 L1161.9 552.5 L1163.4 552.5 L1164.9 552.5 L1166.4 552.4 L1167.9 552.4 L1169.5 552.4 L1171.0 552.4 L1172.5 552.4 L1174.0 552.4 L1175.5 552.5 L1177.0 552.5 L1178.5 552.4 L1180.0 552.5 L1181.5 552.5 L1183.0 552.6 L1184.5 552.5 L1186.0 552.4 L1187.5 552.4 L1189.0 552.4 L1190.5 552.5 L1192.0 552.5 L1193.5 552.5 L1195.0 552.4 L1196.5 552.4 L1198.0 552.4 L1199.5 552.4 L1201.0 552.4 L1202.5 552.4 L1204.0 552.4 L1205.5 552.4 L1207.0 552.5 L1208.5 552.5 L1210.0 552.5 L1211.5 552.4 L1213.0 552.5 L1214.5 552.5 L1216.0 552.5 L1217.5 552.4 L1219.0 552.4 L1220.5 552.5 L1222.0 552.4 L1223.5 552.4 L1225.0 552.4 L1226.5 552.5 L1228.0 552.5 L1229.5 552.5 L1231.0 552.5 L1232.6 552.4 L1234.1 552.4 L1235.6 552.4 L1237.1 552.4 L1238.6 552.3 L1240.1 552.4 L1241.6 552.4" stroke="#add8e6" stroke-width="2" fill="none" stroke-linejoin="bevel"/>
<path d="M191.4 556.8 L192.9 556.5 L194.4 556.8 L195.9 556.9 L197.4 556.7 L198.9 556.8 L200.4 556.7 L201.9 557.1 L203.4 557.2 L204.9 556.9 L206.4 556.7 L207.9 556.5 L209.4 556.8 L210.9 556.8 L212.4 556.8 L213.9 556.9 L215.4 557.4 L216.9 557.3 L218.5 556.9 L220.0 556.9 L221.5 557.5 L223.0 558.0 L224.5 557.5 L226.0 557.3 L227.5 557.0 L229.0 556.8 L230.5 557.0 L232.0 557.1 L233.5 556.8 L235.0 556.6 L236.5 556.9 L238.0 557.2 L239.5 556.5 L241.0 556.5 L242.5 557.3 L244.0 557.1 L245.5 556.9 L247.0 556.7 L248.5 556.8 L250.0 556.9 L251.5 556.4 L253.0 556.6 L254.5 557.5 L256.0 557.4 L257.5 556.5 L259.0 556.8 L260.5 557.2 L262.0 557.4 L263.5 557.1 L265.0 556.3 L266.5 556.5 L268.0 557.0 L269.5 557.2 L271.0 557.3 L272.5 556.9 L274.0 556.4 L275.5 556.7 L277.0 557.2 L278.5 557.3 L280.0 557.0 L281.6 556.6 L283.1 556.9 L284.6 557.4 L286.1 557.9 L287.6 557.6 L289.1 557.3 L290.6 557.1 L292.1 556.6 L293.6 556.7 L295.1 556.7 L296.6 556.7 L298.1 556.6 L299.6 556.8 L301.1 556.9 L302.6 557.0 L304.1 557.1 L305.6 557.0 L307.1 557.3 L308.6 557.4 L310.1 557.1 L311.6 557.0 L313.1 557.0 L314.6 557.1 L316.1 556.9 L317.6 557.1 L319.1 557.6 L320.6 557.7 L322.1 557.1 L323.6 556.5 L325.1 556.5 L326.6 556.9 L328.1 557.2 L329.6 557.1 L331.1 556.9 L332.6 557.3 L334.1 557.2 L335.6 557.1 L337.1 557.5 L338.6 556.9 L340.1 556.7 L341.6 556.9 L343.1 556.6 L344.7 556.3 L346.2 556.1 L347.7 556.7 L349.2 557.0 L350.7 557.0 L352.2 556.8 L353.7 556.6 L355.2 556.8 L356.7 556.5 L358.2 556.2 L359.7 556.7 L361.2 557.1 L362.7 556.8 L364.2 556.7 L365.7 557.1 L367.2 557.6 L368.7 557.2 L370.2 556.9 L371.7 557.7 L373.2 557.5 L374.7 557.4 L376.2 556.7 L377.7 556.7 L379.2 557.3 L380.7 556.5 L382.2 556.7 L383.7 557.4 L385.2 557.5 L386.7 557.6 L388.2 557.3 L389.7 556.8 L391.2 556.7 L392.7 556.9 L394.2 557.1 L395.7 557.0 L397.2 556.9 L398.7 557.2 L400.2 557.3 L401.7 557.6 L403.2 558.1 L404.7 557.2 L406.2 556.6 L407.8 556.5 L409.3 556.4 L410.8 556.8 L412.3 556.9 L413.8 556.5 L415.3 556.7 L416.8 557.1 L418.3 557.1 L419.8 556.8 L421.3 557.1 L422.8 557.3 L424.3 557.2 L425.8 557.3 L427.3 557.0 L428.8 556.8 L430.3 556.9 L431.8 557.1 L433.3 557.4 L434.8 556.9 L436.3 557.1 L437.8 557.0 L439.3 557.0 L440.8 557.3 L442.3 556.8 L443.8 556.5 L445.3 556.6 L446.8 556.9 L448.3 556.8 L449.8 556.9 L451.3 556.8 L452.8 556.6 L454.3 557.0 L455.8 556.5 L457.3 556.6 L458.8 556.7 L460.3 556.1 L461.8 556.2 L463.3 556.8 L464.8 557.1 L466.3 557.1 L467.8 557.2 L469.3 557.7 L470.8 557.6 L472.4 557.6 L473.9 557.4 L475.4 556.9 L476.9 557.0 L478.4 557.4 L479.9 557.3 L481.4 557.0 L482.9 556.5 L484.4 556.8 L485.9 557.2 L487.4 556.7 L488.9 556.7 L490.4 557.2 L491.9 557.1 L493.4 557.1 L494.9 557.4 L496.4 556.8 L497.9 556.5 L499.4 557.0 L500.9 557.3 L502.4 557.6 L503.9 556.9 L505.4 556.5 L506.9 557.1 L508.4 557.5 L509.9 557.7 L511.4 557.2 L512.9 556.7 L514.4 556.6 L515.9 556.9 L517.4 556.9 L518.9 556.9 L520.4 557.5 L521.9 557.3 L523.4 556.6 L524.9 556.3 L526.4 557.0 L527.9 556.8 L529.4 556.6 L530.9 556.9 L532.4 557.2 L533.9 557.3 L535.5 557.1 L537.0 556.9 L538.5 556.9 L540.0 557.0 L541.5 557.1 L543.0 557.1 L544.5 557.2 L546.0 556.8 L547.5 556.9 L549.0 557.2 L550.5 557.2 L552.0 557.3 L553.5 557.2 L555.0 557.6 L556.5 557.2 L558.0 556.9 L559.5 557.0 L561.0 557.0 L562.5 556.6 L564.0 556.5 L565.5 556.9 L567.0 556.7 L568.5 556.7 L570.0 556.6 L571.5 556.9 L573.0 557.4 L574.5 557.6 L576.0 557.2 L577.5 556.5 L579.0 556.8 L580.5 556.6 L582.0 556.6 L583.5 556.9 L585.0 556.7 L586.5 557.0 L588.0 557.1 L589.5 557.5 L591.0 557.6 L592.5 556.8 L594.0 556.9 L595.5 556.9 L597.0 556.7 L598.6 556.7 L600.1 556.5 L601.6 557.1 L603.1 557.2 L604.6 556.7 L606.1 556.7 L607.6 556.8 L609.1 557.3 L610.6 557.0 L612.1 556.4 L613.6 556.8 L615.1 556.7 L616.6 556.5 L618.1 556.9 L619.6 556.7 L621.1 555.9 L622.6 555.4 L624.1 554.9 L625.6 554.6 L627.1 554.5 L628.6 554.6 L630.1 554.5 L631.6 554.1 L633.1 553.7 L634.6 554.0 L636.1 553.7 L637.6 553.5 L639.1 553.8 L640.6 553.7 L642.1 553.5 L643.6 553.9 L645.1 553.7 L646.6 553.4 L648.1 553.7 L649.6 554.0 L651.1 553.8 L652.6 554.0 L654.1 554.3 L655.6 554.0 L657.1 554.0 L658.6 553.9 L660.1 553.7 L661.7 554.2 L663.2 554.5 L664.7 554.2 L666.2 554.4 L667.7 554.3 L669.2 554.2 L670.7 554.4 L672.2 554.6 L673.7 555.6 L675.2 556.3 L676.7 556.8 L678.2 556.9 L679.7 556.8 L681.2 557.4 L682.7 557.4 L684.2 557.0 L685.7 556.8 L687.2 556.9 L688.7 556.6 L690.2 556.4 L691.7 556.7 L693.2 557.1 L694.7 556.7 L696.2 556.5 L697.7 557.1 L699.2 557.1 L700.7 556.7 L702.2 557.0 L703.7 556.9 L705.2 556.8 L706.7 557.5 L708.2 556.8 L709.7 556.5 L711.2 557.1 L712.7 557.1 L714.2 556.8 L715.7 556.7 L717.2 556.5 L718.7 556.6 L720.2 557.1 L721.7 556.9 L723.2 556.6 L724.8 556.6 L726.3 556.8 L727.8 557.0 L729.3 556.9 L730.8 556.9 L732.3 556.6 L733.8 556.0 L735.3 556.4 L736.8 557.5 L738.3 557.0 L739.8 556.4 L741.3 556.9 L742.8 557.3 L744.3 557.3 L745.8 557.4 L747.3 557.2 L748.8 557.0 L750.3 557.2 L751.8 556.9 L753.3 557.1 L754.8 557.4 L756.3 557.3 L757.8 557.1 L759.3 557.1 L760.8 556.9 L762.3 556.8 L763.8 556.4 L765.3 556.1 L766.8 556.9 L768.3 557.0 L769.8 556.9 L771.3 556.6 L772.8 556.9 L774.3 557.5 L775.8 557.1 L777.3 557.0 L778.8 557.1 L780.3 557.4 L781.8 557.3 L783.3 556.6 L784.8 556.5 L786.3 557.2 L787.8 557.4 L789.4 557.0 L790.9 557.0 L792.4 557.1 L793.9 557.1 L795.4 556.7 L796.9 556.3 L798.4 556.9 L799.9 557.1 L801.4 557.0 L802.9 557.5 L804.4 557.4 L805.9 556.9 L807.4 556.9 L808.9 556.7 L810.4 556.8 L811.9 556.6 L813.4 556.1 L814.9 556.8 L816.4 557.3 L817.9 557.2 L819.4 557.3 L820.9 557.0 L822.4 557.1 L823.9 557.3 L825.4 556.8 L826.9 556.9 L828.4 557.0 L829.9 556.8 L831.4 557.6 L832.9 557.6 L834.4 557.4 L835.9 557.3 L837.4 557.0 L838.9 557.1 L840.4 557.1 L841.9 556.8 L843.4 556.5 L844.9 556.8 L846.4 556.6 L847.9 556.4 L849.4 556.9 L850.9 557.0 L852.5 556.6 L854.0 556.5 L855.5 556.7 L857.0 556.9 L858.5 556.9 L860.0 556.9 L861.5 557.4 L863.0 557.3 L864.5 556.4 L866.0 556.5 L867.5 557.0 L869.0 557.0 L870.5 556.6 L872.0 556.8 L873.5 557.2 L875.0 556.9 L876.5 556.6 L878.0 556.7 L879.5 557.0 L881.0 557.3 L882.5 557.2 L884.0 556.5 L885.5 556.7 L887.0 556.8 L888.5 556.8 L890.0 556.8 L891.5 556.7 L893.0 556.9 L894.5 556.9 L896.0 556.8 L897.5 556.6 L899.0 556.7 L900.5 556.8 L902.0 556.8 L903.5 556.9 L905.0 556.3 L906.5 556.4 L908.0 557.3 L909.5 557.4 L911.0 557.2 L912.5 557.2 L914.0 556.9 L915.6 556.5 L917.1 556.8 L918.6 557.4 L920.1 557.3 L921.6 557.2 L923.1 557.1 L924.6 557.0 L926.1 557.0 L927.6 557.0 L929.1 557.0 L930.6 556.8 L932.1 556.6 L933.6 556.9 L935.1 557.0 L936.6 556.3 L938.1 556.4 L939.6 556.4 L941.1 556.9 L942.6 557.6 L944.1 557.3 L945.6 557.0 L947.1 556.5 L948.6 556.6 L950.1 556.9 L951.6 556.8 L953.1 556.8 L954.6 557.2 L956.1 557.3 L957.6 556.8 L959.1 556.2 L960.6 556.4 L962.1 556.8 L963.6 556.9 L965.1 557.5 L966.6 557.7 L968.1 557.4 L969.6 557.3 L971.1 557.6 L972.6 557.4 L974.1 557.0 L975.6 557.2 L977.1 557.1 L978.7 556.8 L980.2 556.7 L981.7 556.8 L983.2 556.8 L984.7 557.0 L986.2 557.1 L987.7 557.2 L989.2 557.6 L990.7 556.9 L992.2 556.9 L993.7 557.1 L995.2 557.2 L996.7 557.4 L998.2 557.1 L999.7 557.1 L1001.2 557.0 L1002.7 556.9 L1004.2 557.1 L1005.7 557.0 L1007.2 557.0 L1008.7 556.8 L1010.2 556.9 L1011.7 556.8 L1013.2 556.8 L1014.7 557.2 L1016.2 557.2 L1017.7 557.0 L1019.2 557.6 L1020.7 557.6 L1022.2 556.9 L1023.7 556.8 L1025.2 557.1 L1026.7 557.2 L1028.2 557.1 L1029.7 557.0 L1031.2 556.8 L1032.7 557.0 L1034.2 557.1 L1035.7 557.1 L1037.2 556.7 L1038.7 556.9 L1040.2 556.8 L1041.8 556.5 L1043.3 556.9 L1044.8 556.7 L1046.3 556.7 L1047.8 557.1 L1049.3 556.7 L1050.8 556.8 L1052.3 557.2 L1053.8 557.0 L1055.3 556.8 L1056.8 557.1 L1058.3 557.3 L1059.8 557.1 L1061.3 556.8 L1062.8 556.6 L1064.3 556.6 L1065.8 557.0 L1067.3 557.3 L1068.8 557.2 L1070.3 557.4 L1071.8 557.2 L1073.3 556.8 L1074.8 556.8 L1076.3 557.3 L1077.8 556.9 L1079.3 556.6 L1080.8 557.2 L1082.3 557.1 L1083.8 557.5 L1085.3 557.8 L1086.8 557.4 L1088.3 557.0 L1089.8 556.9 L1091.3 557.0 L1092.8 556.9 L1094.3 557.0 L1095.8 556.9 L1097.3 557.0 L1098.8 557.5 L1100.3 557.6 L1101.8 557.3 L1103.3 556.6 L1104.9 556.8 L1106.4 557.5 L1107.9 557.2 L1109.4 556.8 L1110.9 557.0 L1112.4 557.0 L1113.9 557.0 L1115.4 556.9 L1116.9 556.5 L1118.4 556.8 L1119.9 556.7 L1121.4 556.6 L1122.9 557.1 L1124.4 556.8 L1125.9 556.9 L1127.4 557.1 L1128.9 557.0 L1130.4 557.2 L1131.9 556.9 L1133.4 556.8 L1134.9 556.5 L1136.4 556.4 L1137.9 556.6 L1139.4 557.2 L1140.9 557.6 L1142.4 556.9 L1143.9 556.9 L1145.4 557.2 L1146.9 557.0 L1148.4 557.0 L1149.9 557.3 L1151.4 557.0 L1152.9 556.8 L1154.4 557.0 L1155.9 556.8 L1157.4 556.8 L1158.9 557.0 L1160.4 556.8 L1161.9 556.6 L1163.4 556.9 L1164.9 557.3 L1166.4 557.3 L1167.9 556.9 L1169.5 557.0 L1171.0 557.2 L1172.5 557.2 L1174.0 557.4 L1175.5 557.1 L1177.0 556.8 L1178.5 556.8 L1180.0 556.7 L1181.5 557.3 L1183.0 557.7 L1184.5 556.8 L1186.0 556.7 L1187.5 557.0 L1189.0 557.1 L1190.5 557.3 L1192.0 557.0 L1193.5 557.0 L1195.0 557.1 L1196.5 557.1 L1198.0 557.0 L1199.5 556.9 L1201.0 557.1 L1202.5 556.9 L1204.0 556.7 L1205.5 557.0 L1207.0 556.9 L1208.5 557.1 L1210.0 556.9 L1211.5 556.6 L1213.0 556.7 L1214.5 556.9 L1216.0 557.0 L1217.5 556.9 L1219.0 557.1 L1220.5 556.7 L1222.0 556.7 L1223.5 556.9 L1225.0 556.8 L1226.5 556.9 L1228.0 557.2 L1229.5 557.4 L1231.0 557.6 L1232.6 557.5 L1234.1 556.9 L1235.6 556.8 L1237.1 557.0 L1238.6 557.5 L1240.1 557.5 L1241.6 556.9" stroke="#1fb0f0" stroke-width="2" fill="none" stroke-linejoin="bevel"/>
<path d="M191.4 562.8 L192.9 562.8 L194.4 562.7 L195.9 562.6 L197.4 562.6 L198.9 562.7 L200.4 562.8 L201.9 562.7 L203.4 562.7 L204.9 562.6 L206.4 562.8 L207.9 562.8 L209.4 562.8 L210.9 562.7 L212.4 562.7 L213.9 562.8 L215.4 562.7 L216.9 562.7 L218.5 562.7 L220.0 562.7 L221.5 562.8 L223.0 562.8 L224.5 562.8 L226.0 562.6 L227.5 562.7 L229.0 562.8 L230.5 562.8 L232.0 562.8 L233.5 562.8 L235.0 562.8 L236.5 562.7 L238.0 562.7 L239.5 562.8 L241.0 562.8 L242.5 562.7 L244.0 562.8 L245.5 562.8 L247.0 562.8 L248.5 562.7 L250.0 562.6 L251.5 562.7 L253.0 562.7 L254.5 562.8 L256.0 562.7 L257.5 562.7 L259.0 562.7 L260.5 562.7 L262.0 562.9 L263.5 562.8 L265.0 562.9 L266.5 562.7 L268.0 562.8 L269.5 562.8 L271.0 562.8 L272.5 562.8 L274.0 562.7 L275.5 562.7 L277.0 562.7 L278.5 562.8 L280.0 562.8 L281.6 562.8 L283.1 562.8 L284.6 562.9 L286.1 562.9 L287.6 562.9 L289.1 562.9 L290.6 562.9 L292.1 562.9 L293.6 562.8 L295.1 562.7 L296.6 562.7 L298.1 562.6 L299.6 562.7 L301.1 562.7 L302.6 562.8 L304.1 562.8 L305.6 562.8 L307.1 562.8 L308.6 562.7 L310.1 562.7 L311.6 562.7 L313.1 562.8 L314.6 562.8 L316.1 562.8 L317.6 562.8 L319.1 562.8 L320.6 562.7 L322.1 562.7 L323.6 562.6 L325.1 562.8 L326.6 562.8 L328.1 562.9 L329.6 562.9 L331.1 562.9 L332.6 562.9 L334.1 562.8 L335.6 562.7 L337.1 562.6 L338.6 562.7 L340.1 562.7 L341.6 562.7 L343.1 562.6 L344.7 562.7 L346.2 562.7 L347.7 562.7 L349.2 562.7 L350.7 562.7 L352.2 562.7 L353.7 562.8 L355.2 562.8 L356.7 562.7 L358.2 562.7 L359.7 562.6 L361.2 562.7 L362.7 562.7 L364.2 562.8 L365.7 562.7 L367.2 562.7 L368.7 562.8 L370.2 562.8 L371.7 562.7 L373.2 562.6 L374.7 562.7 L376.2 562.7 L377.7 562.9 L379.2 562.9 L380.7 562.8 L382.2 562.7 L383.7 562.7 L385.2 562.7 L386.7 562.7 L388.2 562.7 L389.7 562.8 L391.2 562.7 L392.7 562.7 L394.2 562.8 L395.7 562.9 L397.2 562.8 L398.7 562.8 L400.2 562.8 L401.7 562.8 L403.2 562.6 L404.7 562.7 L406.2 562.7 L407.8 562.7 L409.3 562.7 L410.8 562.6 L412.3 562.6 L413.8 562.6 L415.3 562.7 L416.8 562.7 L418.3 562.7 L419.8 562.7 L421.3 562.8 L422.8 562.8 L424.3 562.7 L425.8 562.7 L427.3 562.8 L428.8 562.8 L430.3 562.7 L431.8 562.7 L433.3 562.8 L434.8 562.8 L436.3 562.8 L437.8 562.8 L439.3 562.8 L440.8 562.8 L442.3 562.8 L443.8 562.8 L445.3 562.8 L446.8 562.7 L448.3 562.7 L449.8 562.6 L451.3 562.7 L452.8 562.8 L454.3 562.8 L455.8 562.8 L457.3 562.8 L458.8 562.9 L460.3 563.0 L461.8 563.0 L463.3 562.8 L464.8 562.6 L466.3 562.6 L467.8 562.7 L469.3 562.7 L470.8 562.7 L472.4 562.6 L473.9 562.6 L475.4 562.7 L476.9 562.6 L478.4 562.7 L479.9 562.7 L481.4 562.8 L482.9 562.8 L484.4 562.7 L485.9 562.7 L487.4 562.7 L488.9 562.8 L490.4 562.9 L491.9 562.8 L493.4 562.7 L494.9 562.8 L496.4 562.8 L497.9 562.8 L499.4 562.6 L500.9 562.6 L502.4 562.5 L503.9 562.7 L505.4 562.7 L506.9 562.8 L508.4 562.7 L509.9 562.8 L511.4 562.9 L512.9 562.9 L514.4 562.7 L515.9 562.6 L517.4 562.6 L518.9 562.6 L520.4 562.8 L521.9 563.0 L523.4 562.9 L524.9 562.8 L526.4 562.7 L527.9 562.8 L529.4 562.7 L530.9 562.6 L532.4 562.7 L533.9 562.8 L535.5 562.9 L537.0 562.9 L538.5 562.9 L540.0 562.8 L541.5 562.8 L543.0 562.8 L544.5 562.9 L546.0 562.9 L547.5 562.8 L549.0 562.7 L550.5 562.7 L552.0 562.7 L553.5 562.8 L555.0 562.9 L556.5 562.8 L558.0 562.8 L559.5 562.8 L561.0 562.8 L562.5 562.6 L564.0 562.7 L565.5 562.7 L567.0 562.9 L568.5 562.7 L570.0 562.6 L571.5 562.6 L573.0 562.8 L574.5 562.9 L576.0 562.8 L577.5 562.8 L579.0 562.7 L580.5 562.7 L582.0 562.7 L583.5 562.7 L585.0 562.7 L586.5 562.8 L588.0 562.8 L589.5 562.8 L591.0 562.8 L592.5 562.7 L594.0 562.8 L595.5 562.8 L597.0 562.9 L598.6 562.8 L600.1 562.8 L601.6 562.7 L603.1 562.9 L604.6 562.8 L606.1 562.7 L607.6 562.6 L609.1 562.7 L610.6 562.8 L612.1 562.8 L613.6 562.8 L615.1 562.8 L616.6 562.8 L618.1 562.7 L619.6 562.6 L621.1 563.0 L622.6 563.5 L624.1 564.0 L625.6 564.4 L627.1 564.7 L628.6 565.0 L630.1 565.4 L631.6 565.7 L633.1 565.9 L634.6 565.9 L636.1 565.9 L637.6 566.0 L639.1 566.1 L640.6 566.0 L642.1 565.9 L643.6 566.0 L645.1 566.1 L646.6 566.2 L648.1 566.2 L649.6 566.2 L651.1 566.2 L652.6 566.2 L654.1 566.2 L655.6 566.3 L657.1 566.3 L658.6 566.3 L660.1 566.3 L661.7 566.2 L663.2 566.3 L664.7 566.3 L666.2 566.3 L667.7 566.3 L669.2 565.9 L670.7 565.3 L672.2 564.8 L673.7 564.3 L675.2 563.8 L676.7 563.2 L678.2 562.6 L679.7 562.7 L681.2 562.7 L682.7 562.8 L684.2 562.7 L685.7 562.7 L687.2 562.7 L688.7 562.8 L690.2 562.8 L691.7 562.9 L693.2 562.9 L694.7 562.9 L696.2 562.8 L697.7 562.8 L699.2 562.8 L700.7 562.9 L702.2 562.9 L703.7 562.8 L705.2 562.8 L706.7 562.8 L708.2 562.8 L709.7 562.8 L711.2 562.8 L712.7 562.8 L714.2 562.9 L715.7 562.8 L717.2 562.9 L718.7 562.9 L720.2 562.9 L721.7 562.8 L723.2 562.8 L724.8 562.7 L726.3 562.7 L727.8 562.7 L729.3 562.7 L730.8 562.8 L732.3 562.8 L733.8 562.9 L735.3 562.9 L736.8 562.8 L738.3 562.9 L739.8 562.7 L741.3 562.7 L742.8 562.7 L744.3 562.8 L745.8 562.8 L747.3 562.8 L748.8 562.8 L750.3 562.9 L751.8 562.9 L753.3 562.9 L754.8 562.9 L756.3 562.8 L757.8 562.8 L759.3 562.8 L760.8 562.8 L762.3 562.8 L763.8 562.8 L765.3 562.8 L766.8 562.8 L768.3 562.8 L769.8 562.7 L771.3 562.8 L772.8 562.8 L774.3 562.7 L775.8 562.7 L777.3 562.6 L778.8 562.8 L780.3 562.8 L781.8 562.8 L783.3 562.7 L784.8 562.7 L786.3 562.7 L787.8 562.7 L789.4 562.7 L790.9 562.7 L792.4 562.8 L793.9 562.7 L795.4 562.8 L796.9 562.7 L798.4 562.6 L799.9 562.7 L801.4 562.7 L802.9 562.8 L804.4 562.7 L805.9 562.8 L807.4 562.8 L808.9 562.8 L810.4 562.7 L811.9 562.6 L813.4 562.8 L814.9 562.8 L816.4 562.7 L817.9 562.7 L819.4 562.7 L820.9 562.8 L822.4 562.8 L823.9 562.8 L825.4 562.8 L826.9 562.9 L828.4 562.9 L829.9 562.8 L831.4 562.7 L832.9 562.7 L834.4 562.7 L835.9 562.7 L837.4 562.6 L838.9 562.5 L840.4 562.5 L841.9 562.6 L843.4 562.8 L844.9 562.8 L846.4 562.8 L847.9 562.8 L849.4 562.8 L850.9 562.8 L852.5 562.8 L854.0 562.8 L855.5 562.8 L857.0 562.8 L858.5 562.6 L860.0 562.7 L861.5 562.7 L863.0 562.9 L864.5 562.8 L866.0 562.9 L867.5 562.8 L869.0 562.9 L870.5 562.8 L872.0 562.8 L873.5 562.8 L875.0 562.8 L876.5 562.7 L878.0 562.7 L879.5 562.7 L881.0 562.6 L882.5 562.6 L884.0 562.7 L885.5 562.7 L887.0 562.7 L888.5 562.8 L890.0 562.9 L891.5 562.9 L893.0 562.8 L894.5 562.8 L896.0 562.8 L897.5 562.7 L899.0 562.7 L900.5 562.7 L902.0 562.8 L903.5 562.8 L905.0 562.7 L906.5 562.7 L908.0 562.7 L909.5 562.7 L911.0 562.7 L912.5 562.7 L914.0 562.7 L915.6 562.7 L917.1 562.7 L918.6 562.7 L920.1 562.7 L921.6 562.7 L923.1 562.7 L924.6 562.7 L926.1 562.7 L927.6 562.7 L929.1 562.7 L930.6 562.8 L932.1 562.8 L933.6 562.9 L935.1 562.8 L936.6 562.8 L938.1 562.8 L939.6 562.8 L941.1 562.9 L942.6 562.9 L944.1 563.0 L945.6 562.8 L947.1 562.8 L948.6 562.9 L950.1 562.9 L951.6 562.9 L953.1 562.9 L954.6 562.9 L956.1 562.9 L957.6 562.9 L959.1 562.9 L960.6 562.8 L962.1 562.9 L963.6 562.9 L965.1 562.9 L966.6 562.8 L968.1 562.8 L969.6 562.8 L971.1 562.7 L972.6 562.7 L974.1 562.7 L975.6 562.8 L977.1 562.8 L978.7 562.7 L980.2 562.7 L981.7 562.7 L983.2 562.7 L984.7 562.8 L986.2 562.8 L987.7 562.8 L989.2 562.7 L990.7 562.7 L992.2 562.7 L993.7 562.7 L995.2 562.7 L996.7 562.7 L998.2 562.7 L999.7 562.6 L1001.2 562.8 L1002.7 562.8 L1004.2 562.8 L1005.7 562.8 L1007.2 562.8 L1008.7 562.9 L1010.2 562.8 L1011.7 562.7 L1013.2 562.8 L1014.7 562.9 L1016.2 562.9 L1017.7 562.7 L1019.2 562.8 L1020.7 562.7 L1022.2 562.8 L1023.7 562.7 L1025.2 562.8 L1026.7 562.8 L1028.2 562.8 L1029.7 562.7 L1031.2 562.6 L1032.7 562.6 L1034.2 562.6 L1035.7 562.7 L1037.2 562.7 L1038.7 562.8 L1040.2 562.8 L1041.8 562.8 L1043.3 562.8 L1044.8 562.8 L1046.3 562.8 L1047.8 562.8 L1049.3 562.8 L1050.8 562.7 L1052.3 562.7 L1053.8 562.7 L1055.3 562.7 L1056.8 562.8 L1058.3 562.8 L1059.8 562.9 L1061.3 562.9 L1062.8 562.9 L1064.3 562.7 L1065.8 562.7 L1067.3 562.7 L1068.8 562.8 L1070.3 562.8 L1071.8 562.8 L1073.3 562.7 L1074.8 562.7 L1076.3 562.7 L1077.8 562.8 L1079.3 562.8 L1080.8 562.9 L1082.3 562.9 L1083.8 562.8 L1085.3 562.7 L1086.8 562.6 L1088.3 562.7 L1089.8 562.8 L1091.3 562.8 L1092.8 562.8 L1094.3 562.8 L1095.8 562.8 L1097.3 562.8 L1098.8 562.8 L1100.3 562.8 L1101.8 562.8 L1103.3 562.9 L1104.9 562.9 L1106.4 562.9 L1107.9 562.8 L1109.4 562.7 L1110.9 562.7 L1112.4 562.6 L1113.9 562.6 L1115.4 562.7 L1116.9 562.8 L1118.4 562.8 L1119.9 562.8 L1121.4 562.8 L1122.9 562.8 L1124.4 562.9 L1125.9 562.9 L1127.4 562.9 L1128.9 562.9 L1130.4 562.8 L1131.9 562.8 L1133.4 562.8 L1134.9 562.8 L1136.4 562.7 L1137.9 562.7 L1139.4 562.7 L1140.9 562.7 L1142.4 562.7 L1143.9 562.7 L1145.4 562.7 L1146.9 562.8 L1148.4 562.9 L1149.9 562.9 L1151.4 562.8 L1152.9 562.8 L1154.4 562.8 L1155.9 562.9 L1157.4 562.7 L1158.9 562.7 L1160.4 562.6 L1161.9 562.7 L1163.4 562.7 L1164.9 562.8 L1166.4 562.8 L1167.9 562.8 L1169.5 562.8 L1171.0 562.8 L1172.5 562.8 L1174.0 562.8 L1175.5 562.8 L1177.0 562.7 L1178.5 562.8 L1180.0 562.7 L1181.5 562.7 L1183.0 562.7 L1184.5 562.7 L1186.0 562.7 L1187.5 562.8 L1189.0 562.8 L1190.5 562.9 L1192.0 562.9 L1193.5 562.8 L1195.0 562.8 L1196.5 562.8 L1198.0 563.0 L1199.5 562.9 L1201.0 562.7 L1202.5 562.6 L1204.0 562.7 L1205.5 562.7 L1207.0 562.7 L1208.5 562.7 L1210.0 562.6 L1211.5 562.6 L1213.0 562.6 L1214.5 562.8 L1216.0 562.8 L1217.5 562.8 L1219.0 562.8 L1220.5 562.7 L1222.0 562.6 L1223.5 562.6 L1225.0 562.7 L1226.5 562.8 L1228.0 562.9 L1229.5 562.9 L1231.0 562.8 L1232.6 562.7 L1234.1 562.8 L1235.6 562.8 L1237.1 562.7 L1238.6 562.6 L1240.1 562.7 L1241.6 562.8" stroke="#4878b4" stroke-width="2" fill="none" stroke-linejoin="bevel"/>
<rect x="1179.5" y="504.5" width="104.0" height="86" fill="#fff" fill-opacity="0.95" stroke="#e5e5e5" stroke-opacity="0.5" stroke-width="1"/>
<path d="M1189.5 524.5H1209.5" stroke="#add8e6" stroke-width="2"/>
<text x="1214.5" y="528.1" font-size="13.3" fill="#444">X-Axis (T)</text>
<path d="M1189.5 547.5H1209.5" stroke="#1fb0f0" stroke-width="2"/>
<text x="1214.5" y="551.1" font-size="13.3" fill="#444">Y-Axis (T)</text>
<path d="M1189.5 570.5H1209.5" stroke="#4878b4" stroke-width="2"/>
<text x="1214.5" y="574.1" font-size="13.3" fill="#444">Z-Axis (T)</text>
</g>
<path d="M138.5 494.0V586.0M138.0 585.5H1294.0M167.5 585.5V590.0M197.5 583.0V592.0M227.5 585.5V590.0M258.5 585.5V590.0M288.5 585.5V590.0M319.5 585.5V590.0M349.5 583.0V592.0M380.5 585.5V590.0M410.5 585.5V590.0M441.5 585.5V590.0M471.5 585.5V590.0M502.5 583.0V592.0M532.5 585.5V590.0M562.5 585.5V590.0M593.5 585.5V590.0M623.5 585.5V590.0M654.5 583.0V592.0M684.5 585.5V590.0M715.5 585.5V590.0M745.5 585.5V590.0M776.5 585.5V590.0M806.5 583.0V592.0M837.5 585.5V590.0M867.5 585.5V590.0M898.5 585.5V590.0M928.5 585.5V590.0M958.5 583.0V592.0M989.5 585.5V590.0M1019.5 585.5V590.0M1050.5 585.5V590.0M1080.5 585.5V590.0M1111.5 583.0V592.0M1141.5 585.5V590.0M1172.5 585.5V590.0M1202.5 585.5V590.0M1233.5 585.5V590.0M1263.5 583.0V592.0M132.0 585.5H141.0M134.0 582.5H138.5M134.0 580.5H138.5M134.0 578.5H138.5M134.0 575.5H138.5M132.0 573.5H141.0M134.0 570.5H138.5M134.0 568.5H138.5M134.0 566.5H138.5M134.0 563.5H138.5M132.0 561.5H141.0M134.0 558.5H138.5M134.0 556.5H138.5M134.0 554.5H138.5M134.0 551.5H138.5M132.0 549.5H141.0M134.0 546.5H138.5M134.0 544.5H138.5M134.0 542.5H138.5M134.0 539.5H138.5M132.0 537.5H141.0M134.0 534.5H138.5M134.0 532.5H138.5M134.0 530.5H138.5M134.0 527.5H138.5M132.0 525.5H141.0M134.0 522.5H138.5M134.0 520.5H138.5M134.0 518.5H138.5M134.0 515.5H138.5M132.0 513.5H141.0M134.0 510.5H138.5M134.0 508.5H138.5M134.0 506.5H138.5M134.0 503.5H138.5M132.0 501.5H141.0M134.0 499.5H138.5M134.0 496.5H138.5" stroke="#000" stroke-width="1" fill="none"/>
<text x="197.5" y="605" font-size="11" fill="#444" text-anchor="middle">0</text>
<text x="349.8" y="605" font-size="11" fill="#444" text-anchor="middle">5</text>
<text x="502.1" y="605" font-size="11" fill="#444" text-anchor="middle">10</text>
<text x="654.4" y="605" font-size="11" fill="#444" text-anchor="middle">15</text>
<text x="806.6" y="605" font-size="11" fill="#444" text-anchor="middle">20</text>
<text x="958.9" y="605" font-size="11" fill="#444" text-anchor="middle">25</text>
<text x="1111.2" y="605" font-size="11" fill="#444" text-anchor="middle">30</text>
<text x="1263.5" y="605" font-size="11" fill="#444" text-anchor="middle">35</text>
<text x="127" y="504.2" font-size="11" fill="#444" text-anchor="end">300</text>
<text x="127" y="516.2" font-size="11" fill="#444" text-anchor="end">200</text>
<text x="127" y="528.2" font-size="11" fill="#444" text-anchor="end">100</text>
<text x="127" y="540.1" font-size="11" fill="#444" text-anchor="end">0</text>
<text x="127" y="552.1" font-size="11" fill="#444" text-anchor="end">-100</text>
<text x="127" y="564.1" font-size="11" fill="#444" text-anchor="end">-200</text>
<text x="127" y="576.1" font-size="11" fill="#444" text-anchor="end">-300</text>
<text x="127" y="588.1" font-size="11" fill="#444" text-anchor="end">-400</text>
<text x="139" y="487" font-size="13.3" font-weight="bold" fill="#444">Magnetometer</text>
<text x="716.5" y="623.7" font-size="13.3" font-style="italic" fill="#444" text-anchor="middle">Time (s)</text>
<clipPath id="ylc2"><rect x="60" y="468" width="60" height="165"/></clipPath>
<g clip-path="url(#ylc2)">
<text transform="translate(101.2,624) rotate(-90)" x="0" y="0" font-size="13.3" font-style="italic" fill="#444">Magnetic Field Strength (uT)</text>
</g>
<g transform="translate(1308,504)"><path d="M-2.9 -7.95 L0.12 -10 L3.13 -7.35 L-2.77 -3.37Z" fill="#00b04f" transform="rotate(0)"/><path d="M-2.9 -7.95 L0.12 -10 L3.13 -7.35 L-2.77 -3.37Z" fill="#00a5a5" transform="rotate(45)"/><path d="M-2.9 -7.95 L0.12 -10 L3.13 -7.35 L-2.77 -3.37Z" fill="#3d9ce0" transform="rotate(90)"/><path d="M-2.9 -7.95 L0.12 -10 L3.13 -7.35 L-2.77 -3.37Z" fill="#8c0090" transform="rotate(135)"/><path d="M-2.9 -7.95 L0.12 -10 L3.13 -7.35 L-2.77 -3.37Z" fill="#ee0060" transform="rotate(180)"/><path d="M-2.9 -7.95 L0.12 -10 L3.13 -7.35 L-2.77 -3.37Z" fill="#ee4a22" transform="rotate(225)"/><path d="M-2.9 -7.95 L0.12 -10 L3.13 -7.35 L-2.77 -3.37Z" fill="#f6a423" transform="rotate(270)"/><path d="M-2.9 -7.95 L0.12 -10 L3.13 -7.35 L-2.77 -3.37Z" fill="#9ddc1e" transform="rotate(315)"/></g>
<rect x="1293" y="519" width="2" height="30" fill="#2a98de"/>
<g transform="translate(1301,526)" fill="#a1a6a9"><path d="M8.5 0 L12 4 L9.7 4 L9.7 7.3 L13 7.3 L13 5 L17 8.5 L13 12 L13 9.7 L9.7 9.7 L9.7 13 L12 13 L8.5 17 L5 13 L7.3 13 L7.3 9.7 L4 9.7 L4 12 L0 8.5 L4 5 L4 7.3 L7.3 7.3 L7.3 4 L5 4Z"/></g>
<g transform="translate(1301,556)"><path d="M0.5 8 V16.5 H16.5 V12 M0.5 6 V0.5 H6" fill="none" stroke="#a1a6a9" stroke-width="1" stroke-dasharray="2 1.3"/>
<circle cx="11.3" cy="5.6" r="4.4" fill="#fff" stroke="#a1a6a9" stroke-width="1.9"/><path d="M8.2 8.7 L3.3 13.6" stroke="#a1a6a9" stroke-width="2.2"/></g>
<path d="M1303 579.5H1313" stroke="#cfd2d4" stroke-width="1"/>
<clipPath id="clip3"><rect x="138.5" y="659.5" width="1155.0" height="91.0"/></clipPath>
<path d="M189.5 659.5V750.5M342.5 659.5V750.5M496.5 659.5V750.5M649.5 659.5V750.5M803.5 659.5V750.5M956.5 659.5V750.5M1110.5 659.5V750.5M1263.5 659.5V750.5M138.5 663.5H1293.5M138.5 684.5H1293.5M138.5 706.5H1293.5M138.5 727.5H1293.5M138.5 749.5H1293.5" stroke="#e5e5e5" stroke-width="1" fill="none"/>
<rect x="138.5" y="659.5" width="1155.0" height="91.0" fill="none" stroke="#e5e5e5" stroke-width="1"/>
<g clip-path="url(#clip3)">
<path d="M191.0 683.9 L192.5 683.1 L194.0 682.1 L195.5 681.1 L197.0 680.2 L198.5 679.3 L200.0 678.9 L201.5 678.4 L203.0 678.1 L204.5 677.7 L206.0 677.3 L207.5 677.4 L209.0 677.9 L210.5 678.3 L212.0 678.8 L213.5 679.2 L215.0 679.7 L216.5 679.7 L218.0 679.6 L219.5 679.5 L221.0 679.5 L222.5 679.4 L224.0 679.4 L225.5 679.2 L227.0 679.2 L228.5 679.1 L230.0 679.4 L231.5 679.7 L233.0 680.0 L234.5 680.3 L236.0 680.6 L237.5 680.9 L239.0 681.2 L240.5 681.5 L242.0 681.9 L243.6 682.2 L245.1 682.4 L246.6 682.4 L248.1 682.5 L249.6 682.4 L251.1 682.4 L252.6 682.4 L254.1 682.4 L255.6 682.4 L257.1 682.4 L258.6 682.4 L260.1 682.5 L261.6 682.8 L263.1 683.0 L264.6 683.3 L266.1 683.6 L267.6 683.9 L269.1 684.2 L270.6 684.3 L272.1 684.3 L273.6 684.3 L275.1 684.3 L276.6 684.3 L278.1 684.3 L279.6 684.3 L281.1 684.3 L282.6 684.3 L284.1 684.3 L285.6 684.2 L287.1 684.3 L288.6 684.3 L290.1 684.3 L291.6 684.3 L293.1 684.3 L294.6 684.3 L296.1 684.3 L297.6 684.3 L299.1 684.4 L300.6 684.4 L302.1 684.4 L303.6 684.3 L305.1 684.3 L306.6 684.3 L308.1 684.3 L309.6 684.3 L311.1 684.3 L312.6 684.3 L314.1 684.3 L315.6 684.3 L317.1 684.3 L318.6 684.4 L320.1 684.4 L321.6 684.4 L323.1 684.3 L324.6 684.3 L326.1 684.3 L327.6 684.3 L329.1 684.4 L330.6 684.4 L332.1 684.5 L333.6 684.5 L335.1 684.6 L336.6 684.7 L338.1 684.8 L339.6 684.8 L341.1 684.8 L342.6 684.9 L344.1 684.9 L345.6 685.0 L347.1 685.1 L348.7 685.2 L350.2 685.1 L351.7 685.2 L353.2 685.3 L354.7 685.4 L356.2 685.5 L357.7 685.5 L359.2 685.6 L360.7 685.6 L362.2 685.7 L363.7 685.7 L365.2 685.8 L366.7 685.8 L368.2 685.8 L369.7 685.8 L371.2 685.9 L372.7 685.9 L374.2 685.9 L375.7 685.9 L377.2 685.9 L378.7 686.0 L380.2 686.0 L381.7 686.0 L383.2 686.1 L384.7 686.1 L386.2 686.3 L387.7 686.3 L389.2 686.4 L390.7 686.3 L392.2 686.3 L393.7 686.3 L395.2 686.3 L396.7 686.3 L398.2 686.4 L399.7 686.4 L401.2 686.4 L402.7 686.5 L404.2 686.5 L405.7 686.6 L407.2 686.6 L408.7 686.6 L410.2 686.6 L411.7 686.7 L413.2 686.6 L414.7 686.7 L416.2 686.8 L417.7 686.9 L419.2 686.9 L420.7 686.9 L422.2 687.0 L423.7 687.0 L425.2 687.0 L426.7 686.9 L428.2 687.0 L429.7 687.1 L431.2 687.1 L432.7 687.2 L434.2 687.2 L435.7 687.1 L437.2 687.1 L438.7 687.1 L440.2 687.2 L441.7 687.2 L443.2 687.3 L444.7 687.3 L446.2 687.3 L447.7 687.4 L449.2 687.4 L450.7 687.5 L452.2 687.5 L453.8 687.6 L455.3 687.7 L456.8 687.8 L458.3 687.8 L459.8 687.9 L461.3 687.9 L462.8 688.0 L464.3 688.0 L465.8 688.1 L467.3 688.2 L468.8 688.2 L470.3 688.2 L471.8 688.2 L473.3 688.3 L474.8 688.4 L476.3 688.4 L477.8 688.5 L479.3 688.6 L480.8 688.6 L482.3 688.7 L483.8 688.8 L485.3 688.8 L486.8 688.9 L488.3 688.9 L489.8 689.0 L491.3 689.0 L492.8 689.0 L494.3 689.1 L495.8 689.1 L497.3 689.1 L498.8 689.2 L500.3 689.2 L501.8 689.3 L503.3 689.2 L504.8 689.3 L506.3 689.3 L507.8 689.3 L509.3 689.3 L510.8 689.2 L512.3 689.3 L513.8 689.3 L515.3 689.3 L516.8 689.3 L518.3 689.3 L519.8 689.4 L521.3 689.4 L522.8 689.4 L524.3 689.4 L525.8 689.4 L527.3 689.4 L528.8 689.5 L530.3 689.6 L531.8 689.6 L533.3 689.5 L534.8 689.5 L536.3 689.5 L537.8 689.5 L539.3 689.5 L540.8 689.5 L542.3 689.6 L543.8 689.6 L545.3 689.5 L546.8 689.5 L548.3 689.5 L549.8 689.6 L551.3 689.6 L552.8 689.6 L554.3 689.6 L555.8 689.6 L557.3 689.7 L558.9 689.7 L560.4 689.7 L561.9 689.7 L563.4 689.7 L564.9 689.7 L566.4 689.7 L567.9 689.7 L569.4 689.8 L570.9 689.8 L572.4 689.8 L573.9 689.8 L575.4 689.8 L576.9 689.8 L578.4 689.8 L579.9 689.8 L581.4 689.9 L582.9 689.8 L584.4 689.8 L585.9 689.8 L587.4 689.8 L588.9 689.8 L590.4 689.9 L591.9 689.9 L593.4 690.0 L594.9 690.0 L596.4 690.0 L597.9 690.0 L599.4 690.0 L600.9 689.9 L602.4 689.9 L603.9 689.9 L605.4 689.8 L606.9 689.6 L608.4 689.5 L609.9 689.8 L611.4 690.1 L612.9 690.4 L614.4 690.3 L615.9 689.2 L617.4 687.7 L618.9 683.2 L620.4 679.2 L621.9 675.7 L623.4 672.2 L624.9 670.5 L626.4 669.7 L627.9 668.9 L629.4 668.1 L630.9 667.7 L632.4 667.3 L633.9 666.9 L635.4 666.5 L636.9 666.3 L638.4 666.3 L639.9 666.2 L641.4 666.2 L642.9 666.1 L644.4 666.1 L645.9 666.0 L647.4 665.9 L648.9 665.7 L650.4 665.7 L651.9 665.7 L653.4 665.7 L654.9 665.7 L656.4 665.7 L657.9 665.7 L659.4 665.7 L660.9 665.7 L662.4 665.7 L664.0 665.7 L665.5 666.8 L667.0 667.9 L668.5 669.1 L670.0 671.4 L671.5 673.6 L673.0 675.8 L674.5 677.9 L676.0 679.9 L677.5 681.9 L679.0 683.9 L680.5 685.9 L682.0 686.4 L683.5 686.7 L685.0 686.9 L686.5 687.2 L688.0 687.2 L689.5 687.2 L691.0 687.1 L692.5 687.0 L694.0 686.9 L695.5 687.0 L697.0 686.9 L698.5 686.8 L700.0 686.6 L701.5 686.7 L703.0 686.7 L704.5 686.8 L706.0 686.8 L707.5 686.7 L709.0 686.7 L710.5 686.7 L712.0 686.7 L713.5 686.7 L715.0 686.7 L716.5 686.7 L718.0 686.7 L719.5 686.7 L721.0 686.7 L722.5 686.8 L724.0 686.8 L725.5 686.9 L727.0 686.8 L728.5 686.9 L730.0 686.9 L731.5 686.9 L733.0 686.9 L734.5 686.9 L736.0 686.9 L737.5 687.0 L739.0 686.9 L740.5 686.9 L742.0 686.9 L743.5 686.9 L745.0 686.9 L746.5 686.9 L748.0 686.9 L749.5 686.9 L751.0 686.9 L752.5 686.9 L754.0 686.9 L755.5 686.9 L757.0 687.0 L758.5 687.0 L760.0 687.0 L761.5 687.0 L763.0 687.0 L764.5 686.9 L766.0 686.9 L767.5 687.0 L769.1 687.0 L770.6 687.0 L772.1 687.0 L773.6 687.0 L775.1 687.0 L776.6 687.0 L778.1 686.9 L779.6 687.0 L781.1 687.0 L782.6 687.1 L784.1 687.1 L785.6 687.1 L787.1 687.1 L788.6 687.1 L790.1 687.1 L791.6 687.1 L793.1 687.1 L794.6 687.1 L796.1 687.1 L797.6 687.1 L799.1 687.1 L800.6 687.1 L802.1 687.1 L803.6 687.1 L805.1 687.2 L806.6 687.1 L808.1 687.2 L809.6 687.1 L811.1 687.2 L812.6 687.2 L814.1 687.3 L815.6 687.3 L817.1 687.3 L818.6 687.3 L820.1 687.3 L821.6 687.3 L823.1 687.3 L824.6 687.3 L826.1 687.3 L827.6 687.4 L829.1 687.3 L830.6 687.4 L832.1 687.3 L833.6 687.3 L835.1 687.3 L836.6 687.3 L838.1 687.3 L839.6 687.4 L841.1 687.3 L842.6 687.4 L844.1 687.4 L845.6 687.5 L847.1 687.4 L848.6 687.4 L850.1 687.3 L851.6 687.4 L853.1 687.4 L854.6 687.4 L856.1 687.3 L857.6 687.4 L859.1 687.4 L860.6 687.4 L862.1 687.4 L863.6 687.4 L865.1 687.4 L866.6 687.4 L868.1 687.6 L869.6 687.6 L871.1 687.6 L872.6 687.5 L874.2 687.5 L875.7 687.5 L877.2 687.5 L878.7 687.6 L880.2 687.6 L881.7 687.6 L883.2 687.6 L884.7 687.6 L886.2 687.6 L887.7 687.5 L889.2 687.6 L890.7 687.6 L892.2 687.5 L893.7 687.5 L895.2 687.6 L896.7 687.6 L898.2 687.6 L899.7 687.6 L901.2 687.6 L902.7 687.7 L904.2 687.6 L905.7 687.6 L907.2 687.7 L908.7 687.7 L910.2 687.7 L911.7 687.7 L913.2 687.8 L914.7 687.8 L916.2 687.7 L917.7 687.7 L919.2 687.7 L920.7 687.7 L922.2 687.7 L923.7 687.7 L925.2 687.7 L926.7 687.7 L928.2 687.7 L929.7 687.7 L931.2 687.7 L932.7 687.7 L934.2 687.7 L935.7 687.8 L937.2 687.8 L938.7 687.7 L940.2 687.7 L941.7 687.7 L943.2 687.8 L944.7 687.8 L946.2 687.8 L947.7 687.8 L949.2 687.9 L950.7 687.9 L952.2 687.9 L953.7 687.9 L955.2 687.9 L956.7 687.9 L958.2 687.9 L959.7 687.9 L961.2 687.9 L962.7 688.0 L964.2 688.0 L965.7 688.0 L967.2 688.0 L968.7 687.9 L970.2 687.9 L971.7 687.9 L973.2 687.9 L974.7 688.0 L976.2 688.0 L977.7 688.0 L979.3 688.0 L980.8 688.0 L982.3 688.0 L983.8 688.0 L985.3 688.0 L986.8 688.0 L988.3 688.1 L989.8 688.1 L991.3 688.0 L992.8 688.0 L994.3 688.0 L995.8 688.1 L997.3 688.1 L998.8 688.0 L1000.3 688.0 L1001.8 688.0 L1003.3 688.1 L1004.8 688.1 L1006.3 688.1 L1007.8 688.1 L1009.3 688.2 L1010.8 688.1 L1012.3 688.1 L1013.8 688.2 L1015.3 688.2 L1016.8 688.2 L1018.3 688.1 L1019.8 688.1 L1021.3 688.1 L1022.8 688.1 L1024.3 688.1 L1025.8 688.1 L1027.3 688.2 L1028.8 688.2 L1030.3 688.2 L1031.8 688.1 L1033.3 688.2 L1034.8 688.2 L1036.3 688.3 L1037.8 688.2 L1039.3 688.2 L1040.8 688.3 L1042.3 688.3 L1043.8 688.3 L1045.3 688.3 L1046.8 688.2 L1048.3 688.1 L1049.8 688.2 L1051.3 688.2 L1052.8 688.3 L1054.3 688.4 L1055.8 688.4 L1057.3 688.4 L1058.8 688.3 L1060.3 688.4 L1061.8 688.4 L1063.3 688.4 L1064.8 688.4 L1066.3 688.4 L1067.8 688.4 L1069.3 688.4 L1070.8 688.4 L1072.3 688.4 L1073.8 688.4 L1075.3 688.4 L1076.8 688.4 L1078.3 688.4 L1079.8 688.4 L1081.3 688.5 L1082.8 688.5 L1084.4 688.5 L1085.9 688.6 L1087.4 688.6 L1088.9 688.5 L1090.4 688.5 L1091.9 688.5 L1093.4 688.6 L1094.9 688.6 L1096.4 688.6 L1097.9 688.6 L1099.4 688.6 L1100.9 688.5 L1102.4 688.5 L1103.9 688.5 L1105.4 688.5 L1106.9 688.5 L1108.4 688.6 L1109.9 688.6 L1111.4 688.6 L1112.9 688.6 L1114.4 688.6 L1115.9 688.6 L1117.4 688.6 L1118.9 688.6 L1120.4 688.6 L1121.9 688.6 L1123.4 688.6 L1124.9 688.6 L1126.4 688.6 L1127.9 688.6 L1129.4 688.6 L1130.9 688.7 L1132.4 688.7 L1133.9 688.7 L1135.4 688.7 L1136.9 688.8 L1138.4 688.7 L1139.9 688.8 L1141.4 688.7 L1142.9 688.8 L1144.4 688.7 L1145.9 688.7 L1147.4 688.7 L1148.9 688.7 L1150.4 688.7 L1151.9 688.7 L1153.4 688.8 L1154.9 688.8 L1156.4 688.8 L1157.9 688.7 L1159.4 688.7 L1160.9 688.8 L1162.4 688.8 L1163.9 688.9 L1165.4 688.9 L1166.9 688.9 L1168.4 689.0 L1169.9 688.9 L1171.4 688.9 L1172.9 688.9 L1174.4 688.9 L1175.9 688.8 L1177.4 688.9 L1178.9 689.0 L1180.4 689.0 L1181.9 689.0 L1183.4 688.9 L1184.9 688.9 L1186.4 688.9 L1187.9 689.0 L1189.5 689.0 L1191.0 689.0 L1192.5 689.0 L1194.0 688.9 L1195.5 689.0 L1197.0 689.0 L1198.5 689.0 L1200.0 689.0 L1201.5 688.9 L1203.0 689.0 L1204.5 689.0 L1206.0 689.1 L1207.5 689.1 L1209.0 689.1 L1210.5 689.1 L1212.0 689.1 L1213.5 689.1 L1215.0 689.1 L1216.5 689.1 L1218.0 689.1 L1219.5 689.1 L1221.0 689.1 L1222.5 689.1 L1224.0 689.1 L1225.5 689.1 L1227.0 689.1 L1228.5 689.1 L1230.0 689.2 L1231.5 689.1 L1233.0 689.1 L1234.5 689.2 L1236.0 689.2 L1237.5 689.2 L1239.0 689.2 L1240.5 689.2" stroke="#2f4f4f" stroke-width="2" fill="none" stroke-linejoin="bevel"/>
<path d="M191.0 693.5 L192.5 693.5 L194.0 693.6 L195.5 694.9 L197.0 696.2 L198.5 697.5 L200.0 698.4 L201.5 699.1 L203.0 699.8 L204.5 700.6 L206.0 701.4 L207.5 702.2 L209.0 702.5 L210.5 702.9 L212.0 703.2 L213.5 703.5 L215.0 703.8 L216.5 704.1 L218.0 704.4 L219.5 704.7 L221.0 704.9 L222.5 705.0 L224.0 705.1 L225.5 705.1 L227.0 705.2 L228.5 705.3 L230.0 705.3 L231.5 705.3 L233.0 705.4 L234.5 705.4 L236.0 705.5 L237.5 705.5 L239.0 705.5 L240.5 705.5 L242.0 705.6 L243.6 705.5 L245.1 705.6 L246.6 705.6 L248.1 705.6 L249.6 705.6 L251.1 705.6 L252.6 705.6 L254.1 705.7 L255.6 705.8 L257.1 705.8 L258.6 705.8 L260.1 705.8 L261.6 705.8 L263.1 705.8 L264.6 705.8 L266.1 705.9 L267.6 705.9 L269.1 705.9 L270.6 705.9 L272.1 705.9 L273.6 705.9 L275.1 705.9 L276.6 706.0 L278.1 706.0 L279.6 706.1 L281.1 706.0 L282.6 706.0 L284.1 706.0 L285.6 706.2 L287.1 706.1 L288.6 706.1 L290.1 706.1 L291.6 706.2 L293.1 706.1 L294.6 706.1 L296.1 706.1 L297.6 706.1 L299.1 706.2 L300.6 706.1 L302.1 706.1 L303.6 706.1 L305.1 706.1 L306.6 706.1 L308.1 706.2 L309.6 706.2 L311.1 706.2 L312.6 706.2 L314.1 706.2 L315.6 706.3 L317.1 706.2 L318.6 706.3 L320.1 706.2 L321.6 706.2 L323.1 706.2 L324.6 706.2 L326.1 706.3 L327.6 706.3 L329.1 706.3 L330.6 706.2 L332.1 706.3 L333.6 706.3 L335.1 706.3 L336.6 706.3 L338.1 706.3 L339.6 706.3 L341.1 706.3 L342.6 706.3 L344.1 706.2 L345.6 706.3 L347.1 706.3 L348.7 706.3 L350.2 706.3 L351.7 706.3 L353.2 706.4 L354.7 706.4 L356.2 706.4 L357.7 706.3 L359.2 706.3 L360.7 706.3 L362.2 706.4 L363.7 706.4 L365.2 706.4 L366.7 706.4 L368.2 706.4 L369.7 706.4 L371.2 706.4 L372.7 706.4 L374.2 706.4 L375.7 706.4 L377.2 706.4 L378.7 706.4 L380.2 706.3 L381.7 706.4 L383.2 706.4 L384.7 706.4 L386.2 706.4 L387.7 706.4 L389.2 706.4 L390.7 706.4 L392.2 706.5 L393.7 706.5 L395.2 706.5 L396.7 706.5 L398.2 706.5 L399.7 706.5 L401.2 706.5 L402.7 706.6 L404.2 706.7 L405.7 706.7 L407.2 706.6 L408.7 706.6 L410.2 706.6 L411.7 706.5 L413.2 706.6 L414.7 706.6 L416.2 706.6 L417.7 706.7 L419.2 706.6 L420.7 706.6 L422.2 706.5 L423.7 706.6 L425.2 706.5 L426.7 706.6 L428.2 706.6 L429.7 706.6 L431.2 706.6 L432.7 706.5 L434.2 706.6 L435.7 706.7 L437.2 706.7 L438.7 706.7 L440.2 706.7 L441.7 706.7 L443.2 706.7 L444.7 706.7 L446.2 706.7 L447.7 706.7 L449.2 706.7 L450.7 706.6 L452.2 706.7 L453.8 706.7 L455.3 706.7 L456.8 706.7 L458.3 706.7 L459.8 706.7 L461.3 706.7 L462.8 706.7 L464.3 706.8 L465.8 706.8 L467.3 706.8 L468.8 706.7 L470.3 706.7 L471.8 706.8 L473.3 706.8 L474.8 706.9 L476.3 706.8 L477.8 706.7 L479.3 706.7 L480.8 706.8 L482.3 706.8 L483.8 706.9 L485.3 706.9 L486.8 706.9 L488.3 706.7 L489.8 706.8 L491.3 706.8 L492.8 706.8 L494.3 706.8 L495.8 706.8 L497.3 706.8 L498.8 706.7 L500.3 706.7 L501.8 706.7 L503.3 706.7 L504.8 706.6 L506.3 706.6 L507.8 706.6 L509.3 706.7 L510.8 706.6 L512.3 706.6 L513.8 706.6 L515.3 706.6 L516.8 706.6 L518.3 706.6 L519.8 706.5 L521.3 706.5 L522.8 706.6 L524.3 706.6 L525.8 706.6 L527.3 706.5 L528.8 706.5 L530.3 706.5 L531.8 706.4 L533.3 706.4 L534.8 706.4 L536.3 706.4 L537.8 706.5 L539.3 706.5 L540.8 706.5 L542.3 706.4 L543.8 706.4 L545.3 706.4 L546.8 706.4 L548.3 706.4 L549.8 706.4 L551.3 706.4 L552.8 706.4 L554.3 706.3 L555.8 706.3 L557.3 706.2 L558.9 706.3 L560.4 706.3 L561.9 706.3 L563.4 706.3 L564.9 706.2 L566.4 706.1 L567.9 706.1 L569.4 706.2 L570.9 706.1 L572.4 706.0 L573.9 705.9 L575.4 705.9 L576.9 705.8 L578.4 705.8 L579.9 705.8 L581.4 705.8 L582.9 705.8 L584.4 705.8 L585.9 705.8 L587.4 705.7 L588.9 705.7 L590.4 705.6 L591.9 705.6 L593.4 705.5 L594.9 705.5 L596.4 705.5 L597.9 705.5 L599.4 705.5 L600.9 705.5 L602.4 705.4 L603.9 705.3 L605.4 705.3 L606.9 705.3 L608.4 705.3 L609.9 705.3 L611.4 705.3 L612.9 705.3 L614.4 705.3 L615.9 705.3 L617.4 705.3 L618.9 705.3 L620.4 705.3 L621.9 705.2 L623.4 705.1 L624.9 705.0 L626.4 705.0 L627.9 705.0 L629.4 705.0 L630.9 705.0 L632.4 704.9 L633.9 704.9 L635.4 704.9 L636.9 704.9 L638.4 704.8 L639.9 704.9 L641.4 704.8 L642.9 704.8 L644.4 704.7 L645.9 704.7 L647.4 704.7 L648.9 704.7 L650.4 704.7 L651.9 704.6 L653.4 704.6 L654.9 704.6 L656.4 704.6 L657.9 704.6 L659.4 704.6 L660.9 704.6 L662.4 704.5 L664.0 704.5 L665.5 704.5 L667.0 704.5 L668.5 704.5 L670.0 704.4 L671.5 704.5 L673.0 704.5 L674.5 704.5 L676.0 704.5 L677.5 704.5 L679.0 704.5 L680.5 704.5 L682.0 704.5 L683.5 704.5 L685.0 704.6 L686.5 704.6 L688.0 704.6 L689.5 704.6 L691.0 704.6 L692.5 704.6 L694.0 704.7 L695.5 704.7 L697.0 704.8 L698.5 704.7 L700.0 704.7 L701.5 704.8 L703.0 704.8 L704.5 704.8 L706.0 704.8 L707.5 704.8 L709.0 704.8 L710.5 704.8 L712.0 704.9 L713.5 704.8 L715.0 704.9 L716.5 704.9 L718.0 704.9 L719.5 704.9 L721.0 704.9 L722.5 705.0 L724.0 704.9 L725.5 704.9 L727.0 705.0 L728.5 705.1 L730.0 705.2 L731.5 705.2 L733.0 705.2 L734.5 705.1 L736.0 705.1 L737.5 705.1 L739.0 705.2 L740.5 705.2 L742.0 705.1 L743.5 705.0 L745.0 705.0 L746.5 705.1 L748.0 705.1 L749.5 705.1 L751.0 705.1 L752.5 705.2 L754.0 705.1 L755.5 705.2 L757.0 705.2 L758.5 705.2 L760.0 705.2 L761.5 705.1 L763.0 705.2 L764.5 705.2 L766.0 705.1 L767.5 705.1 L769.1 705.0 L770.6 705.1 L772.1 705.1 L773.6 705.2 L775.1 705.1 L776.6 705.2 L778.1 705.1 L779.6 705.2 L781.1 705.2 L782.6 705.1 L784.1 705.1 L785.6 705.2 L787.1 705.3 L788.6 705.3 L790.1 705.2 L791.6 705.2 L793.1 705.2 L794.6 705.3 L796.1 705.3 L797.6 705.2 L799.1 705.2 L800.6 705.2 L802.1 705.2 L803.6 705.1 L805.1 705.0 L806.6 705.1 L808.1 705.2 L809.6 705.2 L811.1 705.2 L812.6 705.2 L814.1 705.2 L815.6 705.2 L817.1 705.2 L818.6 705.2 L820.1 705.2 L821.6 705.2 L823.1 705.2 L824.6 705.2 L826.1 705.2 L827.6 705.2 L829.1 705.2 L830.6 705.2 L832.1 705.2 L833.6 705.2 L835.1 705.2 L836.6 705.2 L838.1 705.1 L839.6 705.1 L841.1 705.2 L842.6 705.2 L844.1 705.3 L845.6 705.2 L847.1 705.2 L848.6 705.1 L850.1 705.1 L851.6 705.1 L853.1 705.1 L854.6 705.2 L856.1 705.2 L857.6 705.2 L859.1 705.2 L860.6 705.1 L862.1 705.2 L863.6 705.2 L865.1 705.3 L866.6 705.2 L868.1 705.3 L869.6 705.2 L871.1 705.3 L872.6 705.2 L874.2 705.2 L875.7 705.2 L877.2 705.2 L878.7 705.2 L880.2 705.2 L881.7 705.2 L883.2 705.3 L884.7 705.3 L886.2 705.2 L887.7 705.2 L889.2 705.1 L890.7 705.1 L892.2 705.2 L893.7 705.2 L895.2 705.2 L896.7 705.2 L898.2 705.2 L899.7 705.3 L901.2 705.3 L902.7 705.3 L904.2 705.3 L905.7 705.3 L907.2 705.3 L908.7 705.2 L910.2 705.2 L911.7 705.3 L913.2 705.3 L914.7 705.3 L916.2 705.3 L917.7 705.2 L919.2 705.2 L920.7 705.2 L922.2 705.3 L923.7 705.2 L925.2 705.2 L926.7 705.2 L928.2 705.2 L929.7 705.3 L931.2 705.2 L932.7 705.3 L934.2 705.3 L935.7 705.3 L937.2 705.3 L938.7 705.3 L940.2 705.3 L941.7 705.4 L943.2 705.4 L944.7 705.3 L946.2 705.3 L947.7 705.2 L949.2 705.2 L950.7 705.3 L952.2 705.3 L953.7 705.3 L955.2 705.3 L956.7 705.3 L958.2 705.3 L959.7 705.3 L961.2 705.3 L962.7 705.3 L964.2 705.3 L965.7 705.4 L967.2 705.3 L968.7 705.4 L970.2 705.4 L971.7 705.4 L973.2 705.3 L974.7 705.2 L976.2 705.2 L977.7 705.2 L979.3 705.3 L980.8 705.4 L982.3 705.3 L983.8 705.3 L985.3 705.3 L986.8 705.4 L988.3 705.4 L989.8 705.3 L991.3 705.3 L992.8 705.3 L994.3 705.3 L995.8 705.4 L997.3 705.4 L998.8 705.4 L1000.3 705.3 L1001.8 705.3 L1003.3 705.3 L1004.8 705.3 L1006.3 705.3 L1007.8 705.3 L1009.3 705.3 L1010.8 705.3 L1012.3 705.2 L1013.8 705.2 L1015.3 705.3 L1016.8 705.3 L1018.3 705.3 L1019.8 705.3 L1021.3 705.4 L1022.8 705.3 L1024.3 705.4 L1025.8 705.3 L1027.3 705.4 L1028.8 705.3 L1030.3 705.3 L1031.8 705.4 L1033.3 705.4 L1034.8 705.4 L1036.3 705.3 L1037.8 705.4 L1039.3 705.4 L1040.8 705.5 L1042.3 705.4 L1043.8 705.4 L1045.3 705.4 L1046.8 705.4 L1048.3 705.4 L1049.8 705.4 L1051.3 705.3 L1052.8 705.4 L1054.3 705.4 L1055.8 705.5 L1057.3 705.4 L1058.8 705.4 L1060.3 705.4 L1061.8 705.4 L1063.3 705.4 L1064.8 705.4 L1066.3 705.4 L1067.8 705.4 L1069.3 705.4 L1070.8 705.4 L1072.3 705.3 L1073.8 705.3 L1075.3 705.5 L1076.8 705.4 L1078.3 705.4 L1079.8 705.4 L1081.3 705.4 L1082.8 705.4 L1084.4 705.4 L1085.9 705.3 L1087.4 705.4 L1088.9 705.5 L1090.4 705.5 L1091.9 705.4 L1093.4 705.3 L1094.9 705.3 L1096.4 705.3 L1097.9 705.4 L1099.4 705.4 L1100.9 705.4 L1102.4 705.3 L1103.9 705.2 L1105.4 705.3 L1106.9 705.4 L1108.4 705.4 L1109.9 705.3 L1111.4 705.3 L1112.9 705.4 L1114.4 705.5 L1115.9 705.5 L1117.4 705.5 L1118.9 705.5 L1120.4 705.4 L1121.9 705.5 L1123.4 705.5 L1124.9 705.4 L1126.4 705.4 L1127.9 705.3 L1129.4 705.4 L1130.9 705.4 L1132.4 705.4 L1133.9 705.5 L1135.4 705.5 L1136.9 705.5 L1138.4 705.5 L1139.9 705.4 L1141.4 705.4 L1142.9 705.4 L1144.4 705.3 L1145.9 705.3 L1147.4 705.4 L1148.9 705.4 L1150.4 705.4 L1151.9 705.5 L1153.4 705.5 L1154.9 705.6 L1156.4 705.5 L1157.9 705.5 L1159.4 705.5 L1160.9 705.6 L1162.4 705.5 L1163.9 705.5 L1165.4 705.4 L1166.9 705.5 L1168.4 705.5 L1169.9 705.5 L1171.4 705.5 L1172.9 705.5 L1174.4 705.4 L1175.9 705.4 L1177.4 705.4 L1178.9 705.4 L1180.4 705.4 L1181.9 705.4 L1183.4 705.5 L1184.9 705.5 L1186.4 705.5 L1187.9 705.5 L1189.5 705.6 L1191.0 705.6 L1192.5 705.6 L1194.0 705.5 L1195.5 705.5 L1197.0 705.5 L1198.5 705.5 L1200.0 705.5 L1201.5 705.5 L1203.0 705.5 L1204.5 705.5 L1206.0 705.5 L1207.5 705.5 L1209.0 705.5 L1210.5 705.5 L1212.0 705.5 L1213.5 705.5 L1215.0 705.5 L1216.5 705.4 L1218.0 705.4 L1219.5 705.4 L1221.0 705.5 L1222.5 705.5 L1224.0 705.5 L1225.5 705.4 L1227.0 705.4 L1228.5 705.5 L1230.0 705.6 L1231.5 705.6 L1233.0 705.5 L1234.5 705.6 L1236.0 705.6 L1237.5 705.6 L1239.0 705.5 L1240.5 705.5" stroke="#ff00ff" stroke-width="2" fill="none" stroke-linejoin="bevel"/>
<path d="M191.0 729.8 L192.5 729.2 L194.0 728.6 L195.5 726.9 L197.0 724.6 L198.5 722.3 L200.0 720.0 L201.5 717.8 L203.0 716.4 L204.5 715.1 L206.0 713.8 L207.5 712.4 L209.0 711.3 L210.5 710.8 L212.0 710.2 L213.5 709.6 L215.0 709.1 L216.5 708.6 L218.0 708.2 L219.5 708.0 L221.0 707.7 L222.5 707.5 L224.0 707.3 L225.5 707.1 L227.0 706.9 L228.5 706.8 L230.0 706.8 L231.5 706.8 L233.0 706.8 L234.5 706.8 L236.0 706.8 L237.5 706.8 L239.0 706.7 L240.5 706.7 L242.0 706.6 L243.6 706.6 L245.1 706.6 L246.6 706.5 L248.1 706.6 L249.6 706.5 L251.1 706.6 L252.6 706.6 L254.1 706.6 L255.6 706.5 L257.1 706.5 L258.6 706.5 L260.1 706.4 L261.6 706.4 L263.1 706.4 L264.6 706.4 L266.1 706.4 L267.6 706.4 L269.1 706.4 L270.6 706.4 L272.1 706.3 L273.6 706.2 L275.1 706.2 L276.6 706.2 L278.1 706.2 L279.6 706.2 L281.1 706.2 L282.6 706.1 L284.1 706.1 L285.6 706.1 L287.1 706.1 L288.6 706.1 L290.1 706.1 L291.6 706.1 L293.1 706.1 L294.6 706.1 L296.1 706.1 L297.6 706.1 L299.1 706.2 L300.6 706.1 L302.1 706.1 L303.6 706.1 L305.1 706.2 L306.6 706.1 L308.1 706.1 L309.6 706.1 L311.1 706.1 L312.6 706.1 L314.1 706.1 L315.6 706.1 L317.1 706.2 L318.6 706.2 L320.1 706.3 L321.6 706.2 L323.1 706.1 L324.6 706.1 L326.1 706.1 L327.6 706.2 L329.1 706.1 L330.6 706.1 L332.1 706.1 L333.6 706.1 L335.1 706.2 L336.6 706.1 L338.1 706.2 L339.6 706.1 L341.1 706.1 L342.6 706.0 L344.1 706.0 L345.6 706.1 L347.1 706.2 L348.7 706.2 L350.2 706.2 L351.7 706.1 L353.2 706.1 L354.7 706.1 L356.2 706.2 L357.7 706.2 L359.2 706.3 L360.7 706.3 L362.2 706.3 L363.7 706.2 L365.2 706.2 L366.7 706.1 L368.2 706.2 L369.7 706.1 L371.2 706.1 L372.7 706.1 L374.2 706.1 L375.7 706.1 L377.2 706.1 L378.7 706.2 L380.2 706.1 L381.7 706.2 L383.2 706.2 L384.7 706.2 L386.2 706.2 L387.7 706.2 L389.2 706.1 L390.7 706.1 L392.2 706.2 L393.7 706.2 L395.2 706.2 L396.7 706.2 L398.2 706.2 L399.7 706.1 L401.2 706.2 L402.7 706.1 L404.2 706.1 L405.7 706.1 L407.2 706.2 L408.7 706.2 L410.2 706.2 L411.7 706.3 L413.2 706.3 L414.7 706.2 L416.2 706.2 L417.7 706.2 L419.2 706.2 L420.7 706.2 L422.2 706.2 L423.7 706.2 L425.2 706.3 L426.7 706.2 L428.2 706.2 L429.7 706.2 L431.2 706.2 L432.7 706.2 L434.2 706.2 L435.7 706.2 L437.2 706.2 L438.7 706.3 L440.2 706.3 L441.7 706.2 L443.2 706.1 L444.7 706.2 L446.2 706.2 L447.7 706.2 L449.2 706.2 L450.7 706.2 L452.2 706.2 L453.8 706.1 L455.3 706.1 L456.8 706.1 L458.3 706.2 L459.8 706.3 L461.3 706.3 L462.8 706.2 L464.3 706.2 L465.8 706.2 L467.3 706.2 L468.8 706.2 L470.3 706.3 L471.8 706.3 L473.3 706.2 L474.8 706.2 L476.3 706.3 L477.8 706.3 L479.3 706.4 L480.8 706.3 L482.3 706.4 L483.8 706.2 L485.3 706.2 L486.8 706.2 L488.3 706.2 L489.8 706.1 L491.3 706.2 L492.8 706.2 L494.3 706.2 L495.8 706.2 L497.3 706.2 L498.8 706.2 L500.3 706.2 L501.8 706.2 L503.3 706.2 L504.8 706.2 L506.3 706.2 L507.8 706.2 L509.3 706.2 L510.8 706.2 L512.3 706.3 L513.8 706.3 L515.3 706.3 L516.8 706.3 L518.3 706.3 L519.8 706.3 L521.3 706.3 L522.8 706.3 L524.3 706.3 L525.8 706.3 L527.3 706.3 L528.8 706.3 L530.3 706.3 L531.8 706.2 L533.3 706.3 L534.8 706.3 L536.3 706.3 L537.8 706.2 L539.3 706.2 L540.8 706.2 L542.3 706.3 L543.8 706.2 L545.3 706.2 L546.8 706.2 L548.3 706.2 L549.8 706.2 L551.3 706.3 L552.8 706.3 L554.3 706.2 L555.8 706.2 L557.3 706.3 L558.9 706.2 L560.4 706.3 L561.9 706.3 L563.4 706.3 L564.9 706.3 L566.4 706.3 L567.9 706.3 L569.4 706.3 L570.9 706.2 L572.4 706.2 L573.9 706.2 L575.4 706.2 L576.9 706.2 L578.4 706.3 L579.9 706.4 L581.4 706.3 L582.9 706.3 L584.4 706.3 L585.9 706.3 L587.4 706.3 L588.9 706.3 L590.4 706.3 L591.9 706.2 L593.4 706.3 L594.9 706.2 L596.4 706.3 L597.9 706.2 L599.4 706.3 L600.9 706.3 L602.4 706.4 L603.9 706.4 L605.4 706.4 L606.9 706.4 L608.4 706.4 L609.9 706.3 L611.4 706.3 L612.9 706.3 L614.4 706.4 L615.9 706.5 L617.4 706.5 L618.9 706.6 L620.4 706.5 L621.9 706.5 L623.4 706.5 L624.9 706.6 L626.4 706.7 L627.9 706.7 L629.4 706.7 L630.9 706.7 L632.4 706.8 L633.9 706.7 L635.4 706.7 L636.9 706.7 L638.4 706.7 L639.9 706.7 L641.4 706.6 L642.9 706.7 L644.4 706.7 L645.9 706.8 L647.4 706.8 L648.9 706.7 L650.4 706.7 L651.9 706.7 L653.4 706.7 L654.9 706.7 L656.4 706.6 L657.9 706.6 L659.4 706.7 L660.9 706.8 L662.4 706.8 L664.0 706.8 L665.5 706.7 L667.0 706.7 L668.5 706.7 L670.0 706.7 L671.5 706.7 L673.0 706.7 L674.5 706.7 L676.0 706.7 L677.5 706.6 L679.0 706.6 L680.5 706.6 L682.0 706.6 L683.5 706.6 L685.0 706.5 L686.5 706.5 L688.0 706.4 L689.5 706.4 L691.0 706.4 L692.5 706.4 L694.0 706.4 L695.5 706.4 L697.0 706.4 L698.5 706.4 L700.0 706.3 L701.5 706.3 L703.0 706.3 L704.5 706.3 L706.0 706.3 L707.5 706.3 L709.0 706.3 L710.5 706.3 L712.0 706.2 L713.5 706.2 L715.0 706.3 L716.5 706.3 L718.0 706.3 L719.5 706.3 L721.0 706.3 L722.5 706.3 L724.0 706.3 L725.5 706.3 L727.0 706.3 L728.5 706.3 L730.0 706.3 L731.5 706.3 L733.0 706.3 L734.5 706.3 L736.0 706.4 L737.5 706.4 L739.0 706.3 L740.5 706.3 L742.0 706.3 L743.5 706.2 L745.0 706.3 L746.5 706.3 L748.0 706.4 L749.5 706.3 L751.0 706.3 L752.5 706.3 L754.0 706.3 L755.5 706.3 L757.0 706.2 L758.5 706.3 L760.0 706.3 L761.5 706.3 L763.0 706.3 L764.5 706.3 L766.0 706.3 L767.5 706.3 L769.1 706.3 L770.6 706.3 L772.1 706.3 L773.6 706.3 L775.1 706.3 L776.6 706.3 L778.1 706.3 L779.6 706.3 L781.1 706.3 L782.6 706.3 L784.1 706.3 L785.6 706.3 L787.1 706.3 L788.6 706.3 L790.1 706.3 L791.6 706.3 L793.1 706.3 L794.6 706.3 L796.1 706.2 L797.6 706.3 L799.1 706.3 L800.6 706.3 L802.1 706.3 L803.6 706.4 L805.1 706.3 L806.6 706.4 L808.1 706.3 L809.6 706.3 L811.1 706.3 L812.6 706.2 L814.1 706.2 L815.6 706.2 L817.1 706.3 L818.6 706.3 L820.1 706.3 L821.6 706.4 L823.1 706.3 L824.6 706.3 L826.1 706.3 L827.6 706.3 L829.1 706.3 L830.6 706.3 L832.1 706.4 L833.6 706.4 L835.1 706.3 L836.6 706.3 L838.1 706.3 L839.6 706.3 L841.1 706.4 L842.6 706.4 L844.1 706.4 L845.6 706.3 L847.1 706.2 L848.6 706.3 L850.1 706.3 L851.6 706.4 L853.1 706.3 L854.6 706.3 L856.1 706.2 L857.6 706.2 L859.1 706.2 L860.6 706.2 L862.1 706.2 L863.6 706.3 L865.1 706.3 L866.6 706.3 L868.1 706.3 L869.6 706.3 L871.1 706.3 L872.6 706.3 L874.2 706.3 L875.7 706.3 L877.2 706.3 L878.7 706.3 L880.2 706.3 L881.7 706.3 L883.2 706.3 L884.7 706.3 L886.2 706.2 L887.7 706.3 L889.2 706.3 L890.7 706.3 L892.2 706.3 L893.7 706.2 L895.2 706.3 L896.7 706.3 L898.2 706.4 L899.7 706.3 L901.2 706.4 L902.7 706.3 L904.2 706.3 L905.7 706.3 L907.2 706.3 L908.7 706.4 L910.2 706.3 L911.7 706.3 L913.2 706.3 L914.7 706.3 L916.2 706.3 L917.7 706.3 L919.2 706.2 L920.7 706.2 L922.2 706.2 L923.7 706.3 L925.2 706.4 L926.7 706.4 L928.2 706.4 L929.7 706.3 L931.2 706.2 L932.7 706.3 L934.2 706.3 L935.7 706.4 L937.2 706.4 L938.7 706.3 L940.2 706.3 L941.7 706.2 L943.2 706.2 L944.7 706.3 L946.2 706.3 L947.7 706.3 L949.2 706.3 L950.7 706.3 L952.2 706.3 L953.7 706.3 L955.2 706.3 L956.7 706.3 L958.2 706.3 L959.7 706.4 L961.2 706.3 L962.7 706.3 L964.2 706.2 L965.7 706.2 L967.2 706.2 L968.7 706.2 L970.2 706.3 L971.7 706.3 L973.2 706.4 L974.7 706.4 L976.2 706.3 L977.7 706.4 L979.3 706.3 L980.8 706.3 L982.3 706.3 L983.8 706.3 L985.3 706.3 L986.8 706.3 L988.3 706.3 L989.8 706.2 L991.3 706.3 L992.8 706.3 L994.3 706.3 L995.8 706.3 L997.3 706.2 L998.8 706.3 L1000.3 706.3 L1001.8 706.3 L1003.3 706.3 L1004.8 706.3 L1006.3 706.3 L1007.8 706.3 L1009.3 706.3 L1010.8 706.3 L1012.3 706.3 L1013.8 706.3 L1015.3 706.3 L1016.8 706.4 L1018.3 706.4 L1019.8 706.4 L1021.3 706.4 L1022.8 706.3 L1024.3 706.4 L1025.8 706.3 L1027.3 706.3 L1028.8 706.3 L1030.3 706.3 L1031.8 706.4 L1033.3 706.3 L1034.8 706.3 L1036.3 706.3 L1037.8 706.3 L1039.3 706.3 L1040.8 706.2 L1042.3 706.3 L1043.8 706.4 L1045.3 706.4 L1046.8 706.3 L1048.3 706.3 L1049.8 706.3 L1051.3 706.3 L1052.8 706.3 L1054.3 706.3 L1055.8 706.3 L1057.3 706.2 L1058.8 706.3 L1060.3 706.3 L1061.8 706.3 L1063.3 706.3 L1064.8 706.2 L1066.3 706.3 L1067.8 706.3 L1069.3 706.3 L1070.8 706.3 L1072.3 706.3 L1073.8 706.3 L1075.3 706.3 L1076.8 706.3 L1078.3 706.3 L1079.8 706.3 L1081.3 706.3 L1082.8 706.3 L1084.4 706.3 L1085.9 706.3 L1087.4 706.3 L1088.9 706.3 L1090.4 706.3 L1091.9 706.3 L1093.4 706.3 L1094.9 706.3 L1096.4 706.3 L1097.9 706.3 L1099.4 706.3 L1100.9 706.3 L1102.4 706.3 L1103.9 706.3 L1105.4 706.3 L1106.9 706.2 L1108.4 706.3 L1109.9 706.3 L1111.4 706.3 L1112.9 706.3 L1114.4 706.3 L1115.9 706.4 L1117.4 706.3 L1118.9 706.3 L1120.4 706.3 L1121.9 706.3 L1123.4 706.3 L1124.9 706.3 L1126.4 706.3 L1127.9 706.3 L1129.4 706.3 L1130.9 706.3 L1132.4 706.3 L1133.9 706.4 L1135.4 706.3 L1136.9 706.3 L1138.4 706.2 L1139.9 706.3 L1141.4 706.3 L1142.9 706.3 L1144.4 706.3 L1145.9 706.2 L1147.4 706.3 L1148.9 706.3 L1150.4 706.3 L1151.9 706.3 L1153.4 706.2 L1154.9 706.2 L1156.4 706.3 L1157.9 706.3 L1159.4 706.3 L1160.9 706.3 L1162.4 706.3 L1163.9 706.4 L1165.4 706.4 L1166.9 706.3 L1168.4 706.2 L1169.9 706.2 L1171.4 706.2 L1172.9 706.3 L1174.4 706.4 L1175.9 706.4 L1177.4 706.4 L1178.9 706.4 L1180.4 706.4 L1181.9 706.4 L1183.4 706.3 L1184.9 706.3 L1186.4 706.3 L1187.9 706.2 L1189.5 706.3 L1191.0 706.3 L1192.5 706.2 L1194.0 706.2 L1195.5 706.2 L1197.0 706.3 L1198.5 706.3 L1200.0 706.4 L1201.5 706.4 L1203.0 706.3 L1204.5 706.3 L1206.0 706.3 L1207.5 706.3 L1209.0 706.3 L1210.5 706.3 L1212.0 706.3 L1213.5 706.4 L1215.0 706.4 L1216.5 706.3 L1218.0 706.3 L1219.5 706.3 L1221.0 706.3 L1222.5 706.3 L1224.0 706.4 L1225.5 706.3 L1227.0 706.3 L1228.5 706.3 L1230.0 706.4 L1231.5 706.4 L1233.0 706.3 L1234.5 706.3 L1236.0 706.3 L1237.5 706.3 L1239.0 706.3 L1240.5 706.3" stroke="#9a3ce0" stroke-width="2" fill="none" stroke-linejoin="bevel"/>
<path d="M191.0 681.9 L192.5 681.1 L194.0 680.2 L195.5 679.1 L197.0 678.1 L198.5 677.0 L200.0 676.6 L201.5 676.2 L203.0 675.7 L204.5 675.2 L206.0 674.8 L207.5 674.4 L209.0 674.1 L210.5 673.7 L212.0 673.5 L213.5 673.2 L215.0 672.9 L216.5 672.8 L218.0 672.8 L219.5 672.8 L221.0 672.8 L222.5 672.7 L224.0 672.8 L225.5 672.8 L227.0 672.9 L228.5 672.8 L230.0 672.7 L231.5 672.5 L233.0 672.3 L234.5 672.1 L236.0 671.9 L237.5 671.7 L239.0 671.5 L240.5 671.2 L242.0 671.0 L243.6 670.7 L245.1 670.7 L246.6 670.7 L248.1 670.7 L249.6 670.7 L251.1 670.7 L252.6 670.6 L254.1 670.6 L255.6 670.6 L257.1 670.6 L258.6 670.6 L260.1 670.6 L261.6 670.4 L263.1 670.2 L264.6 670.0 L266.1 669.7 L267.6 669.5 L269.1 669.5 L270.6 669.4 L272.1 669.4 L273.6 669.4 L275.1 669.5 L276.6 669.6 L278.1 669.7 L279.6 669.7 L281.1 669.7 L282.6 669.7 L284.1 669.7 L285.6 669.7 L287.1 669.7 L288.6 669.7 L290.1 669.7 L291.6 669.7 L293.1 669.7 L294.6 669.7 L296.1 669.6 L297.6 669.6 L299.1 669.5 L300.6 669.5 L302.1 669.5 L303.6 669.5 L305.1 669.5 L306.6 669.4 L308.1 669.4 L309.6 669.4 L311.1 669.4 L312.6 669.4 L314.1 669.3 L315.6 669.3 L317.1 669.2 L318.6 669.1 L320.1 669.1 L321.6 669.0 L323.1 669.0 L324.6 669.0 L326.1 669.0 L327.6 669.0 L329.1 668.9 L330.6 669.0 L332.1 668.9 L333.6 668.9 L335.1 668.8 L336.6 668.9 L338.1 668.9 L339.6 669.0 L341.1 668.9 L342.6 668.9 L344.1 668.8 L345.6 668.8 L347.1 668.8 L348.7 668.8 L350.2 668.8 L351.7 668.7 L353.2 668.7 L354.7 668.7 L356.2 668.7 L357.7 668.7 L359.2 668.7 L360.7 668.6 L362.2 668.6 L363.7 668.6 L365.2 668.6 L366.7 668.6 L368.2 668.6 L369.7 668.6 L371.2 668.5 L372.7 668.5 L374.2 668.5 L375.7 668.5 L377.2 668.6 L378.7 668.6 L380.2 668.6 L381.7 668.6 L383.2 668.5 L384.7 668.5 L386.2 668.4 L387.7 668.4 L389.2 668.4 L390.7 668.4 L392.2 668.5 L393.7 668.4 L395.2 668.4 L396.7 668.4 L398.2 668.4 L399.7 668.3 L401.2 668.4 L402.7 668.3 L404.2 668.3 L405.7 668.3 L407.2 668.3 L408.7 668.2 L410.2 668.2 L411.7 668.2 L413.2 668.2 L414.7 668.2 L416.2 668.1 L417.7 668.0 L419.2 668.0 L420.7 668.1 L422.2 668.1 L423.7 668.1 L425.2 668.0 L426.7 668.0 L428.2 668.0 L429.7 668.1 L431.2 668.0 L432.7 668.1 L434.2 668.1 L435.7 668.0 L437.2 667.9 L438.7 667.8 L440.2 667.8 L441.7 667.8 L443.2 667.8 L444.7 667.9 L446.2 667.8 L447.7 667.9 L449.2 667.8 L450.7 667.8 L452.2 667.8 L453.8 667.8 L455.3 667.7 L456.8 667.7 L458.3 667.6 L459.8 667.6 L461.3 667.6 L462.8 667.6 L464.3 667.6 L465.8 667.6 L467.3 667.6 L468.8 667.5 L470.3 667.5 L471.8 667.5 L473.3 667.5 L474.8 667.5 L476.3 667.5 L477.8 667.4 L479.3 667.3 L480.8 667.4 L482.3 667.4 L483.8 667.4 L485.3 667.3 L486.8 667.3 L488.3 667.3 L489.8 667.3 L491.3 667.2 L492.8 667.2 L494.3 667.2 L495.8 667.2 L497.3 667.2 L498.8 667.2 L500.3 667.3 L501.8 667.2 L503.3 667.2 L504.8 667.2 L506.3 667.1 L507.8 667.1 L509.3 667.1 L510.8 667.1 L512.3 667.1 L513.8 667.0 L515.3 667.1 L516.8 667.1 L518.3 667.1 L519.8 667.1 L521.3 667.1 L522.8 667.1 L524.3 667.0 L525.8 667.0 L527.3 667.1 L528.8 667.1 L530.3 667.0 L531.8 667.0 L533.3 667.0 L534.8 667.0 L536.3 667.1 L537.8 667.0 L539.3 667.0 L540.8 666.9 L542.3 666.9 L543.8 666.9 L545.3 667.0 L546.8 667.0 L548.3 667.0 L549.8 667.0 L551.3 667.0 L552.8 667.0 L554.3 667.0 L555.8 667.0 L557.3 666.9 L558.9 666.8 L560.4 666.9 L561.9 666.9 L563.4 666.9 L564.9 666.9 L566.4 666.9 L567.9 666.9 L569.4 666.9 L570.9 666.8 L572.4 666.7 L573.9 666.7 L575.4 666.7 L576.9 666.8 L578.4 666.8 L579.9 666.8 L581.4 666.8 L582.9 666.8 L584.4 666.8 L585.9 666.8 L587.4 666.8 L588.9 666.8 L590.4 666.7 L591.9 666.7 L593.4 666.8 L594.9 666.8 L596.4 666.7 L597.9 666.7 L599.4 666.6 L600.9 666.6 L602.4 666.7 L603.9 666.7 L605.4 666.7 L606.9 666.7 L608.4 666.6 L609.9 666.6 L611.4 666.7 L612.9 666.7 L614.4 666.7 L615.9 666.7 L617.4 667.7 L618.9 668.9 L620.4 672.6 L621.9 676.3 L623.4 680.0 L624.9 682.5 L626.4 684.4 L627.9 686.2 L629.4 687.0 L630.9 687.8 L632.4 688.5 L633.9 689.3 L635.4 690.2 L636.9 690.6 L638.4 690.6 L639.9 690.6 L641.4 690.7 L642.9 690.6 L644.4 690.6 L645.9 690.6 L647.4 690.6 L648.9 690.7 L650.4 690.7 L651.9 690.6 L653.4 690.5 L654.9 690.8 L656.4 691.3 L657.9 691.8 L659.4 692.2 L660.9 692.7 L662.4 693.0 L664.0 692.4 L665.5 691.7 L667.0 689.1 L668.5 686.3 L670.0 683.5 L671.5 680.7 L673.0 677.9 L674.5 675.5 L676.0 673.3 L677.5 671.0 L679.0 668.9 L680.5 668.6 L682.0 668.4 L683.5 668.1 L685.0 668.0 L686.5 667.8 L688.0 667.9 L689.5 667.9 L691.0 668.0 L692.5 668.1 L694.0 668.1 L695.5 668.1 L697.0 668.2 L698.5 668.2 L700.0 668.3 L701.5 668.3 L703.0 668.3 L704.5 668.3 L706.0 668.3 L707.5 668.3 L709.0 668.3 L710.5 668.3 L712.0 668.3 L713.5 668.3 L715.0 668.3 L716.5 668.3 L718.0 668.2 L719.5 668.2 L721.0 668.2 L722.5 668.1 L724.0 668.1 L725.5 668.2 L727.0 668.2 L728.5 668.2 L730.0 668.1 L731.5 668.1 L733.0 668.1 L734.5 668.2 L736.0 668.2 L737.5 668.1 L739.0 668.1 L740.5 668.1 L742.0 668.1 L743.5 668.0 L745.0 668.0 L746.5 668.0 L748.0 668.1 L749.5 668.1 L751.0 668.1 L752.5 668.0 L754.0 668.1 L755.5 668.1 L757.0 668.1 L758.5 668.0 L760.0 668.0 L761.5 668.0 L763.0 667.9 L764.5 667.9 L766.0 667.8 L767.5 667.8 L769.1 667.9 L770.6 667.9 L772.1 668.0 L773.6 667.9 L775.1 667.9 L776.6 667.9 L778.1 667.9 L779.6 667.9 L781.1 667.9 L782.6 667.9 L784.1 667.8 L785.6 667.8 L787.1 667.9 L788.6 667.9 L790.1 667.9 L791.6 667.9 L793.1 667.8 L794.6 667.8 L796.1 667.8 L797.6 667.8 L799.1 667.8 L800.6 667.8 L802.1 667.8 L803.6 667.8 L805.1 667.8 L806.6 667.8 L808.1 667.8 L809.6 667.8 L811.1 667.7 L812.6 667.7 L814.1 667.7 L815.6 667.7 L817.1 667.7 L818.6 667.7 L820.1 667.7 L821.6 667.7 L823.1 667.7 L824.6 667.7 L826.1 667.6 L827.6 667.6 L829.1 667.6 L830.6 667.6 L832.1 667.6 L833.6 667.6 L835.1 667.6 L836.6 667.5 L838.1 667.5 L839.6 667.5 L841.1 667.6 L842.6 667.6 L844.1 667.5 L845.6 667.5 L847.1 667.5 L848.6 667.5 L850.1 667.5 L851.6 667.5 L853.1 667.5 L854.6 667.5 L856.1 667.5 L857.6 667.5 L859.1 667.5 L860.6 667.4 L862.1 667.5 L863.6 667.4 L865.1 667.4 L866.6 667.4 L868.1 667.5 L869.6 667.5 L871.1 667.5 L872.6 667.4 L874.2 667.4 L875.7 667.4 L877.2 667.4 L878.7 667.4 L880.2 667.4 L881.7 667.4 L883.2 667.4 L884.7 667.3 L886.2 667.3 L887.7 667.3 L889.2 667.3 L890.7 667.3 L892.2 667.3 L893.7 667.3 L895.2 667.3 L896.7 667.3 L898.2 667.3 L899.7 667.3 L901.2 667.3 L902.7 667.3 L904.2 667.3 L905.7 667.2 L907.2 667.2 L908.7 667.2 L910.2 667.2 L911.7 667.2 L913.2 667.2 L914.7 667.3 L916.2 667.3 L917.7 667.3 L919.2 667.2 L920.7 667.2 L922.2 667.1 L923.7 667.1 L925.2 667.1 L926.7 667.1 L928.2 667.1 L929.7 667.1 L931.2 667.1 L932.7 667.1 L934.2 667.1 L935.7 667.1 L937.2 667.1 L938.7 667.1 L940.2 667.1 L941.7 667.0 L943.2 667.0 L944.7 667.1 L946.2 667.1 L947.7 667.0 L949.2 667.0 L950.7 667.0 L952.2 667.0 L953.7 667.0 L955.2 667.0 L956.7 667.0 L958.2 667.0 L959.7 667.0 L961.2 667.0 L962.7 667.0 L964.2 667.0 L965.7 667.0 L967.2 667.0 L968.7 667.0 L970.2 667.0 L971.7 667.0 L973.2 667.0 L974.7 667.0 L976.2 666.9 L977.7 666.9 L979.3 666.9 L980.8 667.0 L982.3 667.0 L983.8 667.0 L985.3 666.9 L986.8 666.9 L988.3 666.9 L989.8 667.0 L991.3 667.0 L992.8 666.9 L994.3 666.9 L995.8 666.9 L997.3 666.9 L998.8 666.8 L1000.3 666.8 L1001.8 666.8 L1003.3 666.8 L1004.8 666.9 L1006.3 666.9 L1007.8 666.9 L1009.3 666.9 L1010.8 666.9 L1012.3 666.9 L1013.8 666.9 L1015.3 666.9 L1016.8 666.9 L1018.3 666.8 L1019.8 666.8 L1021.3 666.8 L1022.8 666.9 L1024.3 666.8 L1025.8 666.8 L1027.3 666.8 L1028.8 666.9 L1030.3 666.9 L1031.8 667.0 L1033.3 666.9 L1034.8 666.8 L1036.3 666.8 L1037.8 666.8 L1039.3 666.8 L1040.8 666.8 L1042.3 666.8 L1043.8 666.8 L1045.3 666.8 L1046.8 666.8 L1048.3 666.9 L1049.8 666.9 L1051.3 666.8 L1052.8 666.8 L1054.3 666.8 L1055.8 666.8 L1057.3 666.9 L1058.8 666.9 L1060.3 666.8 L1061.8 666.8 L1063.3 666.8 L1064.8 666.9 L1066.3 666.9 L1067.8 666.8 L1069.3 666.8 L1070.8 666.7 L1072.3 666.8 L1073.8 666.7 L1075.3 666.8 L1076.8 666.8 L1078.3 666.8 L1079.8 666.8 L1081.3 666.8 L1082.8 666.7 L1084.4 666.8 L1085.9 666.7 L1087.4 666.8 L1088.9 666.7 L1090.4 666.7 L1091.9 666.7 L1093.4 666.7 L1094.9 666.7 L1096.4 666.7 L1097.9 666.7 L1099.4 666.7 L1100.9 666.7 L1102.4 666.7 L1103.9 666.7 L1105.4 666.7 L1106.9 666.7 L1108.4 666.7 L1109.9 666.7 L1111.4 666.7 L1112.9 666.7 L1114.4 666.7 L1115.9 666.7 L1117.4 666.7 L1118.9 666.7 L1120.4 666.7 L1121.9 666.6 L1123.4 666.6 L1124.9 666.6 L1126.4 666.7 L1127.9 666.8 L1129.4 666.8 L1130.9 666.8 L1132.4 666.8 L1133.9 666.8 L1135.4 666.8 L1136.9 666.8 L1138.4 666.8 L1139.9 666.7 L1141.4 666.7 L1142.9 666.7 L1144.4 666.8 L1145.9 666.8 L1147.4 666.8 L1148.9 666.8 L1150.4 666.8 L1151.9 666.8 L1153.4 666.8 L1154.9 666.8 L1156.4 666.8 L1157.9 666.8 L1159.4 666.8 L1160.9 666.8 L1162.4 666.8 L1163.9 666.9 L1165.4 666.9 L1166.9 666.8 L1168.4 666.8 L1169.9 666.7 L1171.4 666.7 L1172.9 666.8 L1174.4 666.9 L1175.9 667.0 L1177.4 666.9 L1178.9 666.9 L1180.4 666.9 L1181.9 666.9 L1183.4 666.8 L1184.9 666.8 L1186.4 666.9 L1187.9 667.0 L1189.5 666.9 L1191.0 666.9 L1192.5 666.9 L1194.0 666.8 L1195.5 666.8 L1197.0 666.8 L1198.5 666.8 L1200.0 666.9 L1201.5 666.9 L1203.0 667.0 L1204.5 667.0 L1206.0 666.9 L1207.5 666.9 L1209.0 666.9 L1210.5 666.9 L1212.0 667.0 L1213.5 667.0 L1215.0 667.0 L1216.5 667.0 L1218.0 667.0 L1219.5 667.0 L1221.0 667.0 L1222.5 667.1 L1224.0 667.0 L1225.5 667.0 L1227.0 666.9 L1228.5 667.0 L1230.0 667.0 L1231.5 667.0 L1233.0 667.0 L1234.5 667.0 L1236.0 667.0 L1237.5 666.9 L1239.0 666.9 L1240.5 667.0" stroke="#4b0082" stroke-width="2" fill="none" stroke-linejoin="bevel"/>
<rect x="1181" y="669.5" width="102.5" height="86" fill="#fff" fill-opacity="0.95" stroke="#e5e5e5" stroke-opacity="0.5" stroke-width="1"/>
<path d="M1191 689.5H1211" stroke="#2f4f4f" stroke-width="2"/>
<text x="1216" y="693.1" font-size="13.3" fill="#444">W-Axis</text>
<path d="M1191 712.5H1211" stroke="#ff00ff" stroke-width="2"/>
<text x="1216" y="716.1" font-size="13.3" fill="#444">X-Axis (i)</text>
<path d="M1191 735.5H1211" stroke="#9a3ce0" stroke-width="2"/>
<text x="1216" y="739.1" font-size="13.3" fill="#444">Y-Axis (j)</text>
</g>
<path d="M138.5 659.0V751.0M138.0 750.5H1294.0M158.5 750.5V755.0M189.5 748.0V757.0M220.5 750.5V755.0M250.5 750.5V755.0M281.5 750.5V755.0M312.5 750.5V755.0M342.5 748.0V757.0M373.5 750.5V755.0M404.5 750.5V755.0M434.5 750.5V755.0M465.5 750.5V755.0M496.5 748.0V757.0M527.5 750.5V755.0M557.5 750.5V755.0M588.5 750.5V755.0M619.5 750.5V755.0M649.5 748.0V757.0M680.5 750.5V755.0M711.5 750.5V755.0M741.5 750.5V755.0M772.5 750.5V755.0M803.5 748.0V757.0M833.5 750.5V755.0M864.5 750.5V755.0M895.5 750.5V755.0M925.5 750.5V755.0M956.5 748.0V757.0M987.5 750.5V755.0M1018.5 750.5V755.0M1048.5 750.5V755.0M1079.5 750.5V755.0M1110.5 748.0V757.0M1140.5 750.5V755.0M1171.5 750.5V755.0M1202.5 750.5V755.0M1232.5 750.5V755.0M1263.5 748.0V757.0M132.0 749.5H141.0M134.0 745.5H138.5M134.0 740.5H138.5M134.0 736.5H138.5M134.0 732.5H138.5M132.0 727.5H141.0M134.0 723.5H138.5M134.0 719.5H138.5M134.0 714.5H138.5M134.0 710.5H138.5M132.0 706.5H141.0M134.0 702.5H138.5M134.0 697.5H138.5M134.0 693.5H138.5M134.0 689.5H138.5M132.0 684.5H141.0M134.0 680.5H138.5M134.0 676.5H138.5M134.0 671.5H138.5M134.0 667.5H138.5M132.0 663.5H141.0" stroke="#000" stroke-width="1" fill="none"/>
<text x="189.5" y="770" font-size="11" fill="#444" text-anchor="middle">0</text>
<text x="342.9" y="770" font-size="11" fill="#444" text-anchor="middle">5</text>
<text x="496.4" y="770" font-size="11" fill="#444" text-anchor="middle">10</text>
<text x="649.8" y="770" font-size="11" fill="#444" text-anchor="middle">15</text>
<text x="803.2" y="770" font-size="11" fill="#444" text-anchor="middle">20</text>
<text x="956.6" y="770" font-size="11" fill="#444" text-anchor="middle">25</text>
<text x="1110.1" y="770" font-size="11" fill="#444" text-anchor="middle">30</text>
<text x="1263.5" y="770" font-size="11" fill="#444" text-anchor="middle">35</text>
<text x="127" y="666.1" font-size="11" fill="#444" text-anchor="end">1</text>
<text x="127" y="687.6" font-size="11" fill="#444" text-anchor="end">0.5</text>
<text x="127" y="709.1" font-size="11" fill="#444" text-anchor="end">0</text>
<text x="127" y="730.7" font-size="11" fill="#444" text-anchor="end">-0.5</text>
<text x="127" y="752.2" font-size="11" fill="#444" text-anchor="end">-1</text>
<text x="139" y="652" font-size="13.3" font-weight="bold" fill="#444">Quaternions</text>
<text x="716.5" y="788.7" font-size="13.3" font-style="italic" fill="#444" text-anchor="middle">Time (s)</text>
<text transform="translate(103.6,705.0) rotate(-90)" x="0" y="0" font-size="13.3" font-style="italic" fill="#444" text-anchor="middle">Quaternion (Deg)</text>
<g transform="translate(1308,669)"><path d="M-2.9 -7.95 L0.12 -10 L3.13 -7.35 L-2.77 -3.37Z" fill="#00b04f" transform="rotate(0)"/><path d="M-2.9 -7.95 L0.12 -10 L3.13 -7.35 L-2.77 -3.37Z" fill="#00a5a5" transform="rotate(45)"/><path d="M-2.9 -7.95 L0.12 -10 L3.13 -7.35 L-2.77 -3.37Z" fill="#3d9ce0" transform="rotate(90)"/><path d="M-2.9 -7.95 L0.12 -10 L3.13 -7.35 L-2.77 -3.37Z" fill="#8c0090" transform="rotate(135)"/><path d="M-2.9 -7.95 L0.12 -10 L3.13 -7.35 L-2.77 -3.37Z" fill="#ee0060" transform="rotate(180)"/><path d="M-2.9 -7.95 L0.12 -10 L3.13 -7.35 L-2.77 -3.37Z" fill="#ee4a22" transform="rotate(225)"/><path d="M-2.9 -7.95 L0.12 -10 L3.13 -7.35 L-2.77 -3.37Z" fill="#f6a423" transform="rotate(270)"/><path d="M-2.9 -7.95 L0.12 -10 L3.13 -7.35 L-2.77 -3.37Z" fill="#9ddc1e" transform="rotate(315)"/></g>
<rect x="1293" y="684" width="2" height="30" fill="#2a98de"/>
<g transform="translate(1301,691)" fill="#a1a6a9"><path d="M8.5 0 L12 4 L9.7 4 L9.7 7.3 L13 7.3 L13 5 L17 8.5 L13 12 L13 9.7 L9.7 9.7 L9.7 13 L12 13 L8.5 17 L5 13 L7.3 13 L7.3 9.7 L4 9.7 L4 12 L0 8.5 L4 5 L4 7.3 L7.3 7.3 L7.3 4 L5 4Z"/></g>
<g transform="translate(1301,721)"><path d="M0.5 8 V16.5 H16.5 V12 M0.5 6 V0.5 H6" fill="none" stroke="#a1a6a9" stroke-width="1" stroke-dasharray="2 1.3"/>
<circle cx="11.3" cy="5.6" r="4.4" fill="#fff" stroke="#a1a6a9" stroke-width="1.9"/><path d="M8.2 8.7 L3.3 13.6" stroke="#a1a6a9" stroke-width="2.2"/></g>
<path d="M1303 744.5H1313" stroke="#cfd2d4" stroke-width="1"/>
<clipPath id="clip4"><rect x="138.5" y="824.5" width="1155.0" height="91.0"/></clipPath>
<path d="M188.5 824.5V915.5M342.5 824.5V915.5M495.5 824.5V915.5M649.5 824.5V915.5M802.5 824.5V915.5M956.5 824.5V915.5M1109.5 824.5V915.5M1263.5 824.5V915.5M138.5 835.5H1293.5M138.5 848.5H1293.5M138.5 861.5H1293.5M138.5 874.5H1293.5M138.5 887.5H1293.5M138.5 900.5H1293.5M138.5 913.5H1293.5" stroke="#e5e5e5" stroke-width="1" fill="none"/>
<rect x="138.5" y="824.5" width="1155.0" height="91.0" fill="none" stroke="#e5e5e5" stroke-width="1"/>
<g clip-path="url(#clip4)">
<path d="M191.0 878.8 L192.5 878.0 L194.0 877.5 L195.5 877.0 L197.0 876.3 L198.5 875.3 L200.0 874.7 L201.5 874.5 L203.0 873.7 L204.5 873.0 L206.0 872.6 L207.5 871.8 L209.0 871.1 L210.5 870.4 L212.0 869.6 L213.5 868.9 L215.0 868.6 L216.5 868.7 L218.0 868.1 L219.5 867.8 L221.0 867.2 L222.5 866.5 L224.0 866.4 L225.5 866.5 L227.0 866.3 L228.5 865.8 L230.0 865.2 L231.5 864.8 L233.0 864.9 L234.5 864.6 L236.0 863.7 L237.5 863.4 L239.0 863.7 L240.5 863.6 L242.0 863.2 L243.6 862.5 L245.1 862.2 L246.6 862.5 L248.1 862.2 L249.6 862.0 L251.1 861.9 L252.6 861.7 L254.1 861.7 L255.6 861.4 L257.1 861.6 L258.6 861.6 L260.1 861.0 L261.6 860.7 L263.1 860.4 L264.6 860.4 L266.1 859.9 L267.6 859.5 L269.1 859.7 L270.6 859.8 L272.1 859.1 L273.6 858.6 L275.1 858.8 L276.6 859.0 L278.1 859.2 L279.6 858.9 L281.1 858.9 L282.6 859.0 L284.1 858.8 L285.6 858.8 L287.1 859.0 L288.6 859.1 L290.1 859.0 L291.6 858.8 L293.1 858.5 L294.6 858.4 L296.1 858.3 L297.6 858.4 L299.1 858.4 L300.6 858.5 L302.1 858.7 L303.6 858.6 L305.1 858.5 L306.6 858.6 L308.1 858.5 L309.6 858.5 L311.1 858.5 L312.6 858.4 L314.1 858.3 L315.6 857.9 L317.1 857.6 L318.6 858.1 L320.1 858.4 L321.6 858.1 L323.1 858.0 L324.6 857.8 L326.1 858.3 L327.6 858.1 L329.1 857.6 L330.6 857.7 L332.1 857.5 L333.6 857.3 L335.1 857.3 L336.6 857.4 L338.1 857.4 L339.6 857.6 L341.1 857.4 L342.6 857.3 L344.1 857.7 L345.6 857.8 L347.1 857.3 L348.7 856.7 L350.2 857.0 L351.7 857.6 L353.2 857.3 L354.7 857.5 L356.2 857.5 L357.7 857.3 L359.2 857.1 L360.7 857.2 L362.2 857.3 L363.7 857.1 L365.2 857.4 L366.7 857.5 L368.2 857.0 L369.7 857.1 L371.2 857.5 L372.7 857.2 L374.2 857.0 L375.7 857.1 L377.2 857.1 L378.7 857.1 L380.2 857.3 L381.7 857.2 L383.2 857.4 L384.7 857.4 L386.2 856.9 L387.7 857.4 L389.2 857.9 L390.7 857.5 L392.2 857.1 L393.7 856.8 L395.2 857.1 L396.7 857.3 L398.2 856.9 L399.7 857.0 L401.2 857.3 L402.7 857.4 L404.2 857.5 L405.7 857.6 L407.2 857.3 L408.7 857.0 L410.2 857.0 L411.7 857.3 L413.2 857.3 L414.7 857.3 L416.2 857.1 L417.7 857.1 L419.2 857.2 L420.7 857.1 L422.2 856.6 L423.7 856.9 L425.2 857.3 L426.7 856.9 L428.2 856.8 L429.7 856.8 L431.2 856.5 L432.7 856.5 L434.2 856.5 L435.7 856.6 L437.2 856.8 L438.7 856.9 L440.2 856.9 L441.7 856.8 L443.2 856.7 L444.7 856.6 L446.2 856.4 L447.7 856.6 L449.2 856.9 L450.7 856.7 L452.2 856.7 L453.8 856.7 L455.3 856.6 L456.8 856.7 L458.3 857.1 L459.8 857.0 L461.3 856.6 L462.8 856.5 L464.3 857.1 L465.8 857.1 L467.3 857.0 L468.8 857.1 L470.3 857.1 L471.8 857.1 L473.3 856.7 L474.8 856.7 L476.3 857.4 L477.8 857.4 L479.3 857.2 L480.8 857.2 L482.3 857.1 L483.8 857.2 L485.3 857.3 L486.8 857.7 L488.3 857.6 L489.8 857.2 L491.3 857.1 L492.8 857.0 L494.3 856.8 L495.8 857.2 L497.3 857.2 L498.8 857.3 L500.3 857.8 L501.8 857.5 L503.3 857.2 L504.8 857.2 L506.3 857.4 L507.8 857.6 L509.3 857.5 L510.8 857.3 L512.3 857.4 L513.8 857.4 L515.3 857.3 L516.8 857.1 L518.3 856.9 L519.8 857.1 L521.3 857.3 L522.8 857.6 L524.3 858.1 L525.8 858.2 L527.3 857.9 L528.8 857.9 L530.3 857.9 L531.8 857.4 L533.3 857.9 L534.8 857.8 L536.3 857.3 L537.8 857.5 L539.3 857.8 L540.8 857.7 L542.3 857.6 L543.8 857.7 L545.3 857.3 L546.8 857.4 L548.3 857.7 L549.8 857.5 L551.3 857.3 L552.8 857.4 L554.3 857.7 L555.8 857.9 L557.3 857.8 L558.9 857.8 L560.4 857.7 L561.9 857.7 L563.4 857.7 L564.9 857.4 L566.4 857.4 L567.9 857.6 L569.4 857.8 L570.9 857.9 L572.4 857.6 L573.9 857.4 L575.4 857.8 L576.9 857.7 L578.4 857.6 L579.9 857.7 L581.4 857.5 L582.9 857.8 L584.4 857.7 L585.9 857.7 L587.4 857.9 L588.9 857.6 L590.4 857.6 L591.9 857.6 L593.4 857.6 L594.9 857.8 L596.4 857.7 L597.9 857.9 L599.4 858.4 L600.9 858.4 L602.4 858.1 L603.9 857.5 L605.4 857.6 L606.9 858.0 L608.4 858.2 L609.9 858.1 L611.4 858.1 L612.9 858.2 L614.4 858.0 L615.9 858.3 L617.4 858.4 L618.9 858.1 L620.4 858.5 L621.9 858.4 L623.4 858.2 L624.9 858.7 L626.4 858.6 L627.9 858.6 L629.4 858.7 L630.9 858.6 L632.4 858.6 L633.9 858.6 L635.4 858.5 L636.9 858.7 L638.4 858.8 L639.9 858.7 L641.4 858.5 L642.9 858.4 L644.4 858.9 L645.9 859.1 L647.4 858.9 L648.9 858.7 L650.4 858.5 L651.9 858.7 L653.4 859.1 L654.9 859.1 L656.4 859.1 L657.9 859.0 L659.4 859.0 L660.9 858.9 L662.4 858.7 L664.0 858.7 L665.5 858.8 L667.0 859.1 L668.5 858.8 L670.0 858.6 L671.5 858.7 L673.0 858.6 L674.5 858.5 L676.0 858.6 L677.5 858.9 L679.0 859.3 L680.5 859.1 L682.0 858.8 L683.5 858.9 L685.0 858.9 L686.5 858.8 L688.0 859.1 L689.5 859.2 L691.0 859.0 L692.5 858.9 L694.0 859.2 L695.5 859.2 L697.0 858.9 L698.5 858.9 L700.0 858.8 L701.5 859.0 L703.0 859.0 L704.5 859.1 L706.0 859.2 L707.5 858.9 L709.0 858.4 L710.5 858.9 L712.0 859.2 L713.5 859.3 L715.0 859.4 L716.5 859.0 L718.0 859.1 L719.5 859.2 L721.0 859.1 L722.5 859.0 L724.0 859.1 L725.5 859.5 L727.0 859.3 L728.5 859.4 L730.0 859.4 L731.5 859.2 L733.0 859.0 L734.5 858.6 L736.0 859.3 L737.5 859.9 L739.0 859.7 L740.5 859.2 L742.0 859.0 L743.5 859.4 L745.0 859.4 L746.5 859.4 L748.0 859.2 L749.5 859.1 L751.0 859.1 L752.5 859.1 L754.0 859.3 L755.5 859.3 L757.0 859.2 L758.5 859.2 L760.0 859.3 L761.5 859.5 L763.0 859.6 L764.5 859.5 L766.0 859.2 L767.5 859.1 L769.1 859.5 L770.6 859.4 L772.1 859.2 L773.6 859.2 L775.1 859.5 L776.6 859.6 L778.1 859.2 L779.6 859.4 L781.1 859.8 L782.6 859.8 L784.1 859.7 L785.6 859.7 L787.1 859.5 L788.6 859.4 L790.1 859.3 L791.6 859.3 L793.1 859.5 L794.6 859.6 L796.1 859.5 L797.6 859.7 L799.1 859.7 L800.6 859.3 L802.1 859.2 L803.6 859.2 L805.1 859.1 L806.6 859.3 L808.1 859.4 L809.6 859.2 L811.1 859.2 L812.6 859.6 L814.1 859.7 L815.6 859.8 L817.1 859.8 L818.6 859.6 L820.1 859.7 L821.6 859.9 L823.1 859.8 L824.6 859.5 L826.1 859.4 L827.6 859.4 L829.1 859.5 L830.6 859.7 L832.1 860.0 L833.6 860.2 L835.1 860.1 L836.6 860.0 L838.1 860.0 L839.6 860.3 L841.1 860.5 L842.6 860.5 L844.1 860.3 L845.6 859.9 L847.1 860.1 L848.6 860.0 L850.1 859.9 L851.6 859.7 L853.1 859.8 L854.6 860.0 L856.1 860.0 L857.6 860.0 L859.1 859.5 L860.6 859.6 L862.1 860.2 L863.6 859.9 L865.1 859.5 L866.6 859.7 L868.1 859.7 L869.6 859.4 L871.1 859.7 L872.6 860.1 L874.2 859.6 L875.7 859.0 L877.2 859.1 L878.7 859.7 L880.2 859.7 L881.7 859.4 L883.2 859.0 L884.7 858.8 L886.2 858.6 L887.7 858.9 L889.2 859.1 L890.7 858.3 L892.2 857.8 L893.7 858.2 L895.2 858.5 L896.7 858.3 L898.2 858.3 L899.7 858.6 L901.2 858.5 L902.7 857.7 L904.2 857.5 L905.7 857.5 L907.2 857.4 L908.7 857.6 L910.2 857.6 L911.7 857.3 L913.2 857.2 L914.7 857.2 L916.2 857.2 L917.7 857.2 L919.2 857.1 L920.7 857.0 L922.2 857.1 L923.7 857.1 L925.2 856.9 L926.7 856.9 L928.2 856.9 L929.7 856.7 L931.2 857.1 L932.7 857.3 L934.2 856.8 L935.7 856.9 L937.2 856.7 L938.7 856.9 L940.2 856.9 L941.7 856.7 L943.2 856.6 L944.7 856.5 L946.2 856.5 L947.7 857.0 L949.2 856.9 L950.7 856.4 L952.2 856.7 L953.7 857.1 L955.2 856.8 L956.7 856.3 L958.2 856.6 L959.7 856.9 L961.2 856.6 L962.7 856.2 L964.2 856.3 L965.7 856.7 L967.2 856.9 L968.7 856.9 L970.2 856.9 L971.7 856.7 L973.2 856.8 L974.7 856.8 L976.2 856.8 L977.7 856.6 L979.3 856.5 L980.8 856.7 L982.3 856.7 L983.8 856.5 L985.3 856.7 L986.8 856.9 L988.3 856.8 L989.8 856.5 L991.3 856.7 L992.8 857.2 L994.3 856.9 L995.8 856.2 L997.3 856.2 L998.8 856.3 L1000.3 856.2 L1001.8 856.2 L1003.3 856.5 L1004.8 856.9 L1006.3 857.0 L1007.8 857.0 L1009.3 856.6 L1010.8 856.7 L1012.3 856.6 L1013.8 856.4 L1015.3 856.3 L1016.8 856.5 L1018.3 856.9 L1019.8 856.6 L1021.3 856.4 L1022.8 856.5 L1024.3 856.5 L1025.8 856.7 L1027.3 856.6 L1028.8 856.6 L1030.3 856.3 L1031.8 856.2 L1033.3 856.1 L1034.8 856.4 L1036.3 857.0 L1037.8 856.8 L1039.3 856.7 L1040.8 857.0 L1042.3 856.9 L1043.8 856.3 L1045.3 856.1 L1046.8 855.9 L1048.3 855.8 L1049.8 856.0 L1051.3 856.2 L1052.8 856.5 L1054.3 856.3 L1055.8 856.2 L1057.3 856.4 L1058.8 856.4 L1060.3 856.4 L1061.8 856.0 L1063.3 855.9 L1064.8 856.5 L1066.3 856.6 L1067.8 856.2 L1069.3 856.1 L1070.8 856.5 L1072.3 856.3 L1073.8 856.4 L1075.3 856.4 L1076.8 856.3 L1078.3 856.4 L1079.8 856.8 L1081.3 856.8 L1082.8 856.3 L1084.4 856.5 L1085.9 856.5 L1087.4 856.4 L1088.9 856.1 L1090.4 856.2 L1091.9 856.6 L1093.4 856.3 L1094.9 856.5 L1096.4 856.7 L1097.9 856.5 L1099.4 856.3 L1100.9 856.0 L1102.4 856.2 L1103.9 856.2 L1105.4 856.4 L1106.9 856.8 L1108.4 856.6 L1109.9 856.2 L1111.4 856.2 L1112.9 856.3 L1114.4 856.4 L1115.9 856.6 L1117.4 856.5 L1118.9 856.5 L1120.4 856.8 L1121.9 857.1 L1123.4 856.8 L1124.9 856.6 L1126.4 856.7 L1127.9 856.4 L1129.4 856.7 L1130.9 856.9 L1132.4 856.7 L1133.9 856.7 L1135.4 856.7 L1136.9 856.4 L1138.4 856.8 L1139.9 857.1 L1141.4 856.8 L1142.9 856.9 L1144.4 857.0 L1145.9 856.8 L1147.4 856.7 L1148.9 856.7 L1150.4 856.7 L1151.9 856.7 L1153.4 857.1 L1154.9 857.0 L1156.4 856.7 L1157.9 856.9 L1159.4 856.7 L1160.9 856.8 L1162.4 856.8 L1163.9 856.6 L1165.4 856.6 L1166.9 856.6 L1168.4 856.8 L1169.9 857.0 L1171.4 857.0 L1172.9 856.6 L1174.4 856.5 L1175.9 856.6 L1177.4 856.6 L1178.9 856.9 L1180.4 857.0 L1181.9 856.7 L1183.4 856.9 L1184.9 857.1 L1186.4 857.2 L1187.9 856.7 L1189.5 856.4 L1191.0 856.7 L1192.5 856.5 L1194.0 856.6 L1195.5 856.5 L1197.0 856.1 L1198.5 856.1 L1200.0 856.5 L1201.5 857.0 L1203.0 856.9 L1204.5 856.4 L1206.0 856.1 L1207.5 856.3 L1209.0 856.6 L1210.5 856.7 L1212.0 856.5 L1213.5 856.3 L1215.0 856.2 L1216.5 856.3 L1218.0 856.4 L1219.5 855.9 L1221.0 856.4 L1222.5 857.0 L1224.0 856.8 L1225.5 856.8 L1227.0 856.6 L1228.5 856.7 L1230.0 856.7 L1231.5 856.8 L1233.0 857.1 L1234.5 856.4 L1236.0 856.5 L1237.5 857.2 L1239.0 857.0 L1240.5 856.8" stroke="#b9d51e" stroke-width="2" fill="none" stroke-linejoin="bevel"/>
<rect x="1155.5" y="834.5" width="128.0" height="40" fill="#fff" fill-opacity="0.95" stroke="#e5e5e5" stroke-opacity="0.5" stroke-width="1"/>
<path d="M1165.5 854.5H1185.5" stroke="#b9d51e" stroke-width="2"/>
<text x="1190.5" y="858.1" font-size="13.3" fill="#444">Pressure (Pa)</text>
</g>
<path d="M138.5 824.0V916.0M138.0 915.5H1294.0M157.5 915.5V920.0M188.5 913.0V922.0M219.5 915.5V920.0M249.5 915.5V920.0M280.5 915.5V920.0M311.5 915.5V920.0M342.5 913.0V922.0M372.5 915.5V920.0M403.5 915.5V920.0M434.5 915.5V920.0M464.5 915.5V920.0M495.5 913.0V922.0M526.5 915.5V920.0M557.5 915.5V920.0M587.5 915.5V920.0M618.5 915.5V920.0M649.5 913.0V922.0M679.5 915.5V920.0M710.5 915.5V920.0M741.5 915.5V920.0M772.5 915.5V920.0M802.5 913.0V922.0M833.5 915.5V920.0M864.5 915.5V920.0M894.5 915.5V920.0M925.5 915.5V920.0M956.5 913.0V922.0M987.5 915.5V920.0M1017.5 915.5V920.0M1048.5 915.5V920.0M1079.5 915.5V920.0M1109.5 913.0V922.0M1140.5 915.5V920.0M1171.5 915.5V920.0M1202.5 915.5V920.0M1232.5 915.5V920.0M1263.5 913.0V922.0M132.0 913.5H141.0M134.0 910.5H138.5M134.0 908.5H138.5M134.0 905.5H138.5M134.0 903.5H138.5M132.0 900.5H141.0M134.0 897.5H138.5M134.0 895.5H138.5M134.0 892.5H138.5M134.0 890.5H138.5M132.0 887.5H141.0M134.0 884.5H138.5M134.0 882.5H138.5M134.0 879.5H138.5M134.0 876.5H138.5M132.0 874.5H141.0M134.0 871.5H138.5M134.0 869.5H138.5M134.0 866.5H138.5M134.0 863.5H138.5M132.0 861.5H141.0M134.0 858.5H138.5M134.0 856.5H138.5M134.0 853.5H138.5M134.0 850.5H138.5M132.0 848.5H141.0M134.0 845.5H138.5M134.0 843.5H138.5M134.0 840.5H138.5M134.0 837.5H138.5M132.0 835.5H141.0M134.0 832.5H138.5M134.0 830.5H138.5M134.0 827.5H138.5M134.0 824.5H138.5" stroke="#000" stroke-width="1" fill="none"/>
<text x="188.5" y="935" font-size="11" fill="#444" text-anchor="middle">0</text>
<text x="342.1" y="935" font-size="11" fill="#444" text-anchor="middle">5</text>
<text x="495.6" y="935" font-size="11" fill="#444" text-anchor="middle">10</text>
<text x="649.2" y="935" font-size="11" fill="#444" text-anchor="middle">15</text>
<text x="802.8" y="935" font-size="11" fill="#444" text-anchor="middle">20</text>
<text x="956.3" y="935" font-size="11" fill="#444" text-anchor="middle">25</text>
<text x="1109.9" y="935" font-size="11" fill="#444" text-anchor="middle">30</text>
<text x="1263.5" y="935" font-size="11" fill="#444" text-anchor="middle">35</text>
<text x="127" y="838.1" font-size="11" fill="#444" text-anchor="end">99680</text>
<text x="127" y="851.1" font-size="11" fill="#444" text-anchor="end">99660</text>
<text x="127" y="864.1" font-size="11" fill="#444" text-anchor="end">99640</text>
<text x="127" y="877.2" font-size="11" fill="#444" text-anchor="end">99620</text>
<text x="127" y="890.2" font-size="11" fill="#444" text-anchor="end">99600</text>
<text x="127" y="903.2" font-size="11" fill="#444" text-anchor="end">99580</text>
<text x="127" y="916.3" font-size="11" fill="#444" text-anchor="end">99560</text>
<text x="139" y="817" font-size="13.3" font-weight="bold" fill="#444">Pressure</text>
<text x="716.5" y="953.7" font-size="13.3" font-style="italic" fill="#444" text-anchor="middle">Time (s)</text>
<text transform="translate(90,870.0) rotate(-90)" x="0" y="0" font-size="13.3" font-style="italic" fill="#444" text-anchor="middle">Pressure (Pa)</text>
<g transform="translate(1308,834)"><path d="M-2.9 -7.95 L0.12 -10 L3.13 -7.35 L-2.77 -3.37Z" fill="#00b04f" transform="rotate(0)"/><path d="M-2.9 -7.95 L0.12 -10 L3.13 -7.35 L-2.77 -3.37Z" fill="#00a5a5" transform="rotate(45)"/><path d="M-2.9 -7.95 L0.12 -10 L3.13 -7.35 L-2.77 -3.37Z" fill="#3d9ce0" transform="rotate(90)"/><path d="M-2.9 -7.95 L0.12 -10 L3.13 -7.35 L-2.77 -3.37Z" fill="#8c0090" transform="rotate(135)"/><path d="M-2.9 -7.95 L0.12 -10 L3.13 -7.35 L-2.77 -3.37Z" fill="#ee0060" transform="rotate(180)"/><path d="M-2.9 -7.95 L0.12 -10 L3.13 -7.35 L-2.77 -3.37Z" fill="#ee4a22" transform="rotate(225)"/><path d="M-2.9 -7.95 L0.12 -10 L3.13 -7.35 L-2.77 -3.37Z" fill="#f6a423" transform="rotate(270)"/><path d="M-2.9 -7.95 L0.12 -10 L3.13 -7.35 L-2.77 -3.37Z" fill="#9ddc1e" transform="rotate(315)"/></g>
<rect x="1293" y="849" width="2" height="30" fill="#2a98de"/>
<g transform="translate(1301,856)" fill="#a1a6a9"><path d="M8.5 0 L12 4 L9.7 4 L9.7 7.3 L13 7.3 L13 5 L17 8.5 L13 12 L13 9.7 L9.7 9.7 L9.7 13 L12 13 L8.5 17 L5 13 L7.3 13 L7.3 9.7 L4 9.7 L4 12 L0 8.5 L4 5 L4 7.3 L7.3 7.3 L7.3 4 L5 4Z"/></g>
<g transform="translate(1301,886)"><path d="M0.5 8 V16.5 H16.5 V12 M0.5 6 V0.5 H6" fill="none" stroke="#a1a6a9" stroke-width="1" stroke-dasharray="2 1.3"/>
<circle cx="11.3" cy="5.6" r="4.4" fill="#fff" stroke="#a1a6a9" stroke-width="1.9"/><path d="M8.2 8.7 L3.3 13.6" stroke="#a1a6a9" stroke-width="2.2"/></g>
<path d="M1303 909.5H1313" stroke="#cfd2d4" stroke-width="1"/>
</svg>
<svg style="position:absolute;left:0;top:0;overflow:visible" width="1920" height="1080" viewBox="0 0 1920 1080"><g transform="matrix(1.01001 -0.00430 0.00695 1.00104 1357.54 137.31)">
<defs>
<style type="text/css">#figure_1 *{stroke-linejoin: round; stroke-linecap: butt}</style>
</defs>
<g id="figure_1">
<g id="patch_1">
<path d="M 0 511.2 
L 511.2 511.2 
L 511.2 0 
L 0 0 
L 0 511.2 
z
" style="fill: none; opacity: 0"/>
</g>
<g id="patch_2">
<path d="M 65.178 454.968 
L 458.802 454.968 
L 458.802 61.344 
L 65.178 61.344 
L 65.178 454.968 
z
" style="fill: none; opacity: 0"/>
</g>
<g id="pane3d_1">
<g id="patch_3">
<path d="M 253.506399 236.539754 
L 442.691007 328.059061 
L 442.691007 161.978418 
L 253.506399 70.459111 
" style="fill: #f2f2f2; opacity: 0.5; stroke: #f2f2f2; stroke-linejoin: miter"/>
</g>
</g>
<g id="pane3d_2">
<g id="patch_4">
<path d="M 253.506399 236.539754 
L 91.92748 343.695095 
L 91.92748 177.614452 
L 253.506399 70.459111 
" style="fill: #e6e6e6; opacity: 0.5; stroke: #e6e6e6; stroke-linejoin: miter"/>
</g>
</g>
<g id="pane3d_3">
<g id="patch_5">
<path d="M 253.506399 236.539754 
L 91.92748 343.695095 
L 281.112087 435.214403 
L 442.691007 328.059061 
" style="fill: #ececec; opacity: 0.5; stroke: #ececec; stroke-linejoin: miter"/>
</g>
</g>
<g id="grid3d_1">
<g id="Line3DCollection_1">
<path d="M 439.459428 330.202168 
L 250.274821 238.68286 
L 250.274821 72.602218 
" style="fill: none; stroke: #b0b0b0; stroke-width: 0.8"/>
<path d="M 413.606801 347.347023 
L 224.422194 255.827715 
L 224.422194 89.747072 
" style="fill: none; stroke: #b0b0b0; stroke-width: 0.8"/>
<path d="M 387.754174 364.491877 
L 198.569567 272.97257 
L 198.569567 106.891927 
" style="fill: none; stroke: #b0b0b0; stroke-width: 0.8"/>
<path d="M 361.901547 381.636732 
L 172.716939 290.117424 
L 172.716939 124.036782 
" style="fill: none; stroke: #b0b0b0; stroke-width: 0.8"/>
<path d="M 336.04892 398.781587 
L 146.864312 307.262279 
L 146.864312 141.181636 
" style="fill: none; stroke: #b0b0b0; stroke-width: 0.8"/>
<path d="M 310.196293 415.926441 
L 121.011685 324.407134 
L 121.011685 158.326491 
" style="fill: none; stroke: #b0b0b0; stroke-width: 0.8"/>
<path d="M 284.343666 433.071296 
L 95.159058 341.551988 
L 95.159058 175.471346 
" style="fill: none; stroke: #b0b0b0; stroke-width: 0.8"/>
</g>
</g>
<g id="grid3d_2">
<g id="Line3DCollection_2">
<path d="M 257.290091 72.289497 
L 257.290091 238.37014 
L 95.711172 345.525481 
" style="fill: none; stroke: #b0b0b0; stroke-width: 0.8"/>
<path d="M 287.559628 86.932586 
L 287.559628 253.013229 
L 125.980709 360.168571 
" style="fill: none; stroke: #b0b0b0; stroke-width: 0.8"/>
<path d="M 317.829166 101.575675 
L 317.829166 267.656318 
L 156.250246 374.81166 
" style="fill: none; stroke: #b0b0b0; stroke-width: 0.8"/>
<path d="M 348.098703 116.218765 
L 348.098703 282.299407 
L 186.519784 389.454749 
" style="fill: none; stroke: #b0b0b0; stroke-width: 0.8"/>
<path d="M 378.36824 130.861854 
L 378.36824 296.942497 
L 216.789321 404.097838 
" style="fill: none; stroke: #b0b0b0; stroke-width: 0.8"/>
<path d="M 408.637777 145.504943 
L 408.637777 311.585586 
L 247.058858 418.740927 
" style="fill: none; stroke: #b0b0b0; stroke-width: 0.8"/>
<path d="M 438.907314 160.148032 
L 438.907314 326.228675 
L 277.328395 433.384017 
" style="fill: none; stroke: #b0b0b0; stroke-width: 0.8"/>
</g>
</g>
<g id="grid3d_3">
<g id="Line3DCollection_3">
<path d="M 91.92748 340.373482 
L 253.506399 233.218141 
L 442.691007 324.737448 
" style="fill: none; stroke: #b0b0b0; stroke-width: 0.8"/>
<path d="M 91.92748 313.800579 
L 253.506399 206.645238 
L 442.691007 298.164545 
" style="fill: none; stroke: #b0b0b0; stroke-width: 0.8"/>
<path d="M 91.92748 287.227677 
L 253.506399 180.072335 
L 442.691007 271.591643 
" style="fill: none; stroke: #b0b0b0; stroke-width: 0.8"/>
<path d="M 91.92748 260.654774 
L 253.506399 153.499432 
L 442.691007 245.01874 
" style="fill: none; stroke: #b0b0b0; stroke-width: 0.8"/>
<path d="M 91.92748 234.081871 
L 253.506399 126.926529 
L 442.691007 218.445837 
" style="fill: none; stroke: #b0b0b0; stroke-width: 0.8"/>
<path d="M 91.92748 207.508968 
L 253.506399 100.353626 
L 442.691007 191.872934 
" style="fill: none; stroke: #b0b0b0; stroke-width: 0.8"/>
<path d="M 91.92748 180.936065 
L 253.506399 73.780724 
L 442.691007 165.300031 
" style="fill: none; stroke: #b0b0b0; stroke-width: 0.8"/>
</g>
</g>
<g id="axis3d_1">
<g id="line2d_1">
<path d="M 442.691007 328.059061 
L 281.112087 435.214403 
" style="fill: none; stroke: #000000; stroke-width: 0.8; stroke-linecap: square"/>
</g>
<g id="xtick_1">
<g id="line2d_2">
<path d="M 437.945951 329.470014 
L 442.486382 331.666477 
" style="fill: none; stroke: #000000; stroke-width: 0.8; stroke-linecap: square"/>
</g>
<g id="text_1">
<!-- −300 -->
<g transform="translate(436.337982 352.250453) scale(0.1 -0.1)">
<defs>
<path id="DejaVuSans-2212" d="M 678 2272 
L 4684 2272 
L 4684 1741 
L 678 1741 
L 678 2272 
z
" transform="scale(0.015625)"/>
<path id="DejaVuSans-33" d="M 2597 2516 
Q 3050 2419 3304 2112 
Q 3559 1806 3559 1356 
Q 3559 666 3084 287 
Q 2609 -91 1734 -91 
Q 1441 -91 1130 -33 
Q 819 25 488 141 
L 488 750 
Q 750 597 1062 519 
Q 1375 441 1716 441 
Q 2309 441 2620 675 
Q 2931 909 2931 1356 
Q 2931 1769 2642 2001 
Q 2353 2234 1838 2234 
L 1294 2234 
L 1294 2753 
L 1863 2753 
Q 2328 2753 2575 2939 
Q 2822 3125 2822 3475 
Q 2822 3834 2567 4026 
Q 2313 4219 1838 4219 
Q 1578 4219 1281 4162 
Q 984 4106 628 3988 
L 628 4550 
Q 988 4650 1302 4700 
Q 1616 4750 1894 4750 
Q 2613 4750 3031 4423 
Q 3450 4097 3450 3541 
Q 3450 3153 3228 2886 
Q 3006 2619 2597 2516 
z
" transform="scale(0.015625)"/>
<path id="DejaVuSans-30" d="M 2034 4250 
Q 1547 4250 1301 3770 
Q 1056 3291 1056 2328 
Q 1056 1369 1301 889 
Q 1547 409 2034 409 
Q 2525 409 2770 889 
Q 3016 1369 3016 2328 
Q 3016 3291 2770 3770 
Q 2525 4250 2034 4250 
z
M 2034 4750 
Q 2819 4750 3233 4129 
Q 3647 3509 3647 2328 
Q 3647 1150 3233 529 
Q 2819 -91 2034 -91 
Q 1250 -91 836 529 
Q 422 1150 422 2328 
Q 422 3509 836 4129 
Q 1250 4750 2034 4750 
z
" transform="scale(0.015625)"/>
</defs>
<use href="#DejaVuSans-2212"/>
<use href="#DejaVuSans-33" transform="translate(83.789062 0)"/>
<use href="#DejaVuSans-30" transform="translate(147.412109 0)"/>
<use href="#DejaVuSans-30" transform="translate(211.035156 0)"/>
</g>
</g>
</g>
<g id="xtick_2">
<g id="line2d_3">
<path d="M 412.093324 346.614868 
L 416.633755 348.811332 
" style="fill: none; stroke: #000000; stroke-width: 0.8; stroke-linecap: square"/>
</g>
<g id="text_2">
<!-- −200 -->
<g transform="translate(410.485355 369.395308) scale(0.1 -0.1)">
<defs>
<path id="DejaVuSans-32" d="M 1228 531 
L 3431 531 
L 3431 0 
L 469 0 
L 469 531 
Q 828 903 1448 1529 
Q 2069 2156 2228 2338 
Q 2531 2678 2651 2914 
Q 2772 3150 2772 3378 
Q 2772 3750 2511 3984 
Q 2250 4219 1831 4219 
Q 1534 4219 1204 4116 
Q 875 4013 500 3803 
L 500 4441 
Q 881 4594 1212 4672 
Q 1544 4750 1819 4750 
Q 2544 4750 2975 4387 
Q 3406 4025 3406 3419 
Q 3406 3131 3298 2873 
Q 3191 2616 2906 2266 
Q 2828 2175 2409 1742 
Q 1991 1309 1228 531 
z
" transform="scale(0.015625)"/>
</defs>
<use href="#DejaVuSans-2212"/>
<use href="#DejaVuSans-32" transform="translate(83.789062 0)"/>
<use href="#DejaVuSans-30" transform="translate(147.412109 0)"/>
<use href="#DejaVuSans-30" transform="translate(211.035156 0)"/>
</g>
</g>
</g>
<g id="xtick_3">
<g id="line2d_4">
<path d="M 386.240697 363.759723 
L 390.781128 365.956186 
" style="fill: none; stroke: #000000; stroke-width: 0.8; stroke-linecap: square"/>
</g>
<g id="text_3">
<!-- −100 -->
<g transform="translate(384.632728 386.540163) scale(0.1 -0.1)">
<defs>
<path id="DejaVuSans-31" d="M 794 531 
L 1825 531 
L 1825 4091 
L 703 3866 
L 703 4441 
L 1819 4666 
L 2450 4666 
L 2450 531 
L 3481 531 
L 3481 0 
L 794 0 
L 794 531 
z
" transform="scale(0.015625)"/>
</defs>
<use href="#DejaVuSans-2212"/>
<use href="#DejaVuSans-31" transform="translate(83.789062 0)"/>
<use href="#DejaVuSans-30" transform="translate(147.412109 0)"/>
<use href="#DejaVuSans-30" transform="translate(211.035156 0)"/>
</g>
</g>
</g>
<g id="xtick_4">
<g id="line2d_5">
<path d="M 360.38807 380.904578 
L 364.928501 383.101041 
" style="fill: none; stroke: #000000; stroke-width: 0.8; stroke-linecap: square"/>
</g>
<g id="text_4">
<!-- 0 -->
<g transform="translate(369.332445 403.685017) scale(0.1 -0.1)">
<use href="#DejaVuSans-30"/>
</g>
</g>
</g>
<g id="xtick_5">
<g id="line2d_6">
<path d="M 334.535443 398.049432 
L 339.075874 400.245896 
" style="fill: none; stroke: #000000; stroke-width: 0.8; stroke-linecap: square"/>
</g>
<g id="text_5">
<!-- 100 -->
<g transform="translate(337.117318 420.829872) scale(0.1 -0.1)">
<use href="#DejaVuSans-31"/>
<use href="#DejaVuSans-30" transform="translate(63.623047 0)"/>
<use href="#DejaVuSans-30" transform="translate(127.246094 0)"/>
</g>
</g>
</g>
<g id="xtick_6">
<g id="line2d_7">
<path d="M 308.682816 415.194287 
L 313.223247 417.39075 
" style="fill: none; stroke: #000000; stroke-width: 0.8; stroke-linecap: square"/>
</g>
<g id="text_6">
<!-- 200 -->
<g transform="translate(311.264691 437.974727) scale(0.1 -0.1)">
<use href="#DejaVuSans-32"/>
<use href="#DejaVuSans-30" transform="translate(63.623047 0)"/>
<use href="#DejaVuSans-30" transform="translate(127.246094 0)"/>
</g>
</g>
</g>
<g id="xtick_7">
<g id="line2d_8">
<path d="M 282.830189 432.339141 
L 287.370619 434.535605 
" style="fill: none; stroke: #000000; stroke-width: 0.8; stroke-linecap: square"/>
</g>
<g id="text_7">
<!-- 300 -->
<g transform="translate(285.412064 455.119581) scale(0.1 -0.1)">
<use href="#DejaVuSans-33"/>
<use href="#DejaVuSans-30" transform="translate(63.623047 0)"/>
<use href="#DejaVuSans-30" transform="translate(127.246094 0)"/>
</g>
</g>
</g>
<g id="text_8">
<!-- X -->
<g transform="translate(381.546434 415.80882) scale(0.1 -0.1)">
<defs>
<path id="DejaVuSans-58" d="M 403 4666 
L 1081 4666 
L 2241 2931 
L 3406 4666 
L 4084 4666 
L 2584 2425 
L 4184 0 
L 3506 0 
L 2194 1984 
L 872 0 
L 191 0 
L 1856 2491 
L 403 4666 
z
" transform="scale(0.015625)"/>
</defs>
<use href="#DejaVuSans-58"/>
</g>
</g>
</g>
<g id="axis3d_2">
<g id="line2d_9">
<path d="M 91.92748 343.695095 
L 281.112087 435.214403 
" style="fill: none; stroke: #000000; stroke-width: 0.8; stroke-linecap: square"/>
</g>
<g id="xtick_8">
<g id="line2d_10">
<path d="M 97.003803 344.668239 
L 93.125909 347.239967 
" style="fill: none; stroke: #000000; stroke-width: 0.8; stroke-linecap: square"/>
</g>
<g id="text_9">
<!-- −300 -->
<g transform="translate(72.913948 368.450857) scale(0.1 -0.1)">
<use href="#DejaVuSans-2212"/>
<use href="#DejaVuSans-33" transform="translate(83.789062 0)"/>
<use href="#DejaVuSans-30" transform="translate(147.412109 0)"/>
<use href="#DejaVuSans-30" transform="translate(211.035156 0)"/>
</g>
</g>
</g>
<g id="xtick_9">
<g id="line2d_11">
<path d="M 127.273341 359.311328 
L 123.395446 361.883056 
" style="fill: none; stroke: #000000; stroke-width: 0.8; stroke-linecap: square"/>
</g>
<g id="text_10">
<!-- −200 -->
<g transform="translate(103.183485 383.093946) scale(0.1 -0.1)">
<use href="#DejaVuSans-2212"/>
<use href="#DejaVuSans-32" transform="translate(83.789062 0)"/>
<use href="#DejaVuSans-30" transform="translate(147.412109 0)"/>
<use href="#DejaVuSans-30" transform="translate(211.035156 0)"/>
</g>
</g>
</g>
<g id="xtick_10">
<g id="line2d_12">
<path d="M 157.542878 373.954417 
L 153.664984 376.526145 
" style="fill: none; stroke: #000000; stroke-width: 0.8; stroke-linecap: square"/>
</g>
<g id="text_11">
<!-- −100 -->
<g transform="translate(133.453022 397.737035) scale(0.1 -0.1)">
<use href="#DejaVuSans-2212"/>
<use href="#DejaVuSans-31" transform="translate(83.789062 0)"/>
<use href="#DejaVuSans-30" transform="translate(147.412109 0)"/>
<use href="#DejaVuSans-30" transform="translate(211.035156 0)"/>
</g>
</g>
</g>
<g id="xtick_11">
<g id="line2d_13">
<path d="M 187.812415 388.597506 
L 183.934521 391.169234 
" style="fill: none; stroke: #000000; stroke-width: 0.8; stroke-linecap: square"/>
</g>
<g id="text_12">
<!-- 0 -->
<g transform="translate(174.274903 412.380124) scale(0.1 -0.1)">
<use href="#DejaVuSans-30"/>
</g>
</g>
</g>
<g id="xtick_12">
<g id="line2d_14">
<path d="M 218.081952 403.240595 
L 214.204058 405.812324 
" style="fill: none; stroke: #000000; stroke-width: 0.8; stroke-linecap: square"/>
</g>
<g id="text_13">
<!-- 100 -->
<g transform="translate(198.18194 427.023213) scale(0.1 -0.1)">
<use href="#DejaVuSans-31"/>
<use href="#DejaVuSans-30" transform="translate(63.623047 0)"/>
<use href="#DejaVuSans-30" transform="translate(127.246094 0)"/>
</g>
</g>
</g>
<g id="xtick_13">
<g id="line2d_15">
<path d="M 248.351489 417.883685 
L 244.473595 420.455413 
" style="fill: none; stroke: #000000; stroke-width: 0.8; stroke-linecap: square"/>
</g>
<g id="text_14">
<!-- 200 -->
<g transform="translate(228.451477 441.666303) scale(0.1 -0.1)">
<use href="#DejaVuSans-32"/>
<use href="#DejaVuSans-30" transform="translate(63.623047 0)"/>
<use href="#DejaVuSans-30" transform="translate(127.246094 0)"/>
</g>
</g>
</g>
<g id="xtick_14">
<g id="line2d_16">
<path d="M 278.621027 432.526774 
L 274.743133 435.098502 
" style="fill: none; stroke: #000000; stroke-width: 0.8; stroke-linecap: square"/>
</g>
<g id="text_15">
<!-- 300 -->
<g transform="translate(258.721015 456.309392) scale(0.1 -0.1)">
<use href="#DejaVuSans-33"/>
<use href="#DejaVuSans-30" transform="translate(63.623047 0)"/>
<use href="#DejaVuSans-30" transform="translate(127.246094 0)"/>
</g>
</g>
</g>
<g id="text_16">
<!-- Y -->
<g transform="translate(163.762333 425.533554) scale(0.1 -0.1)">
<defs>
<path id="DejaVuSans-59" d="M -13 4666 
L 666 4666 
L 1959 2747 
L 3244 4666 
L 3922 4666 
L 2272 2222 
L 2272 0 
L 1638 0 
L 1638 2222 
L -13 4666 
z
" transform="scale(0.015625)"/>
</defs>
<use href="#DejaVuSans-59"/>
</g>
</g>
</g>
<g id="axis3d_3">
<g id="line2d_17">
<path d="M 91.92748 343.695095 
L 91.92748 177.614452 
" style="fill: none; stroke: #8a8a8a; stroke-width: 1.7; stroke-linecap: square"/>
</g>
<g id="xtick_15">
<g id="line2d_18">
<path d="M 93.220111 339.51624 
L 89.342217 342.087968 
" style="fill: none; stroke: #000000; stroke-width: 0.8; stroke-linecap: square"/>
</g>
<g id="text_17">
<!-- −300 -->
<g transform="translate(58.518107 348.84901) scale(0.1 -0.1)">
<use href="#DejaVuSans-2212"/>
<use href="#DejaVuSans-33" transform="translate(83.789062 0)"/>
<use href="#DejaVuSans-30" transform="translate(147.412109 0)"/>
<use href="#DejaVuSans-30" transform="translate(211.035156 0)"/>
</g>
</g>
</g>
<g id="xtick_16">
<g id="line2d_19">
<path d="M 93.220111 312.943337 
L 89.342217 315.515065 
" style="fill: none; stroke: #000000; stroke-width: 0.8; stroke-linecap: square"/>
</g>
<g id="text_18">
<!-- −200 -->
<g transform="translate(58.518107 322.276107) scale(0.1 -0.1)">
<use href="#DejaVuSans-2212"/>
<use href="#DejaVuSans-32" transform="translate(83.789062 0)"/>
<use href="#DejaVuSans-30" transform="translate(147.412109 0)"/>
<use href="#DejaVuSans-30" transform="translate(211.035156 0)"/>
</g>
</g>
</g>
<g id="xtick_17">
<g id="line2d_20">
<path d="M 93.220111 286.370434 
L 89.342217 288.942162 
" style="fill: none; stroke: #000000; stroke-width: 0.8; stroke-linecap: square"/>
</g>
<g id="text_19">
<!-- −100 -->
<g transform="translate(58.518107 295.703204) scale(0.1 -0.1)">
<use href="#DejaVuSans-2212"/>
<use href="#DejaVuSans-31" transform="translate(83.789062 0)"/>
<use href="#DejaVuSans-30" transform="translate(147.412109 0)"/>
<use href="#DejaVuSans-30" transform="translate(211.035156 0)"/>
</g>
</g>
</g>
<g id="xtick_18">
<g id="line2d_21">
<path d="M 93.220111 259.797531 
L 89.342217 262.369259 
" style="fill: none; stroke: #000000; stroke-width: 0.8; stroke-linecap: square"/>
</g>
<g id="text_20">
<!-- 0 -->
<g transform="translate(69.070451 269.130301) scale(0.1 -0.1)">
<use href="#DejaVuSans-30"/>
</g>
</g>
</g>
<g id="xtick_19">
<g id="line2d_22">
<path d="M 93.220111 233.224628 
L 89.342217 235.796356 
" style="fill: none; stroke: #000000; stroke-width: 0.8; stroke-linecap: square"/>
</g>
<g id="text_21">
<!-- 100 -->
<g transform="translate(62.707951 242.557398) scale(0.1 -0.1)">
<use href="#DejaVuSans-31"/>
<use href="#DejaVuSans-30" transform="translate(63.623047 0)"/>
<use href="#DejaVuSans-30" transform="translate(127.246094 0)"/>
</g>
</g>
</g>
<g id="xtick_20">
<g id="line2d_23">
<path d="M 93.220111 206.651725 
L 89.342217 209.223454 
" style="fill: none; stroke: #000000; stroke-width: 0.8; stroke-linecap: square"/>
</g>
<g id="text_22">
<!-- 200 -->
<g transform="translate(62.707951 215.984495) scale(0.1 -0.1)">
<use href="#DejaVuSans-32"/>
<use href="#DejaVuSans-30" transform="translate(63.623047 0)"/>
<use href="#DejaVuSans-30" transform="translate(127.246094 0)"/>
</g>
</g>
</g>
<g id="xtick_21">
<g id="line2d_24">
<path d="M 93.220111 180.078822 
L 89.342217 182.650551 
" style="fill: none; stroke: #000000; stroke-width: 0.8; stroke-linecap: square"/>
</g>
<g id="text_23">
<!-- 300 -->
<g transform="translate(62.707951 189.411593) scale(0.1 -0.1)">
<use href="#DejaVuSans-33"/>
<use href="#DejaVuSans-30" transform="translate(63.623047 0)"/>
<use href="#DejaVuSans-30" transform="translate(127.246094 0)"/>
</g>
</g>
</g>
<g id="text_24">
<!-- Z -->
<g transform="translate(45.729048 265.320866) scale(0.1 -0.1)">
<defs>
<path id="DejaVuSans-5a" d="M 359 4666 
L 4025 4666 
L 4025 4184 
L 1075 531 
L 4097 531 
L 4097 0 
L 288 0 
L 288 481 
L 3238 4134 
L 359 4134 
L 359 4666 
z
" transform="scale(0.015625)"/>
</defs>
<use href="#DejaVuSans-5a"/>
</g>
</g>
</g>
<g id="axes_1">
<g id="line2d_25">
<path d="M 266.859242 253.294926 
L 227.563249 279.355105 
" clip-path="url(#p4655778b30)" style="fill: none; stroke: #4b00ff; stroke-width: 2.6"/>
</g>
<g id="line2d_26">
<path d="M 266.859242 253.294926 
L 312.868939 275.552422 
" clip-path="url(#p4655778b30)" style="fill: none; stroke: #ff0000; stroke-width: 2.6"/>
</g>
<g id="line2d_27">
<path d="M 266.859242 253.294926 
L 266.859242 212.106927 
" clip-path="url(#p4655778b30)" style="fill: none; stroke: #008000; stroke-width: 2.6"/>
</g>
<g id="Poly3DCollection_1">
<defs>
<path id="mcdfc4e3869" d="M 265.092478 -263.791015 
L 289.308108 -252.076544 
L 289.308108 -265.735016 
L 265.092478 -277.449487 
z
" style="stroke: #222222; stroke-width: 1.3"/>
</defs>
<g clip-path="url(#p4655778b30)">
<use href="#mcdfc4e3869" x="0" y="511.2" style="fill: #737373; fill-opacity: 0.28; stroke: #222222; stroke-width: 1.3"/>
</g>
</g>
<g id="Poly3DCollection_2">
<defs>
<path id="m7abbdfe783" d="M 265.092478 -263.791015 
L 244.410377 -250.075131 
L 244.410377 -263.733604 
L 265.092478 -277.449487 
z
" style="stroke: #222222; stroke-width: 1.3"/>
</defs>
<g clip-path="url(#p4655778b30)">
<use href="#m7abbdfe783" x="0" y="511.2" style="fill: #737373; fill-opacity: 0.28; stroke: #222222; stroke-width: 1.3"/>
</g>
</g>
<g id="Poly3DCollection_3">
<defs>
<path id="mc560497923" d="M 265.092478 -263.791015 
L 244.410377 -250.075131 
L 268.626006 -238.36066 
L 289.308108 -252.076544 
z
" style="stroke: #222222; stroke-width: 1.3"/>
</defs>
<g clip-path="url(#p4655778b30)">
<use href="#mc560497923" x="0" y="511.2" style="fill: #737373; fill-opacity: 0.28; stroke: #222222; stroke-width: 1.3"/>
</g>
</g>
<g id="Poly3DCollection_4">
<defs>
<path id="mebb159687c" d="M 265.092478 -277.449487 
L 244.410377 -263.733604 
L 268.626006 -252.019132 
L 289.308108 -265.735016 
z
" style="stroke: #008000; stroke-width: 1.3"/>
</defs>
<g clip-path="url(#p4655778b30)">
<use href="#mebb159687c" x="0" y="511.2" style="fill: #737373; fill-opacity: 0.28; stroke: #008000; stroke-width: 1.3"/>
</g>
</g>
<g id="Poly3DCollection_5">
<defs>
<path id="m61585ad16f" d="M 244.410377 -250.075131 
L 268.626006 -238.36066 
L 268.626006 -252.019132 
L 244.410377 -263.733604 
z
" style="stroke: #4b00ff; stroke-width: 1.3"/>
</defs>
<g clip-path="url(#p4655778b30)">
<use href="#m61585ad16f" x="0" y="511.2" style="fill: #737373; fill-opacity: 0.28; stroke: #4b00ff; stroke-width: 1.3"/>
</g>
</g>
<g id="Poly3DCollection_6">
<defs>
<path id="mdc77c8aeda" d="M 289.308108 -252.076544 
L 268.626006 -238.36066 
L 268.626006 -252.019132 
L 289.308108 -265.735016 
z
" style="stroke: #ff0000; stroke-width: 1.3"/>
</defs>
<g clip-path="url(#p4655778b30)">
<use href="#mdc77c8aeda" x="0" y="511.2" style="fill: #737373; fill-opacity: 0.28; stroke: #ff0000; stroke-width: 1.3"/>
</g>
</g>
<g id="text_25">
<!-- IMU 3D object -->
<g transform="translate(220.900065 88.898084) scale(0.1183 -0.1183)">
<defs>
<path id="DejaVuSans-49" d="M 628 4666 
L 1259 4666 
L 1259 0 
L 628 0 
L 628 4666 
z
" transform="scale(0.015625)"/>
<path id="DejaVuSans-4d" d="M 628 4666 
L 1569 4666 
L 2759 1491 
L 3956 4666 
L 4897 4666 
L 4897 0 
L 4281 0 
L 4281 4097 
L 3078 897 
L 2444 897 
L 1241 4097 
L 1241 0 
L 628 0 
L 628 4666 
z
" transform="scale(0.015625)"/>
<path id="DejaVuSans-55" d="M 556 4666 
L 1191 4666 
L 1191 1831 
Q 1191 1081 1462 751 
Q 1734 422 2344 422 
Q 2950 422 3222 751 
Q 3494 1081 3494 1831 
L 3494 4666 
L 4128 4666 
L 4128 1753 
Q 4128 841 3676 375 
Q 3225 -91 2344 -91 
Q 1459 -91 1007 375 
Q 556 841 556 1753 
L 556 4666 
z
" transform="scale(0.015625)"/>
<path id="DejaVuSans-20" transform="scale(0.015625)"/>
<path id="DejaVuSans-44" d="M 1259 4147 
L 1259 519 
L 2022 519 
Q 2988 519 3436 956 
Q 3884 1394 3884 2338 
Q 3884 3275 3436 3711 
Q 2988 4147 2022 4147 
L 1259 4147 
z
M 628 4666 
L 1925 4666 
Q 3281 4666 3915 4102 
Q 4550 3538 4550 2338 
Q 4550 1131 3912 565 
Q 3275 0 1925 0 
L 628 0 
L 628 4666 
z
" transform="scale(0.015625)"/>
<path id="DejaVuSans-6f" d="M 1959 3097 
Q 1497 3097 1228 2736 
Q 959 2375 959 1747 
Q 959 1119 1226 758 
Q 1494 397 1959 397 
Q 2419 397 2687 759 
Q 2956 1122 2956 1747 
Q 2956 2369 2687 2733 
Q 2419 3097 1959 3097 
z
M 1959 3584 
Q 2709 3584 3137 3096 
Q 3566 2609 3566 1747 
Q 3566 888 3137 398 
Q 2709 -91 1959 -91 
Q 1206 -91 779 398 
Q 353 888 353 1747 
Q 353 2609 779 3096 
Q 1206 3584 1959 3584 
z
" transform="scale(0.015625)"/>
<path id="DejaVuSans-62" d="M 3116 1747 
Q 3116 2381 2855 2742 
Q 2594 3103 2138 3103 
Q 1681 3103 1420 2742 
Q 1159 2381 1159 1747 
Q 1159 1113 1420 752 
Q 1681 391 2138 391 
Q 2594 391 2855 752 
Q 3116 1113 3116 1747 
z
M 1159 2969 
Q 1341 3281 1617 3432 
Q 1894 3584 2278 3584 
Q 2916 3584 3314 3078 
Q 3713 2572 3713 1747 
Q 3713 922 3314 415 
Q 2916 -91 2278 -91 
Q 1894 -91 1617 61 
Q 1341 213 1159 525 
L 1159 0 
L 581 0 
L 581 4863 
L 1159 4863 
L 1159 2969 
z
" transform="scale(0.015625)"/>
<path id="DejaVuSans-6a" d="M 603 3500 
L 1178 3500 
L 1178 -63 
Q 1178 -731 923 -1031 
Q 669 -1331 103 -1331 
L -116 -1331 
L -116 -844 
L 38 -844 
Q 366 -844 484 -692 
Q 603 -541 603 -63 
L 603 3500 
z
M 603 4863 
L 1178 4863 
L 1178 4134 
L 603 4134 
L 603 4863 
z
" transform="scale(0.015625)"/>
<path id="DejaVuSans-65" d="M 3597 1894 
L 3597 1613 
L 953 1613 
Q 991 1019 1311 708 
Q 1631 397 2203 397 
Q 2534 397 2845 478 
Q 3156 559 3463 722 
L 3463 178 
Q 3153 47 2828 -22 
Q 2503 -91 2169 -91 
Q 1331 -91 842 396 
Q 353 884 353 1716 
Q 353 2575 817 3079 
Q 1281 3584 2069 3584 
Q 2775 3584 3186 3129 
Q 3597 2675 3597 1894 
z
M 3022 2063 
Q 3016 2534 2758 2815 
Q 2500 3097 2075 3097 
Q 1594 3097 1305 2825 
Q 1016 2553 972 2059 
L 3022 2063 
z
" transform="scale(0.015625)"/>
<path id="DejaVuSans-63" d="M 3122 3366 
L 3122 2828 
Q 2878 2963 2633 3030 
Q 2388 3097 2138 3097 
Q 1578 3097 1268 2742 
Q 959 2388 959 1747 
Q 959 1106 1268 751 
Q 1578 397 2138 397 
Q 2388 397 2633 464 
Q 2878 531 3122 666 
L 3122 134 
Q 2881 22 2623 -34 
Q 2366 -91 2075 -91 
Q 1284 -91 818 406 
Q 353 903 353 1747 
Q 353 2603 823 3093 
Q 1294 3584 2113 3584 
Q 2378 3584 2631 3529 
Q 2884 3475 3122 3366 
z
" transform="scale(0.015625)"/>
<path id="DejaVuSans-74" d="M 1172 4494 
L 1172 3500 
L 2356 3500 
L 2356 3053 
L 1172 3053 
L 1172 1153 
Q 1172 725 1289 603 
Q 1406 481 1766 481 
L 2356 481 
L 2356 0 
L 1766 0 
Q 1100 0 847 248 
Q 594 497 594 1153 
L 594 3053 
L 172 3053 
L 172 3500 
L 594 3500 
L 594 4494 
L 1172 4494 
z
" transform="scale(0.015625)"/>
</defs>
<use href="#DejaVuSans-49"/>
<use href="#DejaVuSans-4d" transform="translate(29.492188 0)"/>
<use href="#DejaVuSans-55" transform="translate(115.771484 0)"/>
<use href="#DejaVuSans-20" transform="translate(188.964844 0)"/>
<use href="#DejaVuSans-33" transform="translate(220.751953 0)"/>
<use href="#DejaVuSans-44" transform="translate(284.375 0)"/>
<use href="#DejaVuSans-20" transform="translate(361.376953 0)"/>
<use href="#DejaVuSans-6f" transform="translate(393.164062 0)"/>
<use href="#DejaVuSans-62" transform="translate(454.345703 0)"/>
<use href="#DejaVuSans-6a" transform="translate(517.822266 0)"/>
<use href="#DejaVuSans-65" transform="translate(545.605469 0)"/>
<use href="#DejaVuSans-63" transform="translate(607.128906 0)"/>
<use href="#DejaVuSans-74" transform="translate(662.109375 0)"/>
</g>
</g>
</g>
</g>
<defs>
<clipPath id="p4655778b30">
<rect x="65.178" y="61.344" width="393.624" height="393.624"/>
</clipPath>
</defs>
</g></svg>

<div style="position:absolute;left:186px;top:971px;width:1058px;height:8px;box-sizing:border-box;border:1px solid #ababab;border-radius:4px;background:#efefef"></div>
<div style="position:absolute;left:185.7px;top:967.6px;width:14.6px;height:14.6px;border-radius:50%;background:#4a3cff"></div>
<div style="position:absolute;left:528px;top:995px;width:23px;height:21px;box-sizing:border-box;border:1px solid #858585;border-radius:3px;background:#efefef"></div>
<div style="position:absolute;left:553px;top:995px;width:48px;height:21px;box-sizing:border-box;border:1px solid #858585;border-radius:3px;background:#efefef"></div>
<div style="position:absolute;left:605px;top:995px;width:40px;height:21px;box-sizing:border-box;border:1px solid #858585;border-radius:3px;background:#efefef"></div>
<div style="position:absolute;left:649px;top:995px;width:40px;height:21px;box-sizing:border-box;border:1px solid #858585;border-radius:3px;background:#efefef"></div>
<div style="position:absolute;left:693px;top:995px;width:40px;height:21px;box-sizing:border-box;border:1px solid #858585;border-radius:3px;background:#efefef"></div>
<div style="position:absolute;left:737px;top:995px;width:40px;height:21px;box-sizing:border-box;border:1px solid #858585;border-radius:3px;background:#efefef"></div>
<div style="position:absolute;left:781px;top:995px;width:40px;height:21px;box-sizing:border-box;border:1px solid #858585;border-radius:3px;background:#efefef"></div>
<div style="position:absolute;left:825px;top:995px;width:46px;height:21px;box-sizing:border-box;border:1px solid #858585;border-radius:3px;background:#efefef"></div>
<div style="position:absolute;left:874px;top:995px;width:24px;height:21px;box-sizing:border-box;border:1px solid #858585;border-radius:3px;background:#efefef"></div>
<svg style="position:absolute;left:0;top:0" width="1920" height="1080" font-family="Liberation Sans"><path d="M535.5 1006.5H543" stroke="#000" stroke-width="1.1"/><rect x="564.4" y="1000" width="5" height="13" fill="#000"/><path d="M572.6 1006.3 L582.4 1001 L582.4 1011.6Z M582.4 1006.3 L592.8 1001 L592.8 1011.6Z" fill="#000"/><rect x="617.2" y="1000" width="5" height="13" fill="#000"/><path d="M625.4 1006.3 L635.5 1001 L635.5 1011.6Z" fill="#000"/><path d="M663.7 1006.4 L673.7 1001.3 L673.7 1011.5Z" fill="#000"/><rect x="704.7" y="1000" width="5" height="13" fill="#000"/><rect x="715.9" y="1000" width="5" height="13" fill="#000"/><path d="M751.3 1001.3 L761.5 1006.4 L751.3 1011.5Z" fill="#000"/><path d="M789.8 1001 L800 1006.3 L789.8 1011.6Z" fill="#000"/><rect x="804" y="1000" width="4" height="13" fill="#000"/><path d="M833 1001 L843.2 1006.3 L833 1011.6Z M843.2 1001 L853.4 1006.3 L843.2 1011.6Z" fill="#000"/><rect x="856.6" y="1000" width="5" height="13" fill="#000"/><path d="M882.3 1006.5H889.7M886 1003V1010" stroke="#000" stroke-width="1"/><circle cx="619.3" cy="1032.4" r="6" fill="#fff" stroke="#767676" stroke-width="1"/><circle cx="686.3" cy="1032.4" r="6" fill="#fff" stroke="#4a3cff" stroke-width="1.3"/><circle cx="686.3" cy="1032.4" r="4" fill="#4a3cff"/><circle cx="752.2" cy="1032.4" r="6" fill="#fff" stroke="#767676" stroke-width="1"/><text x="634" y="1038.8" font-size="13" fill="#222">Once</text><text x="701.6" y="1038.8" font-size="13" fill="#222">Loop</text><text x="767.6" y="1038.8" font-size="13" fill="#222">Reflect</text></svg>
</body></html>
